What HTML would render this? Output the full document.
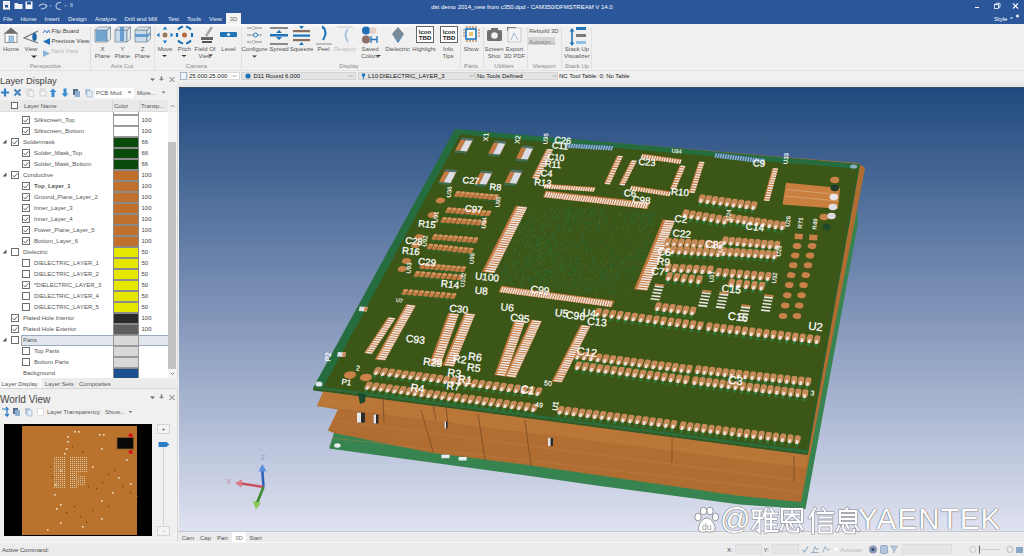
<!DOCTYPE html>
<html><head><meta charset="utf-8"><title>CAM350</title>
<style>
html,body{margin:0;padding:0}
body{width:1024px;height:556px;overflow:hidden;position:relative;background:#f0f0f0;font-family:"Liberation Sans",sans-serif}
.t{position:absolute;white-space:nowrap}
.b{position:absolute;box-sizing:border-box}
svg{position:absolute;overflow:visible}
</style></head><body>
<div class="b" style="left:0px;top:0px;width:1024px;height:24px;background:#2b579a;"></div>
<svg style="left:0;top:0" width="80" height="13">
<rect x="3.5" y="1.5" width="6" height="7.5" fill="#dfe6f2" stroke="#fff" stroke-width="1"/>
<rect x="5" y="5" width="3" height="2.5" fill="#2b579a"/>
<path d="M14.5 3 h3 l1 1 h4 v5 h-8z" fill="#eef2f8"/>
<rect x="25.5" y="1.5" width="7" height="7.5" fill="#f4f6fb"/>
<rect x="27" y="2" width="4" height="2.5" fill="#2b579a"/>
<path d="M39 6 q4 -4 8 0 q-2 3 -6 3" fill="none" stroke="#b9c8e4" stroke-width="1.1"/>
<path d="M49 5.5 l1.5 1 l1.5 -1" fill="#b9c8e4"/>
<path d="M61 2.5 q-5 0 -5 3.5 q0 3.5 5 3.5" fill="none" stroke="#b9c8e4" stroke-width="1.1"/>
<path d="M64 5.5 l1.5 1 l1.5 -1" fill="#b9c8e4"/>
<path d="M70 4 h3 M70 6 h3" stroke="#dfe6f2" stroke-width="0.8"/>
</svg>
<div class="t" style="left:322px;width:400px;text-align:center;top:3.6px;font-size:6px;line-height:7.8px;color:#ffffff;font-weight:normal;">dst demo 2014_new from c350.dpd - CAM350/DFMSTREAM V 14.0</div>
<svg style="left:970px;top:0" width="54" height="24">
<path d="M5 7.5 h4" stroke="#fff" stroke-width="1"/>
<rect x="24.5" y="4.5" width="4" height="4" fill="none" stroke="#fff" stroke-width="0.8"/>
<path d="M26 4.5 v-1.2 h4 v4 h-1.2" fill="none" stroke="#fff" stroke-width="0.8"/>
<path d="M43 3.5 l5 5 M48 3.5 l-5 5" stroke="#fff" stroke-width="1.1"/>
</svg>
<div class="t" style="left:3px;top:15.9px;font-size:6px;line-height:7.8px;color:#e9eef7;font-weight:normal;">File</div>
<div class="t" style="left:20.5px;top:15.9px;font-size:6px;line-height:7.8px;color:#e9eef7;font-weight:normal;">Home</div>
<div class="t" style="left:44.5px;top:15.9px;font-size:6px;line-height:7.8px;color:#e9eef7;font-weight:normal;">Insert</div>
<div class="t" style="left:68px;top:15.9px;font-size:6px;line-height:7.8px;color:#e9eef7;font-weight:normal;">Design</div>
<div class="t" style="left:95px;top:15.9px;font-size:6px;line-height:7.8px;color:#e9eef7;font-weight:normal;">Analyze</div>
<div class="t" style="left:124.5px;top:15.9px;font-size:6px;line-height:7.8px;color:#e9eef7;font-weight:normal;">Drill and Mill</div>
<div class="t" style="left:168px;top:15.9px;font-size:6px;line-height:7.8px;color:#e9eef7;font-weight:normal;">Test</div>
<div class="t" style="left:187px;top:15.9px;font-size:6px;line-height:7.8px;color:#e9eef7;font-weight:normal;">Tools</div>
<div class="t" style="left:209px;top:15.9px;font-size:6px;line-height:7.8px;color:#e9eef7;font-weight:normal;">View</div>
<div class="b" style="left:226px;top:13px;width:15px;height:11px;background:#f3f3f3;"></div>
<div class="t" style="left:33.5px;width:400px;text-align:center;top:15.9px;font-size:6px;line-height:7.8px;color:#6a6a6a;font-weight:normal;">3D</div>
<div class="t" style="left:994px;top:16.1px;font-size:6px;line-height:7.8px;color:#ffffff;font-weight:normal;">Style</div>
<svg style="left:1008px;top:13px" width="16" height="10">
<path d="M2 5 h3" stroke="#fff" stroke-width="0.9"/>
<circle cx="9.5" cy="3" r="1.6" fill="#dfe6f2"/>
</svg>
<div class="b" style="left:0px;top:24px;width:1024px;height:47px;background:#f0f0f0;"></div>
<div class="b" style="left:0px;top:24px;width:592px;height:3px;background:#f7f7f9;"></div>
<div class="b" style="left:0px;top:70px;width:1024px;height:1px;background:#e2e2e2;"></div>
<div class="b" style="left:90px;top:27px;width:1px;height:42px;background:#e0e0e0;"></div>
<div class="b" style="left:154px;top:27px;width:1px;height:42px;background:#e0e0e0;"></div>
<div class="b" style="left:241px;top:27px;width:1px;height:42px;background:#e0e0e0;"></div>
<div class="b" style="left:460px;top:27px;width:1px;height:42px;background:#e0e0e0;"></div>
<div class="b" style="left:483px;top:27px;width:1px;height:42px;background:#e0e0e0;"></div>
<div class="b" style="left:527px;top:27px;width:1px;height:42px;background:#e0e0e0;"></div>
<div class="b" style="left:561px;top:27px;width:1px;height:42px;background:#e0e0e0;"></div>
<div class="b" style="left:591px;top:27px;width:1px;height:42px;background:#e0e0e0;"></div>
<div class="t" style="left:-154.5px;width:400px;text-align:center;top:62.9px;font-size:6px;line-height:7.8px;color:#8a8a8a;font-weight:normal;">Perspective</div>
<div class="t" style="left:-78px;width:400px;text-align:center;top:62.9px;font-size:6px;line-height:7.8px;color:#8a8a8a;font-weight:normal;">Axis Cut</div>
<div class="t" style="left:-3.5px;width:400px;text-align:center;top:62.9px;font-size:6px;line-height:7.8px;color:#8a8a8a;font-weight:normal;">Camera</div>
<div class="t" style="left:149px;width:400px;text-align:center;top:62.9px;font-size:6px;line-height:7.8px;color:#8a8a8a;font-weight:normal;">Display</div>
<div class="t" style="left:271px;width:400px;text-align:center;top:62.9px;font-size:6px;line-height:7.8px;color:#8a8a8a;font-weight:normal;">Parts</div>
<div class="t" style="left:304px;width:400px;text-align:center;top:62.9px;font-size:6px;line-height:7.8px;color:#8a8a8a;font-weight:normal;">Utilities</div>
<div class="t" style="left:344px;width:400px;text-align:center;top:62.9px;font-size:6px;line-height:7.8px;color:#8a8a8a;font-weight:normal;">Viewport</div>
<div class="t" style="left:377px;width:400px;text-align:center;top:62.9px;font-size:6px;line-height:7.8px;color:#8a8a8a;font-weight:normal;">Stack Up</div>
<svg style="left:0;top:24px" width="90" height="40">
<path d="M3.5 10 L11 3.5 L18.5 10 z" fill="#6e6e6e"/>
<rect x="5" y="9.5" width="12" height="9" fill="#fafafa" stroke="#8a8a8a" stroke-width="0.9"/>
<rect x="9" y="12" width="4.5" height="6.5" fill="#9ec4e4" stroke="#6f8fb0" stroke-width="0.6"/>
<path d="M38 7 L24 14 L38 19" fill="none" stroke="#707070" stroke-width="1.1"/>
<ellipse cx="34.5" cy="13" rx="2.2" ry="4" fill="#1e64a8"/>
<path d="M43 9 l2 -3 l2 3 l1.5 -3 l1.5 3" fill="none" stroke="#2c70b8" stroke-width="0.9"/>
<path d="M43 17.5 l7 -3.5 v7 z" fill="#1f6fb8"/>
<path d="M43 26 l7 3.5 l-7 3.5 z" fill="#8ab6dc"/>
<path d="M31 31.5 l3 2.5 l3 -2.5z" fill="#333"/>
</svg>
<div class="t" style="left:-189px;width:400px;text-align:center;top:46.1px;font-size:6px;line-height:7.8px;color:#555;font-weight:normal;">Home</div>
<div class="t" style="left:-169px;width:400px;text-align:center;top:46.1px;font-size:6px;line-height:7.8px;color:#555;font-weight:normal;">View</div>
<div class="t" style="left:51.5px;top:28.1px;font-size:6px;line-height:7.8px;color:#444;font-weight:normal;">Flip Board</div>
<div class="t" style="left:51.5px;top:38.1px;font-size:6px;line-height:7.8px;color:#444;font-weight:normal;">Previous View</div>
<div class="t" style="left:51.5px;top:48.1px;font-size:6px;line-height:7.8px;color:#b4b4b4;font-weight:normal;">Next View</div>
<svg style="left:0;top:0" width="160" height="60"><g transform="translate(94,26)">
<path d="M1 4 h12 v12 h-12z" fill="#c9dcec" stroke="#7c8b98" stroke-width="0.8"/>
<path d="M1 4 l3.5 -3 h12 l-3.5 3z M13 4 l3.5 -3 v12 l-3.5 3z" fill="#dfe8f0" stroke="#7c8b98" stroke-width="0.8"/>
</g><path d="M96 30 h11 v11 h-11z" fill="#5b95c8" opacity="0.8"/><g transform="translate(114,26)">
<path d="M1 4 h12 v12 h-12z" fill="#c9dcec" stroke="#7c8b98" stroke-width="0.8"/>
<path d="M1 4 l3.5 -3 h12 l-3.5 3z M13 4 l3.5 -3 v12 l-3.5 3z" fill="#dfe8f0" stroke="#7c8b98" stroke-width="0.8"/>
</g><path d="M120 27 v14 h4 v-14z" fill="#4f8fc8" opacity="0.8"/><g transform="translate(134,26)">
<path d="M1 4 h12 v12 h-12z" fill="#c9dcec" stroke="#7c8b98" stroke-width="0.8"/>
<path d="M1 4 l3.5 -3 h12 l-3.5 3z M13 4 l3.5 -3 v12 l-3.5 3z" fill="#dfe8f0" stroke="#7c8b98" stroke-width="0.8"/>
</g><path d="M135 34 h13 l2 -2 v3 l-2 2 h-13z" fill="#4f8fc8" opacity="0.8"/></svg>
<div class="t" style="left:-97.5px;width:400px;text-align:center;top:46.1px;font-size:6px;line-height:7.8px;color:#555;font-weight:normal;">X</div>
<div class="t" style="left:-97.5px;width:400px;text-align:center;top:53.1px;font-size:6px;line-height:7.8px;color:#555;font-weight:normal;">Plane</div>
<div class="t" style="left:-77.5px;width:400px;text-align:center;top:46.1px;font-size:6px;line-height:7.8px;color:#555;font-weight:normal;">Y</div>
<div class="t" style="left:-77.5px;width:400px;text-align:center;top:53.1px;font-size:6px;line-height:7.8px;color:#555;font-weight:normal;">Plane</div>
<div class="t" style="left:-57.5px;width:400px;text-align:center;top:46.1px;font-size:6px;line-height:7.8px;color:#555;font-weight:normal;">Z</div>
<div class="t" style="left:-57.5px;width:400px;text-align:center;top:53.1px;font-size:6px;line-height:7.8px;color:#555;font-weight:normal;">Plane</div>
<svg style="left:150px;top:24px" width="100" height="40">
<circle cx="15" cy="11" r="2.5" fill="#9a7a58"/>
<path d="M15 2.5 l2.3 3 h-4.6z M15 19.5 l2.3 -3 h-4.6z M6.5 11 l3 -2.3 v4.6z M23.5 11 l-3 -2.3 v4.6z" fill="#1e7ac4"/>
<circle cx="34.5" cy="11" r="2.5" fill="#b8683e"/>
<path d="M28 5.5 a9 9 0 0 1 5 -3 M36 2.5 a9 9 0 0 1 5 3 M41 16.5 a9 9 0 0 1 -5 3 M33 19.5 a9 9 0 0 1 -5 -3" fill="none" stroke="#1a6fb5" stroke-width="2.2"/>
<path d="M27 9 v4 M42 9 v4" stroke="#1a6fb5" stroke-width="2.2"/>
<path d="M62 3 l-6 9" stroke="#a8a8a8" stroke-width="2.5"/>
<rect x="51" y="13" width="12" height="3" fill="#666"/>
<rect x="52" y="17" width="10" height="2" fill="#555"/>
<rect x="70" y="8" width="17" height="5" rx="1" fill="#1f74b9"/>
<circle cx="78.5" cy="10.5" r="1.6" fill="#e8f2fb"/>
<path d="M12 31 l2.5 2 l2.5 -2z M31.5 31 l2.5 2 l2.5 -2z M58 30.5 l2.5 2 l2.5 -2z" fill="#333"/>
</svg>
<div class="t" style="left:-35px;width:400px;text-align:center;top:46.1px;font-size:6px;line-height:7.8px;color:#555;font-weight:normal;">Move</div>
<div class="t" style="left:-15.5px;width:400px;text-align:center;top:46.1px;font-size:6px;line-height:7.8px;color:#555;font-weight:normal;">Pitch</div>
<div class="t" style="left:5px;width:400px;text-align:center;top:46.1px;font-size:6px;line-height:7.8px;color:#555;font-weight:normal;">Field Of</div>
<div class="t" style="left:5px;width:400px;text-align:center;top:53.1px;font-size:6px;line-height:7.8px;color:#555;font-weight:normal;">View</div>
<div class="t" style="left:28.5px;width:400px;text-align:center;top:46.1px;font-size:6px;line-height:7.8px;color:#555;font-weight:normal;">Level</div>
<svg style="left:240px;top:24px" width="240" height="40">
<path d="M7 4 h4 M15 4 h7 M7 11 h6 M18 11 h4 M7 18 h4 M15 18 h7" stroke="#888" stroke-width="1"/>
<circle cx="13.5" cy="4" r="1.6" fill="#fff" stroke="#888" stroke-width="0.6"/>
<circle cx="15.5" cy="11" r="2" fill="#fff" stroke="#1f74b9" stroke-width="1"/>
<circle cx="13.5" cy="18" r="1.6" fill="#fff" stroke="#888" stroke-width="0.6"/>
<rect x="30" y="3" width="18" height="2" fill="#8a8a8a"/>
<rect x="30" y="10" width="18" height="2.5" fill="#1f74b9"/>
<rect x="30" y="19" width="18" height="2" fill="#8a8a8a"/>
<path d="M39 6 l-3 3 h6z M39 16 l-3 -3 h6z" fill="#1f74b9"/>
<rect x="53" y="6" width="17" height="2.2" fill="#8a7060"/>
<rect x="53" y="10.5" width="17" height="2.2" fill="#1f74b9"/>
<rect x="53" y="15" width="17" height="2.2" fill="#8a7060"/>
<path d="M61.5 5 l-2.5 -3 h5z M61.5 18 l-2.5 3 h5z" fill="#1f74b9"/>
<path d="M83 3 q5 5 0 13" fill="none" stroke="#1f74b9" stroke-width="2"/>
<path d="M82 1.5 l3 2 l-3 1.5z" fill="#1f74b9"/>
<path d="M76 20 h16" stroke="#8a8a8a" stroke-width="1"/>
<path d="M108 5 q-5 5 0 13" fill="none" stroke="#a9c7e2" stroke-width="2"/>
<path d="M97 3 h16" stroke="#c6c6c6" stroke-width="1"/>
<circle cx="126" cy="6.5" r="4" fill="#1f6fb5"/>
<circle cx="133" cy="6.5" r="3.5" fill="#e6d0c8"/>
<circle cx="126" cy="15.5" r="4" fill="#8c6f69"/>
<path d="M131 12 v7 M137 12 v7 M131 15.5 h6" stroke="#1f74b9" stroke-width="1.3"/>
<path d="M158 3 l6 7 l-6 7 l-6 -7z" fill="#7a8a98"/>
<path d="M152 10 l6 7 l6 -7 l-6 9z" fill="#2f72b3"/>
<rect x="176.5" y="2.5" width="17" height="16" fill="#fff" stroke="#555" stroke-width="0.9"/>
<rect x="200.5" y="2.5" width="17" height="16" fill="#fff" stroke="#555" stroke-width="0.9"/>
<text x="185" y="9.6" font-size="6" font-weight="bold" text-anchor="middle" fill="#222" font-family="Liberation Sans">Icon</text>
<text x="185" y="16.4" font-size="6.2" font-weight="bold" text-anchor="middle" fill="#222" font-family="Liberation Sans">TBD</text>
<text x="209" y="9.6" font-size="6" font-weight="bold" text-anchor="middle" fill="#222" font-family="Liberation Sans">Icon</text>
<text x="209" y="16.4" font-size="6.2" font-weight="bold" text-anchor="middle" fill="#222" font-family="Liberation Sans">TBD</text>
<path d="M136 31 l2.5 2 l2.5 -2z" fill="#333"/>
</svg>
<div class="t" style="left:54.5px;width:400px;text-align:center;top:46.1px;font-size:6px;line-height:7.8px;color:#555;font-weight:normal;">Configure</div>
<div class="t" style="left:79px;width:400px;text-align:center;top:46.1px;font-size:6px;line-height:7.8px;color:#555;font-weight:normal;">Spread</div>
<div class="t" style="left:101.5px;width:400px;text-align:center;top:46.1px;font-size:6px;line-height:7.8px;color:#555;font-weight:normal;">Squeeze</div>
<div class="t" style="left:123.5px;width:400px;text-align:center;top:46.1px;font-size:6px;line-height:7.8px;color:#555;font-weight:normal;">Peel</div>
<div class="t" style="left:145px;width:400px;text-align:center;top:46.1px;font-size:6px;line-height:7.8px;color:#bdbdbd;font-weight:normal;">Reapply</div>
<div class="t" style="left:170px;width:400px;text-align:center;top:46.1px;font-size:6px;line-height:7.8px;color:#555;font-weight:normal;">Saved</div>
<div class="t" style="left:170px;width:400px;text-align:center;top:53.1px;font-size:6px;line-height:7.8px;color:#555;font-weight:normal;">Colors</div>
<div class="t" style="left:197.5px;width:400px;text-align:center;top:46.1px;font-size:6px;line-height:7.8px;color:#555;font-weight:normal;">Dielectric</div>
<div class="t" style="left:224px;width:400px;text-align:center;top:46.1px;font-size:6px;line-height:7.8px;color:#555;font-weight:normal;">Highlight</div>
<div class="t" style="left:248px;width:400px;text-align:center;top:46.1px;font-size:6px;line-height:7.8px;color:#555;font-weight:normal;">Info</div>
<div class="t" style="left:248px;width:400px;text-align:center;top:53.1px;font-size:6px;line-height:7.8px;color:#555;font-weight:normal;">Tips</div>
<div class="t" style="left:271px;width:400px;text-align:center;top:46.1px;font-size:6px;line-height:7.8px;color:#555;font-weight:normal;">Show</div>
<svg style="left:250px;top:55px" width="10" height="5"><path d="M2 0.5 l2.5 2 l2.5 -2z" fill="#333"/></svg>
<svg style="left:460px;top:24px" width="140" height="40">
<rect x="6" y="5" width="10" height="10" fill="#fff" stroke="#1f74b9" stroke-width="1.6"/>
<rect x="9" y="8" width="4" height="4" fill="#f0c070"/>
<path d="M7 2 v2 M10 2 v2 M13 2 v2 M16 2 v2 M7 16 v2 M10 16 v2 M13 16 v2 M16 16 v2 M3 6 h2 M3 9 h2 M3 12 h2 M18 6 h2 M18 9 h2 M18 12 h2" stroke="#b07a4a" stroke-width="1.2"/>
<rect x="27" y="6" width="15" height="11" rx="1.5" fill="#707070"/>
<rect x="31" y="4" width="7" height="3" fill="#707070"/>
<circle cx="34.5" cy="11.5" r="3.3" fill="#f2f2f2"/>
<rect x="47" y="3" width="9" height="4" fill="#666"/>
<rect x="48" y="4" width="13" height="14" fill="#f4f4f4" stroke="#b0b0b0" stroke-width="0.6"/>
<path d="M51 16 l3 -7 l4 7" fill="none" stroke="#9fbcd8" stroke-width="1"/>
<rect x="68" y="13" width="27" height="8" fill="#d4d4d4"/>
<path d="M112 7 v13" stroke="#1f74b9" stroke-width="1.6"/>
<path d="M112 4 l-2.5 3.5 h5z M112 22 l-2.5 -3.5 h5z" fill="#1f74b9"/>
<rect x="116" y="3" width="10" height="3" fill="#1f74b9"/>
<rect x="116" y="10" width="10" height="3" fill="#7a7a7a"/>
<rect x="116" y="17" width="10" height="3" fill="#8cc0e8"/>
</svg>
<div class="t" style="left:529px;top:28.1px;font-size:6px;line-height:7.8px;color:#555;font-weight:normal;">Rebuild 3D</div>
<div class="t" style="left:529px;top:38.6px;font-size:6px;line-height:7.8px;color:#777;font-weight:normal;">Autosyn...</div>
<div class="t" style="left:294px;width:400px;text-align:center;top:46.1px;font-size:6px;line-height:7.8px;color:#555;font-weight:normal;">Screen</div>
<div class="t" style="left:294px;width:400px;text-align:center;top:53.1px;font-size:6px;line-height:7.8px;color:#555;font-weight:normal;">Shot</div>
<div class="t" style="left:314.5px;width:400px;text-align:center;top:46.1px;font-size:6px;line-height:7.8px;color:#555;font-weight:normal;">Export</div>
<div class="t" style="left:314.5px;width:400px;text-align:center;top:53.1px;font-size:6px;line-height:7.8px;color:#555;font-weight:normal;">3D PDF</div>
<div class="t" style="left:377px;width:400px;text-align:center;top:46.1px;font-size:6px;line-height:7.8px;color:#555;font-weight:normal;">Stack Up</div>
<div class="t" style="left:377px;width:400px;text-align:center;top:53.1px;font-size:6px;line-height:7.8px;color:#555;font-weight:normal;">Visualizer</div>
<div class="b" style="left:0px;top:71px;width:1024px;height:10px;background:#eeeeee;"></div>
<div class="b" style="left:0px;top:80px;width:1024px;height:7px;background:#e6e6e6;background:linear-gradient(#e9e9e9,#dcdcdc)"></div>
<div class="b" style="left:178px;top:71px;width:846px;height:16px;background:transparent;background:linear-gradient(#f0f0f0 0,#f0f0f0 60%,#e2e2e2 100%)"></div>
<svg style="left:180px;top:72px" width="10" height="9"><rect x="0.5" y="0.5" width="6" height="7" fill="#eef3f8" stroke="#8aa0b8" stroke-width="0.7"/></svg>
<div class="b" style="left:187px;top:72px;width:53px;height:8px;background:#fff;border:1px solid #dadada"></div>
<div class="t" style="left:189px;top:73.1px;font-size:6px;line-height:7.8px;color:#111;font-weight:normal;">25.000:25.000</div>
<svg style="left:232px;top:74px" width="6" height="5"><path d="M0.5 1 l2 2 l2 -2" fill="none" stroke="#888" stroke-width="0.7"/></svg>
<div class="b" style="left:241px;top:72px;width:115px;height:8px;background:#e4e4e4;border:1px solid #d4d4d4"></div>
<svg style="left:244px;top:72px" width="10" height="9"><circle cx="4" cy="4" r="2.6" fill="#1f74b9"/></svg>
<div class="t" style="left:253.5px;top:73.1px;font-size:6px;line-height:7.8px;color:#111;font-weight:normal;">D11  Round 6.000</div>
<svg style="left:348px;top:74px" width="6" height="5"><path d="M0.5 1 l2 2 l2 -2" fill="none" stroke="#999" stroke-width="0.7"/></svg>
<div class="b" style="left:358px;top:72px;width:117px;height:8px;background:#e4e4e4;border:1px solid #d4d4d4"></div>
<svg style="left:360px;top:72px" width="10" height="9"><circle cx="3.5" cy="3" r="1.8" fill="#1f74b9"/><path d="M3.5 4 v3" stroke="#1f74b9"/></svg>
<div class="t" style="left:368px;top:73.1px;font-size:6px;line-height:7.8px;color:#111;font-weight:normal;">L10:DIELECTRIC_LAYER_3</div>
<svg style="left:469px;top:74px" width="6" height="5"><path d="M0.5 1 l2 2 l2 -2" fill="none" stroke="#999" stroke-width="0.7"/></svg>
<div class="b" style="left:475px;top:72px;width:83px;height:8px;background:#e4e4e4;border:1px solid #d4d4d4"></div>
<div class="t" style="left:477px;top:73.1px;font-size:6px;line-height:7.8px;color:#111;font-weight:normal;">No Tools Defined</div>
<svg style="left:552px;top:74px" width="6" height="5"><path d="M0.5 1 l2 2 l2 -2" fill="none" stroke="#999" stroke-width="0.7"/></svg>
<div class="t" style="left:559px;top:73.3px;font-size:6px;line-height:7.8px;color:#1a1a1a;font-weight:normal;">NC Tool Table: 0: No Table</div>
<div class="b" style="left:178px;top:531px;width:846px;height:12px;background:#ececec;"></div>
<div class="b" style="left:178px;top:531px;width:846px;height:1px;background:#c8c8d0;"></div>
<div class="t" style="left:-12px;width:400px;text-align:center;top:534.6px;font-size:6px;line-height:7.8px;color:#555;font-weight:normal;">Cam</div>
<div class="t" style="left:5.5px;width:400px;text-align:center;top:534.6px;font-size:6px;line-height:7.8px;color:#555;font-weight:normal;">Cap</div>
<div class="t" style="left:22.5px;width:400px;text-align:center;top:534.6px;font-size:6px;line-height:7.8px;color:#555;font-weight:normal;">Part</div>
<div class="t" style="left:55.5px;width:400px;text-align:center;top:534.6px;font-size:6px;line-height:7.8px;color:#555;font-weight:normal;">Start</div>
<div class="b" style="left:232px;top:532px;width:14px;height:10px;background:#ffffff;"></div>
<div class="t" style="left:39px;width:400px;text-align:center;top:534.6px;font-size:6px;line-height:7.8px;color:#777;font-weight:normal;">3D</div>
<div class="b" style="left:0px;top:542px;width:1024px;height:14px;background:#ececec;"></div>
<div class="b" style="left:0px;top:542px;width:1024px;height:1px;background:#f6f6f6;"></div>
<div class="t" style="left:2px;top:546.6px;font-size:6px;line-height:7.8px;color:#444;font-weight:normal;">Active Command:</div>
<div class="t" style="left:727px;top:546.6px;font-size:6px;line-height:7.8px;color:#444;font-weight:normal;">X:</div>
<div class="b" style="left:735px;top:544px;width:27px;height:10px;background:#e6e6e6;border:1px solid #dddddd"></div>
<div class="t" style="left:763.5px;top:546.6px;font-size:6px;line-height:7.8px;color:#444;font-weight:normal;">Y:</div>
<div class="b" style="left:772px;top:544px;width:27px;height:10px;background:#e6e6e6;border:1px solid #dddddd"></div>
<svg style="left:800px;top:543px" width="224" height="13">
<path d="M2.5 6.5 l2 2.5 l3.5 -5.5" fill="none" stroke="#8fb0d0" stroke-width="1.2"/>
<path d="M13 9.5 l2 -6 l1.5 3 l2.5 -1 M11 9.5 h8" fill="none" stroke="#8fa8c0" stroke-width="0.9"/>
<path d="M23 9.5 l2 -6 l3 4 l2 -2" fill="none" stroke="#8fa8c0" stroke-width="0.9"/>
<rect x="33.5" y="3.5" width="5" height="5" fill="#fafafa" stroke="#e0e0e0" stroke-width="0.6"/>
<circle cx="73" cy="6.5" r="4" fill="#8898b8"/>
<circle cx="73" cy="6.5" r="1.6" fill="#3a4a6a"/>
<rect x="80.5" y="2.5" width="7" height="8" rx="1.5" fill="#b0c4dc" stroke="#7890b0" stroke-width="0.6"/>
<path d="M90.5 3 h7 l-4 7 v-3z" fill="#b8c8dc" stroke="#8aa0b8" stroke-width="0.6"/>
<circle cx="173" cy="6.5" r="3" fill="none" stroke="#c0c0c0" stroke-width="0.8"/>
<path d="M179.5 2.5 v8" stroke="#707070" stroke-width="1.2"/>
<path d="M180 6.5 h20" stroke="#c8c8c8" stroke-width="0.8"/>
<circle cx="210" cy="6.5" r="3" fill="none" stroke="#b0b0b0" stroke-width="0.8"/>
<rect x="216" y="4" width="7" height="6" fill="#8aa6c8"/>
</svg>
<div class="t" style="left:840px;top:546.6px;font-size:6px;line-height:7.8px;color:#bbbbbb;font-weight:normal;">Autopan</div>
<div class="b" style="left:902px;top:544px;width:50px;height:10px;background:#e6e6e6;border:1px solid #dddddd"></div>
<div class="b" style="left:0px;top:71px;width:178px;height:471px;background:#f0f0f0;"></div>
<div class="b" style="left:177px;top:86px;width:1px;height:456px;background:#d8d8d8;"></div>
<div class="t" style="left:0px;top:74.9px;font-size:9.4px;line-height:12.2px;color:#444;font-weight:normal;">Layer Display</div>
<svg style="left:140px;top:74px" width="38" height="12">
<path d="M10 4.5 l2.5 2.5 l2.5 -2.5z" fill="#666"/>
<path d="M21.5 2 v5 M20 4 h3 M19.5 5.5 h4" stroke="#777" stroke-width="0.8"/>
<path d="M29.5 3 l5 5 M34.5 3 l-5 5" stroke="#666" stroke-width="0.9"/>
</svg>
<svg style="left:0;top:87px" width="178" height="12">
<path d="M5 1.5 v8 M1 5.5 h8" stroke="#2f7ec6" stroke-width="2.2"/>
<path d="M14.5 2.5 l6 6 M20.5 2.5 l-6 6" stroke="#4a86c0" stroke-width="2.2"/>
<rect x="27" y="2" width="4.5" height="6" fill="#f4f4f4" stroke="#bdbdbd" stroke-width="0.6"/>
<rect x="29" y="3.5" width="4.5" height="6" fill="#f4f4f4" stroke="#bdbdbd" stroke-width="0.6"/>
<rect x="40" y="4" width="6" height="5" fill="#f4f4f4" stroke="#bdbdbd" stroke-width="0.6"/>
<path d="M40 2 h5" stroke="#c0c0c0" stroke-width="0.8"/>
<path d="M53 1.5 l3.5 3.5 h-2 v5 h-3 v-5 h-2z" fill="#3a8ad0"/>
<path d="M65 10 l3.5 -3.5 h-2 v-5 h-3 v5 h-2z" fill="#3a8ad0"/>
<rect x="73" y="2" width="5" height="6" fill="#557090"/>
<rect x="75" y="4" width="5" height="6" fill="#90b0d0"/>
<rect x="85" y="2" width="5" height="6" fill="#b8c8d8"/>
<rect x="87" y="4" width="5" height="6" fill="#e0ecf6" stroke="#7fa0c0" stroke-width="0.5"/>
</svg>
<div class="b" style="left:95px;top:88px;width:39px;height:10px;background:#ffffff;"></div>
<div class="t" style="left:96px;top:90.1px;font-size:6px;line-height:7.8px;color:#555;font-weight:normal;width:26px;overflow:hidden">PCB Mode</div>
<svg style="left:127px;top:91px" width="6" height="4"><path d="M0.5 0.5 l2 2 l2 -2z" fill="#777"/></svg>
<div class="t" style="left:137px;top:90.1px;font-size:6px;line-height:7.8px;color:#555;font-weight:normal;">More...</div>
<svg style="left:161px;top:91px" width="6" height="4"><path d="M0.5 0.5 l2 2 l2 -2z" fill="#777"/></svg>
<div class="b" style="left:0px;top:100px;width:168px;height:12px;background:#e9e9e9;"></div>
<div class="b" style="left:0px;top:111px;width:168px;height:1px;background:#dcdcdc;"></div>
<div class="b" style="left:11px;top:102px;width:7px;height:7px;background:#fbfbfb;border:1px solid #6a6a6a"></div>
<div class="t" style="left:24px;top:102.6px;font-size:6px;line-height:7.8px;color:#555;font-weight:normal;">Layer Name</div>
<div class="t" style="left:114px;top:102.6px;font-size:6px;line-height:7.8px;color:#555;font-weight:normal;">Color</div>
<div class="t" style="left:141px;top:102.6px;font-size:6px;line-height:7.8px;color:#555;font-weight:normal;">Transp...</div>
<svg style="left:168px;top:100px" width="10" height="12"><path d="M2.5 7 l2 -2 l2 2" fill="none" stroke="#777" stroke-width="0.8"/></svg>
<div class="b" style="left:112px;top:100px;width:1px;height:12px;background:#d8d8d8;"></div>
<div class="b" style="left:139px;top:100px;width:1px;height:12px;background:#d8d8d8;"></div>
<div class="b" style="left:0px;top:112px;width:168px;height:266px;background:#ffffff;"></div>
<div class="b" style="left:113px;top:112px;width:26px;height:3px;background:#ffffff;border:1px solid #9a9a9a;border-top:none"></div>
<div class="b" style="left:22px;top:116px;width:8px;height:8px;background:#ffffff;border:1px solid #6e6e6e"></div>
<div class="t" style="left:34px;top:117.3px;font-size:6px;line-height:7.8px;color:#555;font-weight:normal;">Silkscreen_Top</div>
<div class="b" style="left:113px;top:115px;width:26px;height:11px;background:#ffffff;border:1px solid #9a9a9a"></div>
<div class="t" style="left:141.5px;top:117.3px;font-size:6px;line-height:7.8px;color:#444;font-weight:normal;">100</div>
<div class="b" style="left:22px;top:127px;width:8px;height:8px;background:#ffffff;border:1px solid #6e6e6e"></div>
<div class="t" style="left:34px;top:128.3px;font-size:6px;line-height:7.8px;color:#555;font-weight:normal;">Silkscreen_Bottom</div>
<div class="b" style="left:113px;top:126px;width:26px;height:11px;background:#ffffff;border:1px solid #9a9a9a"></div>
<div class="t" style="left:141.5px;top:128.3px;font-size:6px;line-height:7.8px;color:#444;font-weight:normal;">100</div>
<svg style="left:2px;top:139px" width="6" height="6"><path d="M4.5 0.5 v4 h-4z" fill="#555"/></svg>
<div class="b" style="left:11px;top:138px;width:8px;height:8px;background:#ffffff;border:1px solid #6e6e6e"></div>
<div class="t" style="left:23px;top:139.3px;font-size:6px;line-height:7.8px;color:#555;font-weight:normal;">Soldermask</div>
<div class="b" style="left:113px;top:137px;width:26px;height:11px;background:#0b4a0b;border:1px solid #8a8a8a"></div>
<div class="t" style="left:141.5px;top:139.3px;font-size:6px;line-height:7.8px;color:#444;font-weight:normal;">66</div>
<div class="b" style="left:22px;top:149px;width:8px;height:8px;background:#ffffff;border:1px solid #6e6e6e"></div>
<div class="t" style="left:34px;top:150.3px;font-size:6px;line-height:7.8px;color:#555;font-weight:normal;">Solder_Mask_Top</div>
<div class="b" style="left:113px;top:148px;width:26px;height:11px;background:#0b4a0b;border:1px solid #8a8a8a"></div>
<div class="t" style="left:141.5px;top:150.3px;font-size:6px;line-height:7.8px;color:#444;font-weight:normal;">66</div>
<div class="b" style="left:22px;top:160px;width:8px;height:8px;background:#ffffff;border:1px solid #6e6e6e"></div>
<div class="t" style="left:34px;top:161.3px;font-size:6px;line-height:7.8px;color:#555;font-weight:normal;">Solder_Mask_Bottom</div>
<div class="b" style="left:113px;top:159px;width:26px;height:11px;background:#0b4a0b;border:1px solid #8a8a8a"></div>
<div class="t" style="left:141.5px;top:161.3px;font-size:6px;line-height:7.8px;color:#444;font-weight:normal;">66</div>
<svg style="left:2px;top:172px" width="6" height="6"><path d="M4.5 0.5 v4 h-4z" fill="#555"/></svg>
<div class="b" style="left:11px;top:171px;width:8px;height:8px;background:#ffffff;border:1px solid #6e6e6e"></div>
<div class="t" style="left:23px;top:172.3px;font-size:6px;line-height:7.8px;color:#555;font-weight:normal;">Conductive</div>
<div class="b" style="left:113px;top:170px;width:26px;height:11px;background:#c0702c;border:1px solid #8a8a8a"></div>
<div class="t" style="left:141.5px;top:172.3px;font-size:6px;line-height:7.8px;color:#444;font-weight:normal;">100</div>
<div class="b" style="left:22px;top:182px;width:8px;height:8px;background:#ffffff;border:1px solid #6e6e6e"></div>
<div class="t" style="left:34px;top:183.3px;font-size:6px;line-height:7.8px;color:#555;font-weight:bold;">Top_Layer_1</div>
<div class="b" style="left:113px;top:181px;width:26px;height:11px;background:#c0702c;border:1px solid #8a8a8a"></div>
<div class="t" style="left:141.5px;top:183.3px;font-size:6px;line-height:7.8px;color:#444;font-weight:normal;">100</div>
<div class="b" style="left:22px;top:193px;width:8px;height:8px;background:#ffffff;border:1px solid #6e6e6e"></div>
<div class="t" style="left:34px;top:194.3px;font-size:6px;line-height:7.8px;color:#555;font-weight:normal;">Ground_Plane_Layer_2</div>
<div class="b" style="left:113px;top:192px;width:26px;height:11px;background:#c0702c;border:1px solid #8a8a8a"></div>
<div class="t" style="left:141.5px;top:194.3px;font-size:6px;line-height:7.8px;color:#444;font-weight:normal;">100</div>
<div class="b" style="left:22px;top:204px;width:8px;height:8px;background:#ffffff;border:1px solid #6e6e6e"></div>
<div class="t" style="left:34px;top:205.3px;font-size:6px;line-height:7.8px;color:#555;font-weight:normal;">Inner_Layer_3</div>
<div class="b" style="left:113px;top:203px;width:26px;height:11px;background:#c0702c;border:1px solid #8a8a8a"></div>
<div class="t" style="left:141.5px;top:205.3px;font-size:6px;line-height:7.8px;color:#444;font-weight:normal;">100</div>
<div class="b" style="left:22px;top:215px;width:8px;height:8px;background:#ffffff;border:1px solid #6e6e6e"></div>
<div class="t" style="left:34px;top:216.3px;font-size:6px;line-height:7.8px;color:#555;font-weight:normal;">Inner_Layer_4</div>
<div class="b" style="left:113px;top:214px;width:26px;height:11px;background:#c0702c;border:1px solid #8a8a8a"></div>
<div class="t" style="left:141.5px;top:216.3px;font-size:6px;line-height:7.8px;color:#444;font-weight:normal;">100</div>
<div class="b" style="left:22px;top:226px;width:8px;height:8px;background:#ffffff;border:1px solid #6e6e6e"></div>
<div class="t" style="left:34px;top:227.3px;font-size:6px;line-height:7.8px;color:#555;font-weight:normal;">Power_Plane_Layer_5</div>
<div class="b" style="left:113px;top:225px;width:26px;height:11px;background:#c0702c;border:1px solid #8a8a8a"></div>
<div class="t" style="left:141.5px;top:227.3px;font-size:6px;line-height:7.8px;color:#444;font-weight:normal;">100</div>
<div class="b" style="left:22px;top:237px;width:8px;height:8px;background:#ffffff;border:1px solid #6e6e6e"></div>
<div class="t" style="left:34px;top:238.3px;font-size:6px;line-height:7.8px;color:#555;font-weight:normal;">Bottom_Layer_6</div>
<div class="b" style="left:113px;top:236px;width:26px;height:11px;background:#c0702c;border:1px solid #8a8a8a"></div>
<div class="t" style="left:141.5px;top:238.3px;font-size:6px;line-height:7.8px;color:#444;font-weight:normal;">100</div>
<svg style="left:2px;top:249px" width="6" height="6"><path d="M4.5 0.5 v4 h-4z" fill="#555"/></svg>
<div class="b" style="left:11px;top:248px;width:8px;height:8px;background:#ffffff;border:1px solid #6e6e6e"></div>
<div class="t" style="left:23px;top:249.3px;font-size:6px;line-height:7.8px;color:#555;font-weight:normal;">Dielectric</div>
<div class="b" style="left:113px;top:247px;width:26px;height:11px;background:#e6e600;border:1px solid #8a8a8a"></div>
<div class="t" style="left:141.5px;top:249.3px;font-size:6px;line-height:7.8px;color:#444;font-weight:normal;">50</div>
<div class="b" style="left:22px;top:259px;width:8px;height:8px;background:#ffffff;border:1px solid #6e6e6e"></div>
<div class="t" style="left:34px;top:260.3px;font-size:6px;line-height:7.8px;color:#555;font-weight:normal;">DIELECTRIC_LAYER_1</div>
<div class="b" style="left:113px;top:258px;width:26px;height:11px;background:#e6e600;border:1px solid #8a8a8a"></div>
<div class="t" style="left:141.5px;top:260.3px;font-size:6px;line-height:7.8px;color:#444;font-weight:normal;">50</div>
<div class="b" style="left:22px;top:270px;width:8px;height:8px;background:#ffffff;border:1px solid #6e6e6e"></div>
<div class="t" style="left:34px;top:271.3px;font-size:6px;line-height:7.8px;color:#555;font-weight:normal;">DIELECTRIC_LAYER_2</div>
<div class="b" style="left:113px;top:269px;width:26px;height:11px;background:#e6e600;border:1px solid #8a8a8a"></div>
<div class="t" style="left:141.5px;top:271.3px;font-size:6px;line-height:7.8px;color:#444;font-weight:normal;">50</div>
<div class="b" style="left:22px;top:281px;width:8px;height:8px;background:#ffffff;border:1px solid #6e6e6e"></div>
<div class="t" style="left:34px;top:282.3px;font-size:6px;line-height:7.8px;color:#555;font-weight:normal;">*DIELECTRIC_LAYER_3</div>
<div class="b" style="left:113px;top:280px;width:26px;height:11px;background:#e6e600;border:1px solid #8a8a8a"></div>
<div class="t" style="left:141.5px;top:282.3px;font-size:6px;line-height:7.8px;color:#444;font-weight:normal;">50</div>
<div class="b" style="left:22px;top:292px;width:8px;height:8px;background:#ffffff;border:1px solid #6e6e6e"></div>
<div class="t" style="left:34px;top:293.3px;font-size:6px;line-height:7.8px;color:#555;font-weight:normal;">DIELECTRIC_LAYER_4</div>
<div class="b" style="left:113px;top:291px;width:26px;height:11px;background:#e6e600;border:1px solid #8a8a8a"></div>
<div class="t" style="left:141.5px;top:293.3px;font-size:6px;line-height:7.8px;color:#444;font-weight:normal;">50</div>
<div class="b" style="left:22px;top:303px;width:8px;height:8px;background:#ffffff;border:1px solid #6e6e6e"></div>
<div class="t" style="left:34px;top:304.3px;font-size:6px;line-height:7.8px;color:#555;font-weight:normal;">DIELECTRIC_LAYER_5</div>
<div class="b" style="left:113px;top:302px;width:26px;height:11px;background:#e6e600;border:1px solid #8a8a8a"></div>
<div class="t" style="left:141.5px;top:304.3px;font-size:6px;line-height:7.8px;color:#444;font-weight:normal;">50</div>
<div class="b" style="left:11px;top:314px;width:8px;height:8px;background:#ffffff;border:1px solid #6e6e6e"></div>
<div class="t" style="left:23px;top:315.3px;font-size:6px;line-height:7.8px;color:#555;font-weight:normal;">Plated Hole Interior</div>
<div class="b" style="left:113px;top:313px;width:26px;height:11px;background:#2a2a2a;border:1px solid #8a8a8a"></div>
<div class="t" style="left:141.5px;top:315.3px;font-size:6px;line-height:7.8px;color:#444;font-weight:normal;">100</div>
<div class="b" style="left:11px;top:325px;width:8px;height:8px;background:#ffffff;border:1px solid #6e6e6e"></div>
<div class="t" style="left:23px;top:326.3px;font-size:6px;line-height:7.8px;color:#555;font-weight:normal;">Plated Hole Exterior</div>
<div class="b" style="left:113px;top:324px;width:26px;height:11px;background:#5e5e5e;border:1px solid #8a8a8a"></div>
<div class="t" style="left:141.5px;top:326.3px;font-size:6px;line-height:7.8px;color:#444;font-weight:normal;">100</div>
<div class="b" style="left:21px;top:335px;width:148px;height:11px;background:#e1e6ed;border:1px solid #9aaabb"></div>
<svg style="left:2px;top:337px" width="6" height="6"><path d="M4.5 0.5 v4 h-4z" fill="#555"/></svg>
<div class="b" style="left:11px;top:336px;width:8px;height:8px;background:#ffffff;border:1px solid #6e6e6e"></div>
<div class="t" style="left:23px;top:337.3px;font-size:6px;line-height:7.8px;color:#555;font-weight:normal;">Parts</div>
<div class="b" style="left:113px;top:335px;width:26px;height:11px;background:#d8d8d8;border:1px solid #9a9a9a"></div>
<div class="b" style="left:22px;top:347px;width:8px;height:8px;background:#ffffff;border:1px solid #6e6e6e"></div>
<div class="t" style="left:34px;top:348.3px;font-size:6px;line-height:7.8px;color:#555;font-weight:normal;">Top Parts</div>
<div class="b" style="left:113px;top:346px;width:26px;height:11px;background:#d8d8d8;border:1px solid #9a9a9a"></div>
<div class="b" style="left:22px;top:358px;width:8px;height:8px;background:#ffffff;border:1px solid #6e6e6e"></div>
<div class="t" style="left:34px;top:359.3px;font-size:6px;line-height:7.8px;color:#555;font-weight:normal;">Bottom Parts</div>
<div class="b" style="left:113px;top:357px;width:26px;height:11px;background:#d8d8d8;border:1px solid #9a9a9a"></div>
<div class="t" style="left:23px;top:370.3px;font-size:6px;line-height:7.8px;color:#555;font-weight:normal;">Background</div>
<div class="b" style="left:113px;top:368px;width:26px;height:11px;background:#1d4f8e;border:1px solid #8a8a8a"></div>
<svg style="left:0;top:0" width="178" height="400"><path d="M23.7 120.2 l1.6 1.8 l3 -3.6 M23.7 131.2 l1.6 1.8 l3 -3.6 M12.7 142.2 l1.6 1.8 l3 -3.6 M23.7 153.2 l1.6 1.8 l3 -3.6 M23.7 164.2 l1.6 1.8 l3 -3.6 M12.7 175.2 l1.6 1.8 l3 -3.6 M23.7 186.2 l1.6 1.8 l3 -3.6 M23.7 197.2 l1.6 1.8 l3 -3.6 M23.7 208.2 l1.6 1.8 l3 -3.6 M23.7 219.2 l1.6 1.8 l3 -3.6 M23.7 230.2 l1.6 1.8 l3 -3.6 M23.7 241.2 l1.6 1.8 l3 -3.6 M23.7 285.2 l1.6 1.8 l3 -3.6 M12.7 318.2 l1.6 1.8 l3 -3.6 M12.7 329.2 l1.6 1.8 l3 -3.6 " fill="none" stroke="#555" stroke-width="0.9"/></svg>
<div class="b" style="left:168px;top:112px;width:9px;height:266px;background:#f4f4f4;"></div>
<div class="b" style="left:168px;top:142px;width:8px;height:227px;background:#c2c2c2;"></div>
<svg style="left:168px;top:370px" width="9" height="8"><path d="M2.5 2.5 l2 2 l2 -2" fill="none" stroke="#666" stroke-width="0.8"/></svg>
<div class="b" style="left:0px;top:378px;width:178px;height:11px;background:#ececec;"></div>
<div class="b" style="left:0px;top:378px;width:42px;height:10px;background:#fafafa;"></div>
<div class="t" style="left:1.5px;top:380.6px;font-size:6px;line-height:7.8px;color:#555;font-weight:normal;">Layer Display</div>
<div class="t" style="left:45px;top:380.6px;font-size:6px;line-height:7.8px;color:#555;font-weight:normal;">Layer Sets</div>
<div class="t" style="left:79px;top:380.6px;font-size:6px;line-height:7.8px;color:#555;font-weight:normal;">Composites</div>
<div class="b" style="left:0px;top:388px;width:178px;height:1px;background:#d6d6d6;"></div>
<div class="t" style="left:0px;top:392.5px;font-size:10px;line-height:13.0px;color:#444;font-weight:normal;">World View</div>
<svg style="left:140px;top:392px" width="38" height="12">
<path d="M10 4.5 l2.5 2.5 l2.5 -2.5z" fill="#666"/>
<path d="M21.5 2 v5 M20 4 h3 M19.5 5.5 h4" stroke="#777" stroke-width="0.8"/>
<path d="M29.5 3 l5 5 M34.5 3 l-5 5" stroke="#666" stroke-width="0.9"/>
</svg>
<svg style="left:0;top:406px" width="178" height="12">
<path d="M2 3 h6 l-2 -2 M8 3 l-2 2 M7 5 v5 l-2 -2 M7 10 l2 -2" fill="none" stroke="#2f7ec6" stroke-width="1.2"/>
<rect x="13" y="2" width="5" height="6" fill="#557090"/>
<rect x="15" y="4" width="5" height="6" fill="#90b0d0"/>
<rect x="25" y="2" width="5" height="6" fill="#b8c8d8"/>
<rect x="27" y="4" width="5" height="6" fill="#e0ecf6" stroke="#7fa0c0" stroke-width="0.5"/>
<path d="M128.5 5 l2 2 l2 -2z" fill="#777"/>
</svg>
<div class="b" style="left:37px;top:408px;width:7px;height:8px;background:#ffffff;border:1px solid #e0e0e0"></div>
<div class="t" style="left:47px;top:409.1px;font-size:6px;line-height:7.8px;color:#555;font-weight:normal;">Layer Transparency</div>
<div class="t" style="left:105px;top:409.1px;font-size:6px;line-height:7.8px;color:#555;font-weight:normal;">Show...</div>
<div class="b" style="left:4px;top:424px;width:148px;height:112px;background:#000000;"></div>
<div class="b" style="left:21.7px;top:426.2px;width:115px;height:108.5px;background:#b9732d;"></div>
<svg style="left:21.7px;top:426.2px" width="116" height="109"><rect x="95" y="11.5" width="16.7" height="11.5" fill="#0a0a0a" stroke="#8a5a2a" stroke-width="0.8"/><circle cx="108.6" cy="9.4" r="2.1" fill="#d41414"/><circle cx="108.6" cy="26" r="2.1" fill="#d41414"/><rect x="32" y="31" width="1.1" height="1.1" fill="#d8c09a"/><rect x="32" y="33" width="1.1" height="1.1" fill="#d8c09a"/><rect x="32" y="35" width="1.1" height="1.1" fill="#d8c09a"/><rect x="32" y="37" width="1.1" height="1.1" fill="#d8c09a"/><rect x="32" y="39" width="1.1" height="1.1" fill="#d8c09a"/><rect x="32" y="41" width="1.1" height="1.1" fill="#d8c09a"/><rect x="32" y="43" width="1.1" height="1.1" fill="#d8c09a"/><rect x="32" y="45" width="1.1" height="1.1" fill="#d8c09a"/><rect x="32" y="47" width="1.1" height="1.1" fill="#d8c09a"/><rect x="32" y="49" width="1.1" height="1.1" fill="#d8c09a"/><rect x="32" y="51" width="1.1" height="1.1" fill="#d8c09a"/><rect x="32" y="53" width="1.1" height="1.1" fill="#d8c09a"/><rect x="32" y="55" width="1.1" height="1.1" fill="#d8c09a"/><rect x="32" y="57" width="1.1" height="1.1" fill="#d8c09a"/><rect x="32" y="59" width="1.1" height="1.1" fill="#d8c09a"/><rect x="32" y="61" width="1.1" height="1.1" fill="#d8c09a"/><rect x="34" y="31" width="1.1" height="1.1" fill="#d8c09a"/><rect x="34" y="33" width="1.1" height="1.1" fill="#d8c09a"/><rect x="34" y="35" width="1.1" height="1.1" fill="#d8c09a"/><rect x="34" y="37" width="1.1" height="1.1" fill="#d8c09a"/><rect x="34" y="39" width="1.1" height="1.1" fill="#d8c09a"/><rect x="34" y="41" width="1.1" height="1.1" fill="#d8c09a"/><rect x="34" y="43" width="1.1" height="1.1" fill="#d8c09a"/><rect x="34" y="45" width="1.1" height="1.1" fill="#d8c09a"/><rect x="34" y="47" width="1.1" height="1.1" fill="#d8c09a"/><rect x="34" y="49" width="1.1" height="1.1" fill="#d8c09a"/><rect x="34" y="51" width="1.1" height="1.1" fill="#d8c09a"/><rect x="34" y="53" width="1.1" height="1.1" fill="#d8c09a"/><rect x="34" y="55" width="1.1" height="1.1" fill="#d8c09a"/><rect x="34" y="57" width="1.1" height="1.1" fill="#d8c09a"/><rect x="34" y="59" width="1.1" height="1.1" fill="#d8c09a"/><rect x="34" y="61" width="1.1" height="1.1" fill="#d8c09a"/><rect x="36" y="31" width="1.1" height="1.1" fill="#d8c09a"/><rect x="36" y="33" width="1.1" height="1.1" fill="#d8c09a"/><rect x="36" y="35" width="1.1" height="1.1" fill="#d8c09a"/><rect x="36" y="37" width="1.1" height="1.1" fill="#d8c09a"/><rect x="36" y="39" width="1.1" height="1.1" fill="#d8c09a"/><rect x="36" y="41" width="1.1" height="1.1" fill="#d8c09a"/><rect x="36" y="43" width="1.1" height="1.1" fill="#d8c09a"/><rect x="36" y="45" width="1.1" height="1.1" fill="#d8c09a"/><rect x="36" y="47" width="1.1" height="1.1" fill="#d8c09a"/><rect x="36" y="49" width="1.1" height="1.1" fill="#d8c09a"/><rect x="36" y="51" width="1.1" height="1.1" fill="#d8c09a"/><rect x="36" y="53" width="1.1" height="1.1" fill="#d8c09a"/><rect x="36" y="55" width="1.1" height="1.1" fill="#d8c09a"/><rect x="36" y="57" width="1.1" height="1.1" fill="#d8c09a"/><rect x="36" y="59" width="1.1" height="1.1" fill="#d8c09a"/><rect x="36" y="61" width="1.1" height="1.1" fill="#d8c09a"/><rect x="38" y="31" width="1.1" height="1.1" fill="#d8c09a"/><rect x="38" y="33" width="1.1" height="1.1" fill="#d8c09a"/><rect x="38" y="35" width="1.1" height="1.1" fill="#d8c09a"/><rect x="38" y="37" width="1.1" height="1.1" fill="#d8c09a"/><rect x="38" y="39" width="1.1" height="1.1" fill="#d8c09a"/><rect x="38" y="41" width="1.1" height="1.1" fill="#d8c09a"/><rect x="38" y="43" width="1.1" height="1.1" fill="#d8c09a"/><rect x="38" y="45" width="1.1" height="1.1" fill="#d8c09a"/><rect x="38" y="47" width="1.1" height="1.1" fill="#d8c09a"/><rect x="38" y="49" width="1.1" height="1.1" fill="#d8c09a"/><rect x="38" y="51" width="1.1" height="1.1" fill="#d8c09a"/><rect x="38" y="53" width="1.1" height="1.1" fill="#d8c09a"/><rect x="38" y="55" width="1.1" height="1.1" fill="#d8c09a"/><rect x="38" y="57" width="1.1" height="1.1" fill="#d8c09a"/><rect x="38" y="59" width="1.1" height="1.1" fill="#d8c09a"/><rect x="38" y="61" width="1.1" height="1.1" fill="#d8c09a"/><rect x="40" y="31" width="1.1" height="1.1" fill="#d8c09a"/><rect x="40" y="33" width="1.1" height="1.1" fill="#d8c09a"/><rect x="40" y="35" width="1.1" height="1.1" fill="#d8c09a"/><rect x="40" y="37" width="1.1" height="1.1" fill="#d8c09a"/><rect x="40" y="39" width="1.1" height="1.1" fill="#d8c09a"/><rect x="40" y="41" width="1.1" height="1.1" fill="#d8c09a"/><rect x="40" y="43" width="1.1" height="1.1" fill="#d8c09a"/><rect x="40" y="45" width="1.1" height="1.1" fill="#d8c09a"/><rect x="40" y="47" width="1.1" height="1.1" fill="#d8c09a"/><rect x="40" y="49" width="1.1" height="1.1" fill="#d8c09a"/><rect x="40" y="51" width="1.1" height="1.1" fill="#d8c09a"/><rect x="40" y="53" width="1.1" height="1.1" fill="#d8c09a"/><rect x="40" y="55" width="1.1" height="1.1" fill="#d8c09a"/><rect x="40" y="57" width="1.1" height="1.1" fill="#d8c09a"/><rect x="40" y="59" width="1.1" height="1.1" fill="#d8c09a"/><rect x="40" y="61" width="1.1" height="1.1" fill="#d8c09a"/><rect x="42" y="31" width="1.1" height="1.1" fill="#d8c09a"/><rect x="42" y="33" width="1.1" height="1.1" fill="#d8c09a"/><rect x="42" y="35" width="1.1" height="1.1" fill="#d8c09a"/><rect x="42" y="37" width="1.1" height="1.1" fill="#d8c09a"/><rect x="42" y="39" width="1.1" height="1.1" fill="#d8c09a"/><rect x="42" y="41" width="1.1" height="1.1" fill="#d8c09a"/><rect x="42" y="43" width="1.1" height="1.1" fill="#d8c09a"/><rect x="42" y="45" width="1.1" height="1.1" fill="#d8c09a"/><rect x="42" y="47" width="1.1" height="1.1" fill="#d8c09a"/><rect x="42" y="49" width="1.1" height="1.1" fill="#d8c09a"/><rect x="42" y="51" width="1.1" height="1.1" fill="#d8c09a"/><rect x="42" y="53" width="1.1" height="1.1" fill="#d8c09a"/><rect x="42" y="55" width="1.1" height="1.1" fill="#d8c09a"/><rect x="42" y="57" width="1.1" height="1.1" fill="#d8c09a"/><rect x="42" y="59" width="1.1" height="1.1" fill="#d8c09a"/><rect x="42" y="61" width="1.1" height="1.1" fill="#d8c09a"/><rect x="48" y="31" width="1.1" height="1.1" fill="#d8c09a"/><rect x="48" y="33" width="1.1" height="1.1" fill="#d8c09a"/><rect x="48" y="35" width="1.1" height="1.1" fill="#d8c09a"/><rect x="48" y="37" width="1.1" height="1.1" fill="#d8c09a"/><rect x="48" y="39" width="1.1" height="1.1" fill="#d8c09a"/><rect x="48" y="41" width="1.1" height="1.1" fill="#d8c09a"/><rect x="48" y="43" width="1.1" height="1.1" fill="#d8c09a"/><rect x="48" y="45" width="1.1" height="1.1" fill="#d8c09a"/><rect x="50" y="31" width="1.1" height="1.1" fill="#d8c09a"/><rect x="50" y="33" width="1.1" height="1.1" fill="#d8c09a"/><rect x="50" y="35" width="1.1" height="1.1" fill="#d8c09a"/><rect x="50" y="37" width="1.1" height="1.1" fill="#d8c09a"/><rect x="50" y="39" width="1.1" height="1.1" fill="#d8c09a"/><rect x="50" y="41" width="1.1" height="1.1" fill="#d8c09a"/><rect x="50" y="43" width="1.1" height="1.1" fill="#d8c09a"/><rect x="50" y="45" width="1.1" height="1.1" fill="#d8c09a"/><rect x="52" y="31" width="1.1" height="1.1" fill="#d8c09a"/><rect x="52" y="33" width="1.1" height="1.1" fill="#d8c09a"/><rect x="52" y="35" width="1.1" height="1.1" fill="#d8c09a"/><rect x="52" y="37" width="1.1" height="1.1" fill="#d8c09a"/><rect x="52" y="39" width="1.1" height="1.1" fill="#d8c09a"/><rect x="52" y="41" width="1.1" height="1.1" fill="#d8c09a"/><rect x="52" y="43" width="1.1" height="1.1" fill="#d8c09a"/><rect x="52" y="45" width="1.1" height="1.1" fill="#d8c09a"/><rect x="54" y="31" width="1.1" height="1.1" fill="#d8c09a"/><rect x="54" y="33" width="1.1" height="1.1" fill="#d8c09a"/><rect x="54" y="35" width="1.1" height="1.1" fill="#d8c09a"/><rect x="54" y="37" width="1.1" height="1.1" fill="#d8c09a"/><rect x="54" y="39" width="1.1" height="1.1" fill="#d8c09a"/><rect x="54" y="41" width="1.1" height="1.1" fill="#d8c09a"/><rect x="54" y="43" width="1.1" height="1.1" fill="#d8c09a"/><rect x="54" y="45" width="1.1" height="1.1" fill="#d8c09a"/><rect x="56" y="31" width="1.1" height="1.1" fill="#d8c09a"/><rect x="56" y="33" width="1.1" height="1.1" fill="#d8c09a"/><rect x="56" y="35" width="1.1" height="1.1" fill="#d8c09a"/><rect x="56" y="37" width="1.1" height="1.1" fill="#d8c09a"/><rect x="56" y="39" width="1.1" height="1.1" fill="#d8c09a"/><rect x="56" y="41" width="1.1" height="1.1" fill="#d8c09a"/><rect x="56" y="43" width="1.1" height="1.1" fill="#d8c09a"/><rect x="56" y="45" width="1.1" height="1.1" fill="#d8c09a"/><rect x="58" y="31" width="1.1" height="1.1" fill="#d8c09a"/><rect x="58" y="33" width="1.1" height="1.1" fill="#d8c09a"/><rect x="58" y="35" width="1.1" height="1.1" fill="#d8c09a"/><rect x="58" y="37" width="1.1" height="1.1" fill="#d8c09a"/><rect x="58" y="39" width="1.1" height="1.1" fill="#d8c09a"/><rect x="58" y="41" width="1.1" height="1.1" fill="#d8c09a"/><rect x="58" y="43" width="1.1" height="1.1" fill="#d8c09a"/><rect x="58" y="45" width="1.1" height="1.1" fill="#d8c09a"/><rect x="60" y="31" width="1.1" height="1.1" fill="#d8c09a"/><rect x="60" y="33" width="1.1" height="1.1" fill="#d8c09a"/><rect x="60" y="35" width="1.1" height="1.1" fill="#d8c09a"/><rect x="60" y="37" width="1.1" height="1.1" fill="#d8c09a"/><rect x="60" y="39" width="1.1" height="1.1" fill="#d8c09a"/><rect x="60" y="41" width="1.1" height="1.1" fill="#d8c09a"/><rect x="60" y="43" width="1.1" height="1.1" fill="#d8c09a"/><rect x="60" y="45" width="1.1" height="1.1" fill="#d8c09a"/><rect x="62" y="31" width="1.1" height="1.1" fill="#d8c09a"/><rect x="62" y="33" width="1.1" height="1.1" fill="#d8c09a"/><rect x="62" y="35" width="1.1" height="1.1" fill="#d8c09a"/><rect x="62" y="37" width="1.1" height="1.1" fill="#d8c09a"/><rect x="62" y="39" width="1.1" height="1.1" fill="#d8c09a"/><rect x="62" y="41" width="1.1" height="1.1" fill="#d8c09a"/><rect x="62" y="43" width="1.1" height="1.1" fill="#d8c09a"/><rect x="62" y="45" width="1.1" height="1.1" fill="#d8c09a"/><rect x="64" y="31" width="1.1" height="1.1" fill="#d8c09a"/><rect x="64" y="33" width="1.1" height="1.1" fill="#d8c09a"/><rect x="64" y="35" width="1.1" height="1.1" fill="#d8c09a"/><rect x="64" y="37" width="1.1" height="1.1" fill="#d8c09a"/><rect x="64" y="39" width="1.1" height="1.1" fill="#d8c09a"/><rect x="64" y="41" width="1.1" height="1.1" fill="#d8c09a"/><rect x="64" y="43" width="1.1" height="1.1" fill="#d8c09a"/><rect x="64" y="45" width="1.1" height="1.1" fill="#d8c09a"/><rect x="48" y="47" width="1.1" height="1.1" fill="#d8c09a"/><rect x="48" y="49" width="1.1" height="1.1" fill="#d8c09a"/><rect x="48" y="51" width="1.1" height="1.1" fill="#d8c09a"/><rect x="48" y="53" width="1.1" height="1.1" fill="#d8c09a"/><rect x="48" y="55" width="1.1" height="1.1" fill="#d8c09a"/><rect x="48" y="57" width="1.1" height="1.1" fill="#d8c09a"/><rect x="48" y="59" width="1.1" height="1.1" fill="#d8c09a"/><rect x="48" y="61" width="1.1" height="1.1" fill="#d8c09a"/><rect x="50" y="47" width="1.1" height="1.1" fill="#d8c09a"/><rect x="50" y="49" width="1.1" height="1.1" fill="#d8c09a"/><rect x="50" y="51" width="1.1" height="1.1" fill="#d8c09a"/><rect x="50" y="53" width="1.1" height="1.1" fill="#d8c09a"/><rect x="50" y="55" width="1.1" height="1.1" fill="#d8c09a"/><rect x="50" y="57" width="1.1" height="1.1" fill="#d8c09a"/><rect x="50" y="59" width="1.1" height="1.1" fill="#d8c09a"/><rect x="50" y="61" width="1.1" height="1.1" fill="#d8c09a"/><rect x="52" y="47" width="1.1" height="1.1" fill="#d8c09a"/><rect x="52" y="49" width="1.1" height="1.1" fill="#d8c09a"/><rect x="52" y="51" width="1.1" height="1.1" fill="#d8c09a"/><rect x="52" y="53" width="1.1" height="1.1" fill="#d8c09a"/><rect x="52" y="55" width="1.1" height="1.1" fill="#d8c09a"/><rect x="52" y="57" width="1.1" height="1.1" fill="#d8c09a"/><rect x="52" y="59" width="1.1" height="1.1" fill="#d8c09a"/><rect x="52" y="61" width="1.1" height="1.1" fill="#d8c09a"/><rect x="54" y="47" width="1.1" height="1.1" fill="#d8c09a"/><rect x="54" y="49" width="1.1" height="1.1" fill="#d8c09a"/><rect x="54" y="51" width="1.1" height="1.1" fill="#d8c09a"/><rect x="54" y="53" width="1.1" height="1.1" fill="#d8c09a"/><rect x="54" y="55" width="1.1" height="1.1" fill="#d8c09a"/><rect x="54" y="57" width="1.1" height="1.1" fill="#d8c09a"/><rect x="54" y="59" width="1.1" height="1.1" fill="#d8c09a"/><rect x="54" y="61" width="1.1" height="1.1" fill="#d8c09a"/><rect x="56" y="50" width="1.1" height="1.1" fill="#d8c09a"/><rect x="56" y="52" width="1.1" height="1.1" fill="#d8c09a"/><rect x="56" y="54" width="1.1" height="1.1" fill="#d8c09a"/><rect x="56" y="56" width="1.1" height="1.1" fill="#d8c09a"/><rect x="56" y="58" width="1.1" height="1.1" fill="#d8c09a"/><rect x="58" y="50" width="1.1" height="1.1" fill="#d8c09a"/><rect x="58" y="52" width="1.1" height="1.1" fill="#d8c09a"/><rect x="58" y="54" width="1.1" height="1.1" fill="#d8c09a"/><rect x="58" y="56" width="1.1" height="1.1" fill="#d8c09a"/><rect x="58" y="58" width="1.1" height="1.1" fill="#d8c09a"/><rect x="60" y="50" width="1.1" height="1.1" fill="#d8c09a"/><rect x="60" y="52" width="1.1" height="1.1" fill="#d8c09a"/><rect x="60" y="54" width="1.1" height="1.1" fill="#d8c09a"/><rect x="60" y="56" width="1.1" height="1.1" fill="#d8c09a"/><rect x="60" y="58" width="1.1" height="1.1" fill="#d8c09a"/><rect x="62" y="50" width="1.1" height="1.1" fill="#d8c09a"/><rect x="62" y="52" width="1.1" height="1.1" fill="#d8c09a"/><rect x="62" y="54" width="1.1" height="1.1" fill="#d8c09a"/><rect x="62" y="56" width="1.1" height="1.1" fill="#d8c09a"/><rect x="62" y="58" width="1.1" height="1.1" fill="#d8c09a"/><rect x="45" y="10" width="1.6" height="1.6" fill="#f0e4c8"/><rect x="45" y="15" width="1.6" height="1.6" fill="#f0e4c8"/><rect x="44" y="22" width="1.6" height="1.6" fill="#f0e4c8"/><rect x="42" y="27" width="1.6" height="1.6" fill="#f0e4c8"/><rect x="33" y="58" width="1.6" height="1.6" fill="#f0e4c8"/><rect x="32" y="68" width="1.6" height="1.6" fill="#f0e4c8"/><rect x="38" y="78" width="1.6" height="1.6" fill="#f0e4c8"/><rect x="38" y="96" width="1.6" height="1.6" fill="#f0e4c8"/><rect x="77" y="8" width="1.6" height="1.6" fill="#f0e4c8"/><rect x="81" y="8" width="1.6" height="1.6" fill="#f0e4c8"/><rect x="79" y="22" width="1.6" height="1.6" fill="#f0e4c8"/><rect x="104" y="33" width="1.6" height="1.6" fill="#f0e4c8"/><rect x="108" y="57" width="1.6" height="1.6" fill="#f0e4c8"/><rect x="96" y="51" width="1.6" height="1.6" fill="#f0e4c8"/><rect x="79" y="74" width="1.6" height="1.6" fill="#f0e4c8"/><rect x="79" y="92" width="1.6" height="1.6" fill="#f0e4c8"/><rect x="38" y="44" width="1.6" height="1.6" fill="#f0e4c8"/><rect x="34" y="82" width="1.6" height="1.6" fill="#f0e4c8"/><rect x="60" y="100" width="1.6" height="1.6" fill="#f0e4c8"/><rect x="90" y="66" width="1.6" height="1.6" fill="#f0e4c8"/><rect x="70" y="40" width="1.6" height="1.6" fill="#f0e4c8"/><rect x="25" y="103" width="1.6" height="1.6" fill="#f0e4c8"/><rect x="52" y="5" width="1.6" height="1.6" fill="#f0e4c8"/><rect x="56" y="5" width="1.6" height="1.6" fill="#f0e4c8"/><rect x="50" y="20" width="1.2" height="1.2" fill="#6a4018"/><rect x="60" y="25" width="1.2" height="1.2" fill="#6a4018"/><rect x="66" y="60" width="1.2" height="1.2" fill="#6a4018"/><rect x="74" y="62" width="1.2" height="1.2" fill="#6a4018"/><rect x="80" y="56" width="1.2" height="1.2" fill="#6a4018"/><rect x="86" y="48" width="1.2" height="1.2" fill="#6a4018"/><rect x="92" y="44" width="1.2" height="1.2" fill="#6a4018"/><rect x="100" y="60" width="1.2" height="1.2" fill="#6a4018"/><rect x="108" y="66" width="1.2" height="1.2" fill="#6a4018"/><rect x="115" y="70" width="1.2" height="1.2" fill="#6a4018"/><rect x="52" y="80" width="1.2" height="1.2" fill="#6a4018"/><rect x="58" y="90" width="1.2" height="1.2" fill="#6a4018"/><rect x="64" y="96" width="1.2" height="1.2" fill="#6a4018"/><rect x="44" y="86" width="1.2" height="1.2" fill="#6a4018"/><rect x="70" y="84" width="1.2" height="1.2" fill="#6a4018"/><rect x="86" y="80" width="1.2" height="1.2" fill="#6a4018"/><rect x="30" y="50" width="1.2" height="1.2" fill="#6a4018"/><rect x="28" y="40" width="1.2" height="1.2" fill="#6a4018"/></svg>
<div class="b" style="left:157px;top:424px;width:13px;height:10px;background:#f4f4f4;border:1px solid #d4d4d4"></div>
<div class="t" style="left:-36.5px;width:400px;text-align:center;top:426.1px;font-size:6px;line-height:7.8px;color:#444;font-weight:normal;">+</div>
<div class="b" style="left:163px;top:447px;width:1px;height:78px;background:#d0d0d0;"></div>
<svg style="left:158px;top:441px" width="14" height="8"><path d="M0.5 1 h8 l3 2.5 l-3 2.5 h-8z" fill="#2f7ec6"/></svg>
<div class="b" style="left:157px;top:526px;width:13px;height:10px;background:#f4f4f4;border:1px solid #d4d4d4"></div>
<div class="t" style="left:-36.5px;width:400px;text-align:center;top:527.6px;font-size:6px;line-height:7.8px;color:#444;font-weight:normal;">-</div>
<svg style="left:179px;top:87px" width="845" height="444" viewBox="0 0 845 444">
<defs><linearGradient id="bg" x1="0" y1="0" x2="0" y2="1">
<stop offset="0" stop-color="#1f497d"/><stop offset="0.5" stop-color="#7f93b8"/><stop offset="1" stop-color="#dfe2f0"/>
</linearGradient>
<g id="pd"><rect x="-0.45" y="0.75" width="0.9" height="0.75" fill="#2f7a3a"/><rect x="-1" y="-1" width="2" height="1.8" rx="0.7" ry="0.5" fill="#c88a58"/><rect x="-0.42" y="0.05" width="0.84" height="0.8" fill="#eee6e0"/></g>
<pattern id="bga" x="0" y="0" width="3" height="4" patternUnits="userSpaceOnUse">
<rect width="3" height="4" fill="#3c5618"/><rect x="0.6" y="0" width="0.7" height="2.8" fill="#34652c" opacity="0.8"/><rect x="2.1" y="1.5" width="0.5" height="2" fill="#4a6a26" opacity="0.6"/></pattern>
<g id="rp"><rect x="-1" y="-1" width="2" height="2" rx="0.5" fill="#c07a42"/><rect x="-0.8" y="-0.9" width="1.6" height="0.6" fill="#d49a68"/><rect x="-0.6" y="1" width="1.2" height="0.5" fill="#2f6a34"/></g>
<g id="ov"><ellipse cx="0" cy="0" rx="1" ry="1" fill="#c9814a"/></g>
</defs>
<rect x="0" y="0" width="845" height="444" fill="url(#bg)"/>
<rect x="0" y="0" width="845" height="1" fill="#3a4a60"/>
<polygon points="155.0,346.0 291.0,83.0 678.0,118.0 679.0,136.0 626.5,422.0 561.0,417.5 421.0,399.0 351.0,389.0 150.0,361.5" fill="#378450"/>
<ellipse cx="158.39999999999998" cy="358.5" rx="3.2" ry="2.2" fill="#e8eef4"/>
<polygon points="134.0,302.0 144.5,304.0 138.0,319.0 159.0,322.5 149.0,343.5 155.0,346.0 251.0,365.4 351.0,378.3 561.0,409.0 622.0,415.0 686.0,81.0 679.0,76.0 276.0,43.0" fill="#b06d32"/>
<polygon points="276.0,42.0 681.0,77.0 629.0,366.0 134.0,301.0" fill="#256c3e"/>
<ellipse cx="140" cy="297" rx="3.5" ry="2.6" fill="#dfe6ee"/>
<polygon points="281.1,47.3 678.8,82.0 627.9,363.3 144.4,300.0" fill="#3c5618"/>
<path d="M423.9 158.7v2.6M369.8 154.2v2.6M378.9 192.7v2.6M404.6 153.3v2.6M460.6 178.7v2.6M453.4 133.7v2.6M433.7 160.8v2.6M379.7 142.6v2.6M386.8 181.9v2.6M418.5 186.1v2.6M437.4 180.2v2.6M440.1 184.0v2.6M403.4 124.9v2.6M438.0 199.4v2.6M428.5 132.3v2.6M424.0 190.2v2.6M441.9 166.5v2.6M362.5 183.2v2.6M389.7 124.7v2.6M399.2 176.1v2.6M337.4 190.5v2.6M344.0 145.2v2.6M402.0 162.9v2.6M452.0 131.7v2.6M408.1 181.3v2.6M460.5 172.1v2.6M464.6 157.7v2.6M395.6 155.1v2.6M343.0 183.7v2.6M337.3 160.8v2.6M367.1 190.5v2.6M412.7 124.5v2.6M431.6 163.8v2.6M359.1 130.4v2.6M468.6 131.5v2.6M448.1 180.9v2.6M358.3 155.5v2.6M412.0 124.1v2.6M453.3 124.3v2.6M367.9 196.0v2.6M463.0 136.2v2.6M356.4 182.9v2.6M371.9 137.0v2.6M379.3 119.5v2.6M383.7 194.9v2.6M357.5 156.3v2.6M471.0 128.4v2.6M451.1 190.0v2.6M422.2 152.1v2.6M350.3 187.1v2.6M433.7 189.3v2.6M389.9 126.6v2.6M434.8 128.6v2.6M366.4 164.7v2.6M473.5 136.3v2.6M366.9 197.0v2.6M463.5 125.4v2.6M383.2 157.9v2.6M452.6 153.0v2.6M464.8 166.9v2.6M459.9 160.9v2.6M363.6 159.5v2.6M463.2 130.2v2.6M375.3 192.9v2.6M378.9 119.6v2.6M406.3 140.2v2.6M423.8 152.6v2.6M358.8 195.7v2.6M341.9 180.4v2.6M420.9 191.0v2.6M469.2 136.3v2.6M384.6 183.3v2.6M395.0 187.8v2.6M434.5 177.2v2.6M358.2 185.0v2.6M395.0 131.1v2.6M333.2 173.0v2.6M455.3 188.8v2.6M443.2 172.4v2.6M355.9 189.4v2.6M350.8 143.4v2.6M376.2 145.8v2.6M417.3 122.2v2.6M419.8 195.8v2.6M329.8 186.2v2.6M394.6 185.7v2.6M392.8 123.7v2.6M364.6 185.6v2.6M363.5 143.8v2.6M368.8 181.7v2.6M426.8 134.2v2.6M439.1 187.0v2.6M380.5 136.2v2.6M349.7 157.4v2.6M353.8 167.2v2.6M402.1 192.0v2.6M398.9 138.5v2.6M433.3 177.7v2.6M430.2 173.4v2.6M376.4 139.2v2.6M372.4 122.7v2.6M356.4 182.7v2.6M411.0 199.3v2.6M368.8 156.4v2.6M465.1 167.4v2.6M410.5 190.4v2.6M373.8 130.1v2.6M345.8 152.6v2.6M412.3 135.6v2.6M362.4 149.3v2.6M351.5 193.6v2.6M405.2 144.2v2.6M442.5 155.1v2.6M438.1 141.2v2.6M379.6 171.5v2.6M398.2 173.0v2.6M446.3 181.2v2.6M393.2 181.2v2.6M416.9 121.8v2.6M368.6 197.5v2.6M410.7 171.3v2.6M372.1 150.1v2.6M344.1 188.8v2.6M432.3 194.4v2.6M385.2 122.4v2.6M352.9 152.3v2.6M372.4 158.2v2.6M379.9 163.8v2.6M420.6 150.7v2.6M421.9 182.8v2.6M364.8 190.6v2.6M367.9 197.8v2.6M396.1 166.8v2.6M348.6 136.7v2.6M412.2 143.6v2.6M440.5 139.6v2.6M372.7 174.5v2.6M461.0 192.4v2.6M361.8 191.5v2.6M399.9 122.2v2.6M339.7 182.5v2.6M447.0 141.7v2.6M436.6 194.1v2.6M425.5 142.6v2.6M324.2 180.1v2.6M373.1 196.8v2.6M421.8 186.1v2.6M400.1 189.8v2.6M435.7 185.0v2.6M455.9 186.2v2.6M436.9 192.3v2.6M371.5 120.6v2.6M422.4 127.2v2.6M413.0 162.8v2.6M365.0 135.8v2.6M396.3 189.8v2.6M419.7 137.7v2.6M322.2 193.4v2.6M399.1 125.6v2.6M344.5 185.5v2.6M343.7 126.6v2.6M459.3 124.5v2.6M387.3 142.9v2.6M342.2 194.2v2.6M339.2 173.3v2.6M406.2 151.6v2.6M391.7 146.1v2.6M414.5 168.7v2.6M430.4 197.7v2.6M339.7 166.2v2.6M459.4 190.6v2.6M332.1 193.2v2.6M395.4 160.6v2.6M367.0 167.4v2.6M408.1 153.2v2.6M436.6 186.0v2.6M357.2 163.0v2.6M471.6 152.5v2.6M428.0 158.4v2.6M425.7 133.5v2.6M329.1 183.6v2.6M408.3 128.9v2.6M428.8 162.4v2.6M413.5 176.1v2.6M472.3 131.6v2.6M328.5 171.6v2.6M378.5 129.0v2.6M402.2 197.5v2.6M406.2 189.2v2.6M373.2 197.7v2.6M359.2 151.4v2.6M341.2 197.3v2.6M403.1 196.5v2.6M366.6 189.7v2.6M417.0 146.4v2.6M381.5 162.3v2.6M340.7 167.9v2.6M381.7 181.8v2.6M422.6 171.3v2.6M432.3 146.0v2.6M415.2 122.2v2.6M367.3 137.7v2.6M373.6 174.7v2.6M453.4 169.7v2.6M352.9 134.2v2.6M399.3 133.2v2.6M410.7 133.9v2.6M335.9 182.7v2.6M421.8 195.0v2.6M399.0 167.5v2.6M351.8 155.4v2.6M394.3 183.7v2.6M449.2 152.4v2.6M459.5 127.3v2.6M412.4 170.5v2.6M360.4 193.4v2.6M471.2 132.4v2.6M454.8 181.3v2.6M390.8 138.5v2.6M393.9 173.3v2.6M407.4 137.4v2.6M366.7 124.5v2.6M349.7 158.8v2.6M441.9 161.3v2.6M463.3 128.1v2.6M384.3 168.9v2.6M323.1 185.8v2.6M387.0 133.9v2.6M412.0 200.6v2.6M342.7 142.3v2.6M343.7 152.8v2.6M417.3 202.4v2.6M467.1 154.8v2.6M427.6 181.8v2.6M384.2 184.1v2.6M399.6 161.1v2.6M361.4 193.0v2.6M426.0 192.4v2.6M394.8 125.3v2.6M363.5 160.3v2.6M349.2 150.6v2.6M375.6 166.0v2.6M342.0 135.2v2.6M396.5 182.4v2.6M351.5 175.5v2.6M415.4 169.8v2.6M390.1 177.2v2.6M475.7 126.1v2.6M432.0 194.6v2.6M372.5 183.4v2.6M379.4 176.7v2.6M416.0 177.7v2.6M342.4 125.8v2.6M347.2 151.1v2.6M362.7 189.6v2.6M415.1 130.0v2.6M460.9 130.1v2.6M390.2 168.5v2.6M347.6 134.1v2.6M466.2 140.9v2.6M331.9 188.1v2.6M334.8 195.3v2.6M351.1 129.6v2.6M343.7 153.8v2.6M441.1 171.8v2.6M357.1 197.1v2.6M361.7 163.6v2.6M464.4 185.9v2.6M355.7 183.2v2.6M370.8 147.8v2.6M411.3 161.0v2.6M345.6 191.9v2.6M447.9 172.8v2.6M447.8 182.6v2.6M400.1 173.2v2.6M432.4 167.1v2.6M397.5 120.4v2.6M459.3 190.8v2.6M453.4 190.4v2.6M351.9 176.1v2.6M439.1 133.6v2.6M407.8 166.8v2.6M376.0 129.6v2.6M416.1 134.6v2.6M376.9 151.1v2.6M368.9 152.9v2.6M406.0 193.7v2.6M375.4 179.9v2.6M344.8 147.0v2.6M353.8 154.9v2.6M425.6 188.3v2.6M461.7 132.2v2.6M414.3 128.0v2.6M379.9 187.3v2.6M430.7 179.4v2.6M339.9 136.5v2.6M359.5 151.0v2.6M417.2 194.4v2.6M381.5 169.3v2.6M394.0 132.4v2.6M350.6 158.5v2.6M374.6 164.0v2.6M368.3 132.7v2.6M369.5 168.0v2.6M362.0 169.8v2.6M410.6 202.1v2.6M395.1 158.8v2.6M353.0 159.6v2.6M348.9 123.6v2.6M386.9 152.8v2.6M398.8 170.2v2.6M438.5 128.1v2.6M410.7 183.7v2.6M467.0 163.5v2.6M382.5 155.3v2.6M397.5 198.4v2.6M342.9 183.4v2.6M366.7 163.7v2.6M423.9 189.1v2.6M407.8 159.9v2.6M452.5 146.1v2.6M401.4 193.9v2.6M430.3 202.1v2.6M468.3 169.2v2.6M362.2 189.0v2.6M385.0 145.7v2.6M353.9 159.8v2.6M446.1 159.1v2.6M406.0 134.1v2.6M422.2 173.8v2.6M418.6 177.9v2.6M376.7 157.1v2.6M395.6 180.4v2.6M416.6 169.3v2.6M441.7 181.4v2.6M423.9 190.5v2.6M388.0 135.0v2.6M363.8 163.1v2.6M442.5 176.5v2.6M396.4 173.2v2.6M371.2 186.5v2.6M395.4 131.6v2.6M408.9 141.1v2.6M456.3 156.8v2.6M376.7 155.3v2.6M416.5 156.0v2.6M363.1 190.6v2.6M466.8 163.7v2.6M358.7 156.1v2.6M399.9 181.3v2.6M459.8 166.6v2.6M401.1 175.9v2.6M361.3 168.5v2.6M348.0 153.7v2.6M421.2 187.6v2.6M348.3 166.8v2.6M375.4 188.3v2.6M465.9 172.4v2.6M432.2 177.3v2.6M334.5 184.5v2.6M357.8 195.4v2.6M465.5 166.7v2.6M389.6 135.5v2.6M424.2 183.8v2.6M357.2 187.3v2.6M355.8 163.2v2.6M355.1 166.1v2.6M387.5 138.6v2.6M463.2 129.1v2.6M391.8 178.7v2.6M344.8 143.2v2.6M451.7 187.1v2.6M404.2 178.5v2.6M375.9 165.0v2.6M467.9 158.8v2.6M391.0 141.3v2.6M390.2 200.0v2.6M404.6 121.8v2.6M420.4 199.1v2.6M432.5 163.1v2.6M351.7 135.1v2.6M353.3 169.2v2.6M450.1 181.2v2.6M411.4 121.3v2.6M433.4 123.8v2.6M434.1 184.5v2.6M474.3 125.6v2.6M378.9 129.6v2.6M365.9 157.6v2.6M351.8 167.1v2.6M391.1 154.8v2.6M328.5 163.8v2.6M367.3 192.4v2.6M389.0 134.3v2.6M401.0 156.0v2.6M464.6 130.3v2.6M379.8 130.4v2.6M379.1 135.9v2.6M361.9 150.0v2.6M396.7 189.2v2.6M417.3 174.2v2.6M386.9 126.0v2.6M435.0 174.5v2.6M346.8 169.7v2.6M349.4 190.9v2.6M370.6 134.8v2.6M337.8 167.4v2.6M452.6 168.4v2.6M470.5 126.0v2.6M396.0 194.8v2.6M467.5 158.5v2.6M375.1 181.4v2.6M341.5 196.5v2.6M419.3 141.8v2.6M363.5 165.2v2.6M457.1 162.0v2.6M409.9 143.1v2.6M335.4 160.5v2.6M345.6 158.8v2.6M389.1 171.5v2.6M358.5 138.9v2.6M366.7 143.9v2.6M436.6 135.0v2.6M319.4 196.0v2.6M445.5 134.9v2.6M339.2 181.8v2.6M431.1 169.0v2.6M379.7 157.6v2.6M365.6 147.2v2.6M429.9 188.6v2.6M374.7 131.3v2.6M326.8 183.5v2.6M374.5 164.6v2.6M460.4 199.2v2.6M393.6 178.7v2.6M384.1 177.0v2.6M382.5 135.5v2.6M400.0 141.4v2.6M373.4 128.3v2.6M339.9 141.1v2.6M387.4 198.7v2.6M359.3 178.1v2.6M455.6 129.1v2.6M469.7 126.2v2.6M474.0 129.5v2.6M464.3 170.2v2.6M475.0 126.6v2.6M429.7 135.8v2.6M383.6 172.5v2.6M404.0 150.4v2.6M412.5 181.9v2.6M345.4 168.4v2.6M365.5 183.9v2.6M357.4 152.5v2.6M415.8 127.1v2.6M446.1 168.3v2.6M384.0 143.9v2.6M412.9 185.3v2.6M424.8 187.0v2.6M424.4 165.8v2.6M361.9 135.0v2.6M367.3 196.6v2.6M339.6 160.6v2.6M332.5 191.2v2.6M373.6 146.7v2.6M423.8 133.3v2.6M342.3 157.4v2.6M396.2 134.1v2.6M404.7 181.4v2.6M397.0 155.9v2.6M463.6 194.9v2.6M378.6 157.7v2.6M352.0 195.4v2.6M382.7 187.6v2.6M360.7 193.5v2.6M384.6 181.4v2.6M375.2 152.0v2.6M386.5 182.4v2.6M424.9 202.0v2.6M387.8 164.1v2.6M444.7 162.3v2.6M444.7 204.3v2.6M376.3 159.5v2.6M351.5 164.0v2.6M327.9 179.5v2.6M334.5 153.4v2.6M394.2 184.6v2.6M409.9 126.0v2.6M456.1 179.7v2.6M434.1 179.7v2.6M407.7 199.4v2.6M454.9 123.8v2.6M430.7 141.9v2.6M429.9 203.2v2.6M423.4 185.1v2.6M358.2 148.9v2.6M468.3 144.0v2.6M382.2 136.2v2.6M398.7 122.0v2.6M455.8 160.2v2.6M450.6 181.9v2.6M353.9 137.0v2.6M419.1 138.5v2.6M449.6 164.3v2.6M399.5 134.0v2.6M423.9 187.6v2.6M350.8 129.8v2.6M457.2 136.9v2.6M423.4 123.7v2.6M416.5 193.6v2.6M392.6 197.8v2.6M349.0 180.8v2.6M366.6 186.2v2.6M452.4 190.8v2.6M386.8 165.6v2.6M388.7 130.2v2.6M434.4 174.6v2.6M389.5 129.4v2.6M445.7 130.2v2.6M473.3 133.0v2.6M397.2 170.6v2.6M350.7 191.6v2.6M389.0 123.3v2.6M469.8 133.9v2.6M452.5 127.4v2.6M358.9 184.1v2.6M357.6 155.5v2.6M464.6 152.7v2.6M374.3 197.1v2.6M447.6 123.4v2.6M343.0 141.7v2.6M411.8 182.4v2.6M429.1 192.9v2.6M342.8 180.6v2.6M359.0 150.4v2.6M386.9 195.1v2.6M355.4 159.8v2.6M364.3 177.2v2.6M402.1 185.1v2.6M457.4 163.7v2.6M391.3 132.7v2.6M418.5 156.2v2.6M424.1 197.4v2.6M431.9 168.7v2.6M353.9 125.2v2.6M414.3 171.7v2.6M361.9 136.9v2.6M446.1 188.1v2.6M376.4 143.3v2.6M441.4 172.7v2.6M414.1 189.8v2.6M337.8 152.0v2.6M386.6 159.8v2.6M357.5 183.5v2.6M413.7 135.0v2.6M411.9 133.2v2.6M360.2 187.4v2.6M387.4 197.1v2.6M384.0 140.4v2.6M468.9 136.7v2.6M398.7 122.7v2.6M413.6 122.1v2.6M348.9 169.6v2.6M347.5 176.9v2.6M382.2 128.1v2.6M353.1 141.8v2.6M464.6 139.4v2.6M400.3 198.4v2.6M391.0 175.9v2.6M395.7 178.8v2.6M353.2 181.9v2.6M431.2 167.6v2.6M470.6 127.4v2.6M447.6 169.8v2.6M438.1 185.2v2.6M447.1 192.5v2.6M367.5 154.9v2.6M436.7 157.1v2.6M432.3 203.4v2.6M365.0 151.0v2.6M402.6 124.1v2.6M329.2 164.6v2.6M402.6 133.0v2.6M469.1 131.4v2.6M395.4 176.1v2.6M401.6 160.4v2.6M439.1 133.9v2.6M444.3 175.4v2.6M342.2 158.2v2.6M334.3 174.2v2.6M405.1 195.7v2.6M355.6 190.4v2.6M352.3 175.7v2.6M349.2 191.6v2.6M415.4 159.5v2.6M458.1 161.3v2.6M444.2 199.2v2.6M397.5 136.5v2.6M438.4 189.6v2.6M465.9 140.4v2.6M369.3 129.9v2.6M464.8 131.5v2.6M383.7 182.5v2.6M402.9 151.7v2.6M470.6 131.3v2.6M371.5 162.8v2.6M322.9 185.8v2.6M447.7 140.5v2.6M455.5 172.4v2.6M377.1 158.4v2.6M354.0 174.4v2.6M361.3 160.7v2.6M320.2 196.5v2.6M473.7 138.0v2.6M391.9 119.9v2.6M390.6 164.4v2.6M390.1 124.1v2.6M378.5 179.6v2.6M408.5 135.1v2.6M416.2 196.4v2.6M446.1 125.6v2.6M394.1 137.0v2.6M463.1 165.2v2.6M348.3 175.0v2.6M354.7 149.2v2.6M329.6 190.8v2.6M360.1 154.7v2.6M370.0 150.7v2.6M402.9 144.3v2.6M372.4 185.9v2.6M383.3 130.5v2.6M428.2 136.8v2.6M404.2 120.8v2.6M421.7 182.2v2.6M460.6 178.2v2.6M374.2 145.2v2.6M466.4 127.2v2.6M375.3 183.5v2.6M375.5 125.5v2.6M371.0 124.6v2.6M410.8 194.7v2.6M328.9 186.5v2.6M401.8 146.1v2.6M461.7 165.2v2.6M351.1 128.1v2.6M405.4 129.4v2.6M356.6 128.1v2.6M365.4 197.7v2.6M412.9 193.2v2.6M454.3 138.2v2.6M463.3 124.4v2.6M470.1 132.3v2.6M424.8 126.3v2.6M401.5 177.8v2.6M411.4 124.4v2.6M369.4 160.8v2.6M398.5 158.9v2.6M392.2 153.2v2.6M362.1 141.3v2.6M421.0 180.7v2.6M358.5 165.6v2.6M398.6 126.7v2.6M415.9 180.1v2.6M435.6 171.7v2.6M352.1 189.9v2.6M383.9 123.9v2.6M375.0 170.2v2.6M356.3 186.8v2.6M421.1 142.7v2.6M399.1 157.0v2.6M455.1 177.7v2.6M435.1 191.7v2.6M370.8 155.5v2.6M369.5 167.5v2.6M390.5 128.2v2.6M367.9 167.5v2.6M428.2 193.2v2.6M363.3 171.8v2.6M456.4 169.3v2.6M354.6 188.7v2.6M407.6 201.8v2.6M347.4 132.6v2.6M361.4 138.0v2.6M461.4 161.6v2.6M362.3 154.5v2.6M348.4 141.8v2.6M396.8 127.8v2.6M429.0 159.5v2.6M368.8 162.6v2.6M429.3 189.4v2.6M340.1 130.8v2.6M346.5 117.4v2.6M388.1 159.5v2.6M361.1 198.1v2.6M407.4 134.5v2.6M393.4 156.6v2.6M353.1 196.0v2.6M385.0 132.5v2.6M370.4 159.0v2.6M352.0 168.0v2.6M345.2 178.5v2.6M376.4 193.7v2.6M406.1 155.6v2.6M445.8 161.8v2.6M378.2 123.9v2.6M426.2 124.8v2.6M364.2 137.3v2.6M380.4 123.6v2.6M371.2 175.7v2.6M359.8 151.6v2.6M382.6 154.9v2.6M393.7 195.2v2.6M445.5 129.6v2.6M361.9 186.9v2.6M395.5 128.5v2.6M445.5 204.7v2.6M379.6 170.2v2.6M449.4 166.6v2.6M348.5 190.6v2.6M443.6 176.1v2.6M406.5 159.8v2.6M384.8 141.7v2.6M350.1 169.0v2.6M336.0 181.4v2.6M420.6 122.2v2.6M390.4 122.1v2.6M449.9 170.9v2.6M427.9 198.5v2.6M368.0 195.0v2.6M392.7 176.9v2.6M464.0 125.5v2.6M468.7 127.7v2.6M394.7 130.4v2.6M470.7 148.8v2.6M390.8 120.7v2.6M362.4 177.6v2.6M408.5 193.5v2.6M420.7 194.0v2.6M453.5 130.7v2.6M374.5 187.8v2.6M459.3 169.0v2.6M370.2 183.8v2.6M360.5 185.1v2.6M378.6 140.0v2.6M369.1 185.5v2.6M383.5 196.3v2.6M434.7 140.3v2.6M457.7 160.1v2.6M432.0 203.7v2.6M465.8 141.0v2.6M355.3 191.6v2.6M361.2 155.8v2.6M422.7 123.2v2.6M381.9 178.8v2.6M384.0 157.6v2.6M346.0 171.9v2.6M470.1 137.0v2.6M381.9 177.8v2.6M381.4 177.2v2.6M365.0 149.6v2.6M454.8 175.2v2.6M351.1 172.3v2.6M391.7 183.3v2.6M411.2 126.1v2.6M366.3 182.7v2.6M454.1 134.1v2.6M414.8 201.1v2.6M385.7 130.6v2.6M435.6 203.9v2.6M378.3 166.6v2.6M420.1 134.6v2.6M396.2 197.7v2.6M467.8 168.4v2.6M326.2 192.9v2.6M434.5 153.5v2.6M377.3 127.3v2.6M352.6 194.1v2.6M395.9 182.5v2.6M456.2 168.6v2.6M418.8 140.1v2.6M345.6 183.8v2.6M370.4 183.6v2.6M361.1 155.2v2.6M405.1 122.9v2.6M416.9 164.9v2.6M436.3 136.6v2.6M366.3 199.3v2.6M386.4 193.7v2.6M395.0 160.7v2.6M442.2 194.6v2.6M467.0 158.1v2.6M378.6 152.5v2.6M454.9 180.6v2.6M347.9 146.0v2.6M408.2 194.3v2.6M373.6 172.6v2.6M360.7 162.8v2.6M450.6 184.0v2.6M341.3 129.4v2.6M436.0 133.5v2.6M400.2 197.9v2.6M359.6 143.9v2.6M464.9 162.0v2.6M370.7 188.1v2.6M447.1 134.6v2.6M434.6 128.7v2.6M355.3 173.5v2.6M423.9 183.1v2.6M388.5 122.0v2.6M473.0 127.5v2.6M470.1 125.1v2.6M351.1 147.4v2.6M428.9 187.1v2.6M400.6 127.5v2.6M325.6 184.0v2.6M410.2 144.5v2.6M462.3 134.5v2.6M387.5 170.9v2.6M463.7 170.7v2.6M361.3 177.6v2.6M407.1 164.8v2.6M468.7 164.6v2.6M416.7 152.2v2.6M397.3 188.9v2.6M412.8 192.9v2.6M350.3 146.5v2.6M343.7 189.2v2.6M352.8 188.8v2.6M372.7 182.7v2.6M426.4 181.5v2.6M415.6 173.8v2.6M372.6 129.0v2.6M355.5 147.5v2.6M334.4 176.0v2.6M426.5 164.1v2.6M406.9 195.6v2.6M408.0 201.2v2.6M360.1 121.3v2.6M360.8 175.5v2.6M371.5 161.1v2.6M403.5 130.6v2.6M469.6 125.4v2.6M389.5 185.6v2.6M412.4 161.1v2.6M438.3 170.6v2.6M398.5 172.4v2.6M369.7 182.3v2.6M375.4 195.5v2.6M419.7 132.4v2.6M428.4 186.5v2.6M369.8 182.9v2.6M382.0 176.7v2.6M466.6 147.7v2.6M376.7 166.2v2.6M371.0 145.2v2.6M345.4 172.8v2.6M420.1 134.1v2.6M441.3 125.9v2.6M397.0 122.7v2.6M376.3 147.5v2.6M433.2 126.1v2.6M452.2 158.0v2.6M335.8 178.1v2.6M335.8 189.7v2.6M338.4 174.5v2.6M344.6 139.4v2.6M364.2 198.3v2.6M402.3 169.9v2.6M378.6 196.3v2.6M467.4 124.6v2.6M433.4 156.1v2.6M387.9 135.1v2.6M380.4 138.7v2.6M333.7 171.6v2.6M327.0 177.3v2.6M402.4 179.8v2.6M449.8 144.1v2.6M457.5 129.6v2.6M386.5 132.2v2.6M380.1 188.7v2.6M417.0 134.3v2.6M409.3 200.7v2.6M343.1 195.3v2.6M376.4 175.3v2.6M386.8 124.5v2.6M368.2 162.3v2.6M371.7 161.9v2.6M327.5 193.0v2.6M353.0 171.0v2.6M464.7 140.1v2.6M418.3 198.3v2.6M411.1 176.3v2.6M326.8 185.4v2.6M373.1 138.1v2.6M339.0 153.7v2.6M412.3 157.8v2.6M370.3 161.5v2.6M398.9 194.0v2.6M366.4 194.2v2.6M364.9 169.5v2.6M394.6 126.8v2.6M391.4 126.7v2.6M364.2 191.3v2.6M474.8 133.7v2.6M387.1 175.8v2.6M379.4 158.7v2.6M352.0 142.1v2.6M466.1 146.4v2.6M417.8 196.5v2.6M415.5 178.3v2.6M428.4 177.8v2.6M382.7 153.3v2.6M406.9 162.9v2.6M458.9 169.9v2.6M343.6 188.9v2.6M333.6 195.1v2.6M394.4 185.3v2.6M453.6 179.7v2.6M421.7 188.9v2.6M432.9 144.8v2.6M327.6 167.6v2.6M411.2 135.9v2.6M342.3 136.3v2.6M341.5 134.8v2.6M445.1 133.5v2.6M354.8 191.6v2.6M458.1 166.9v2.6M367.2 186.2v2.6M461.4 173.8v2.6M414.3 192.0v2.6M425.7 187.0v2.6M343.4 154.1v2.6M375.3 146.7v2.6M436.3 125.9v2.6M451.8 201.2v2.6M380.4 138.5v2.6M460.4 159.8v2.6M367.0 149.1v2.6M390.6 185.9v2.6M423.3 174.7v2.6M359.9 148.3v2.6M362.9 193.6v2.6M345.2 135.5v2.6M442.6 145.2v2.6M337.5 185.5v2.6M407.0 158.4v2.6M413.0 202.0v2.6M427.6 145.2v2.6M455.2 186.1v2.6M420.1 127.4v2.6M360.9 158.0v2.6M351.4 192.6v2.6M350.4 149.7v2.6M372.8 160.7v2.6M396.9 182.0v2.6M361.3 167.2v2.6M372.6 161.8v2.6M399.5 188.2v2.6M414.4 125.3v2.6M331.2 172.9v2.6M458.1 140.5v2.6M446.2 178.5v2.6M344.7 152.8v2.6M360.2 126.6v2.6M339.3 135.5v2.6M378.6 168.6v2.6M359.3 158.9v2.6M336.6 178.7v2.6M463.8 147.6v2.6M377.3 198.7v2.6M371.6 170.3v2.6M397.6 158.5v2.6M456.8 178.6v2.6M456.5 126.2v2.6M346.0 148.1v2.6M397.5 177.7v2.6M393.3 182.1v2.6M354.3 139.2v2.6M449.2 128.7v2.6M424.6 188.1v2.6M387.8 177.5v2.6M344.7 178.1v2.6M363.4 170.9v2.6M327.4 190.0v2.6M426.1 131.5v2.6M362.2 127.6v2.6M397.3 158.8v2.6M417.1 172.9v2.6M432.2 179.4v2.6M354.9 168.3v2.6M424.6 184.8v2.6M422.1 193.1v2.6M368.0 150.9v2.6M432.1 170.1v2.6M431.5 199.5v2.6M332.7 172.7v2.6M334.8 163.4v2.6M427.7 130.2v2.6M397.2 195.4v2.6M324.7 184.6v2.6M360.3 168.8v2.6M326.2 180.5v2.6M405.4 122.7v2.6M398.0 181.0v2.6M365.2 159.9v2.6M441.2 152.5v2.6M452.1 127.0v2.6M454.0 144.2v2.6M451.0 129.3v2.6M367.9 153.3v2.6M403.5 148.5v2.6M445.0 158.1v2.6M349.7 192.1v2.6M459.9 127.4v2.6M397.0 143.0v2.6M376.7 122.6v2.6M375.2 174.3v2.6M420.2 158.8v2.6M398.4 200.2v2.6M383.0 154.6v2.6M362.8 136.8v2.6M435.2 145.1v2.6M384.2 148.5v2.6M402.0 185.0v2.6M365.2 181.6v2.6M372.0 165.7v2.6M400.0 133.9v2.6M441.3 180.2v2.6M386.9 130.5v2.6M344.3 139.7v2.6M421.6 141.9v2.6M347.7 157.7v2.6M369.8 153.0v2.6M446.4 127.9v2.6M390.0 200.2v2.6M406.8 127.3v2.6M349.1 171.6v2.6M423.7 132.6v2.6M411.6 137.3v2.6M384.5 143.2v2.6M344.5 166.5v2.6M414.4 125.9v2.6M445.0 200.6v2.6M431.2 178.0v2.6M406.5 160.8v2.6M415.4 129.0v2.6M409.6 146.8v2.6M423.1 168.3v2.6M373.9 170.6v2.6M389.7 142.3v2.6M394.1 196.6v2.6M385.3 196.8v2.6M341.7 181.9v2.6M414.9 181.8v2.6M371.8 138.9v2.6M374.1 168.7v2.6M439.7 185.8v2.6" stroke="#2c6632" stroke-width="1" opacity="0.7"/>
<path d="M462.6 134.4v1.6M382.5 157.0v1.6M469.6 146.0v1.6M472.5 143.5v1.6M426.5 174.4v1.6M362.5 165.5v1.6M441.8 173.1v1.6M399.0 170.4v1.6M340.9 168.3v1.6M393.6 132.4v1.6M346.9 179.7v1.6M359.7 171.0v1.6M436.5 181.6v1.6M426.8 187.2v1.6M384.7 176.5v1.6M365.1 145.6v1.6M359.8 163.6v1.6M459.5 139.8v1.6M376.1 179.2v1.6M364.2 141.0v1.6M391.0 169.2v1.6M434.1 196.4v1.6M332.3 170.8v1.6M355.6 160.7v1.6M449.1 141.2v1.6M407.2 141.0v1.6M423.4 192.6v1.6M391.3 123.4v1.6M410.2 195.0v1.6M416.1 132.3v1.6M438.6 186.6v1.6M387.4 153.9v1.6M382.4 184.0v1.6M446.6 204.8v1.6M365.0 159.0v1.6M361.2 128.0v1.6M432.4 183.2v1.6M412.6 190.5v1.6M351.6 146.6v1.6M394.1 129.0v1.6M390.6 120.3v1.6M383.5 138.3v1.6M397.2 125.7v1.6M423.9 178.0v1.6M349.7 123.0v1.6M405.0 176.1v1.6M351.2 167.5v1.6M353.4 196.8v1.6M453.8 141.3v1.6M411.0 127.2v1.6M390.8 162.5v1.6M331.3 170.2v1.6M417.2 187.0v1.6M352.4 142.3v1.6M359.7 151.8v1.6M414.7 198.2v1.6M365.6 186.9v1.6M401.2 189.4v1.6M371.3 166.6v1.6M420.2 199.1v1.6M365.7 128.7v1.6M440.3 166.8v1.6M344.2 191.3v1.6M368.1 159.1v1.6M425.8 130.2v1.6M365.4 145.1v1.6M454.5 126.6v1.6M420.7 134.8v1.6M459.1 155.9v1.6M423.1 174.0v1.6M340.7 174.2v1.6M393.8 162.9v1.6M365.8 127.1v1.6M391.3 142.8v1.6M389.1 143.3v1.6M362.2 149.3v1.6M348.3 169.0v1.6M356.2 142.5v1.6M444.6 139.4v1.6M363.8 156.2v1.6M358.6 176.4v1.6M347.4 189.7v1.6M343.9 170.9v1.6M398.1 201.3v1.6M370.3 199.1v1.6M334.7 178.9v1.6M412.4 165.6v1.6M407.1 176.8v1.6M394.0 191.7v1.6M376.9 160.2v1.6M451.4 167.4v1.6M459.7 147.2v1.6M346.5 124.6v1.6M331.3 190.1v1.6M340.7 126.6v1.6M420.5 132.5v1.6M473.1 145.5v1.6M339.8 184.5v1.6M366.6 187.6v1.6M400.1 139.4v1.6M382.0 174.4v1.6M359.1 157.5v1.6M377.7 160.6v1.6M381.1 124.2v1.6M385.7 137.9v1.6M364.9 128.4v1.6M402.9 185.2v1.6M453.0 171.2v1.6M436.6 183.6v1.6M432.0 175.9v1.6M347.1 159.5v1.6M343.5 191.2v1.6M458.5 163.2v1.6M405.5 124.9v1.6M372.1 165.4v1.6M362.6 168.4v1.6M392.9 192.5v1.6M352.5 159.3v1.6M426.2 133.5v1.6M440.7 126.3v1.6M384.5 185.8v1.6M383.4 176.7v1.6M388.0 159.6v1.6M462.6 143.1v1.6M403.6 171.0v1.6M350.8 159.6v1.6M430.9 184.3v1.6M431.7 183.1v1.6M375.6 150.0v1.6M360.6 193.5v1.6M410.9 136.8v1.6M373.2 177.1v1.6M422.3 122.2v1.6M369.4 188.9v1.6M363.1 181.8v1.6M449.6 170.6v1.6M401.4 124.7v1.6M428.0 181.6v1.6M450.8 150.0v1.6M432.6 147.8v1.6M461.0 160.1v1.6M389.9 133.8v1.6M437.4 141.0v1.6M459.5 137.5v1.6M348.6 154.0v1.6M434.6 182.7v1.6M355.4 185.1v1.6M362.2 183.5v1.6M424.8 171.5v1.6M355.6 179.6v1.6M407.9 192.5v1.6M404.5 138.6v1.6M376.3 174.0v1.6M372.4 190.4v1.6M414.9 168.2v1.6M391.4 174.5v1.6M402.6 144.6v1.6M415.3 137.9v1.6M352.2 181.7v1.6M350.9 170.9v1.6M420.4 192.2v1.6M402.7 122.1v1.6M469.1 165.2v1.6M424.9 178.3v1.6M453.3 134.5v1.6M376.3 125.0v1.6M352.8 127.6v1.6M373.1 120.1v1.6M423.9 163.8v1.6M349.9 157.2v1.6M460.6 142.7v1.6M460.9 158.8v1.6M418.1 183.7v1.6M354.3 154.3v1.6M365.6 148.1v1.6M390.7 131.5v1.6M359.9 194.6v1.6M453.6 164.0v1.6M371.2 183.6v1.6M364.4 136.4v1.6M335.5 161.3v1.6M430.3 150.4v1.6M383.2 180.8v1.6M397.5 132.5v1.6M372.2 168.0v1.6M427.3 197.3v1.6M381.2 161.4v1.6M398.2 161.3v1.6M390.4 126.9v1.6M393.7 142.5v1.6M370.8 172.2v1.6M327.8 179.6v1.6M357.5 172.6v1.6M417.2 203.2v1.6M359.4 172.0v1.6M455.8 196.1v1.6M446.2 148.0v1.6M445.2 132.1v1.6M421.7 133.7v1.6M369.1 149.7v1.6M389.7 126.2v1.6M398.5 123.6v1.6M363.5 155.6v1.6M386.0 180.6v1.6M395.9 170.6v1.6M466.9 169.5v1.6M367.4 181.0v1.6M428.7 173.2v1.6M344.5 141.2v1.6M381.6 177.7v1.6M350.7 152.9v1.6M363.3 160.4v1.6M398.8 187.2v1.6M390.7 186.1v1.6M351.1 188.2v1.6M362.8 174.0v1.6M356.7 147.9v1.6M451.3 174.9v1.6M437.9 148.5v1.6M329.8 184.4v1.6M472.8 137.7v1.6M365.8 157.7v1.6M421.6 174.7v1.6M425.8 141.8v1.6M371.7 170.1v1.6M462.9 175.3v1.6M421.9 183.9v1.6M341.0 194.9v1.6M337.8 153.0v1.6M429.6 159.6v1.6M407.4 191.1v1.6M352.6 158.7v1.6M391.0 167.6v1.6M336.3 175.3v1.6M399.0 184.5v1.6M351.4 174.2v1.6M331.7 196.0v1.6M471.5 144.3v1.6M428.5 174.2v1.6M452.1 165.6v1.6M451.1 142.3v1.6M334.8 177.3v1.6M458.9 128.9v1.6M417.1 188.2v1.6M402.1 197.0v1.6M421.7 126.4v1.6M408.6 164.7v1.6M411.6 164.6v1.6M350.7 179.7v1.6M386.5 149.7v1.6M436.4 201.3v1.6M358.3 163.3v1.6M443.1 125.4v1.6M449.8 137.5v1.6M399.0 171.8v1.6M396.4 193.9v1.6M385.3 127.3v1.6M336.4 163.9v1.6M451.5 166.3v1.6M344.1 195.7v1.6M336.8 182.0v1.6M378.9 191.0v1.6M384.9 161.4v1.6M460.0 180.9v1.6M390.3 142.2v1.6M466.6 133.2v1.6M420.5 138.3v1.6M346.4 181.2v1.6M341.3 131.5v1.6M419.9 134.2v1.6M341.5 143.9v1.6M391.4 179.2v1.6M361.7 154.5v1.6M366.2 127.5v1.6M464.7 132.5v1.6M467.5 162.4v1.6M373.0 197.7v1.6M408.9 190.2v1.6M378.2 121.2v1.6M362.6 190.3v1.6M386.9 190.1v1.6M400.9 152.4v1.6M342.6 151.2v1.6M337.7 188.3v1.6M466.0 162.4v1.6M365.6 176.2v1.6M359.3 168.4v1.6M365.8 181.8v1.6M383.7 187.8v1.6M376.2 186.6v1.6M462.4 167.8v1.6M432.3 151.0v1.6M409.4 132.7v1.6M441.3 127.8v1.6M455.9 135.2v1.6M412.0 185.0v1.6M399.9 178.3v1.6M406.6 122.3v1.6M387.9 124.9v1.6M345.7 164.9v1.6M385.9 141.5v1.6M401.0 128.2v1.6M357.5 187.2v1.6M356.7 187.1v1.6M375.7 183.6v1.6M452.9 128.3v1.6M365.3 193.5v1.6M412.1 125.4v1.6M443.4 175.2v1.6M352.8 150.8v1.6M416.7 202.7v1.6M466.1 170.2v1.6M377.8 128.6v1.6M348.8 147.9v1.6M472.3 134.5v1.6M349.5 177.5v1.6M340.1 137.9v1.6M364.7 195.7v1.6M393.4 158.4v1.6M340.4 166.5v1.6M390.1 159.4v1.6M375.2 151.1v1.6M345.4 176.2v1.6M361.3 165.8v1.6M344.9 189.5v1.6M391.2 170.6v1.6M372.9 193.6v1.6M466.7 145.6v1.6M405.6 200.2v1.6M368.4 194.2v1.6M466.0 124.7v1.6M371.7 137.2v1.6M381.0 173.1v1.6M353.5 130.5v1.6M372.5 148.8v1.6M466.2 139.4v1.6M424.1 125.4v1.6M447.6 139.1v1.6M469.0 167.5v1.6M365.8 170.3v1.6M327.1 173.4v1.6M346.1 157.7v1.6M382.8 198.3v1.6M454.9 187.5v1.6M354.1 176.7v1.6M358.9 133.4v1.6M342.7 124.6v1.6M386.9 131.2v1.6M414.8 124.2v1.6M432.7 159.0v1.6M356.7 199.2v1.6M379.3 120.0v1.6M394.9 128.0v1.6M360.6 175.3v1.6M430.5 186.9v1.6M323.0 197.1v1.6M421.9 145.9v1.6M432.0 195.8v1.6M368.9 167.2v1.6M384.5 188.9v1.6M371.6 163.5v1.6M439.5 184.2v1.6M354.8 149.4v1.6M396.2 186.4v1.6M461.2 143.0v1.6" stroke="#5a8a3e" stroke-width="0.8" opacity="0.45"/>
<polygon points="134.0,301.0 629.0,366.0 628.5,368.5 134.5,303.5" fill="#2e5a26"/>
<polygon points="678.8,82.0 681.0,77.0 629.0,366.0 627.9,363.3" fill="#2e5a26"/>
<polygon points="336.8,118.7 348.4,119.9 315.1,186.2 302.9,184.8" fill="#c47a40"/>
<path d="M338.6 120.2L347.9 121.1M337.5 122.3L346.9 123.2M336.5 124.4L345.8 125.3M335.4 126.5L344.8 127.4M334.3 128.6L343.7 129.5M333.2 130.7L342.6 131.7M332.1 132.8L341.6 133.8M331.1 135.0L340.5 135.9M330.0 137.1L339.4 138.0M328.9 139.2L338.3 140.2M327.8 141.4L337.3 142.3M326.7 143.5L336.2 144.5M325.6 145.7L335.1 146.7M324.5 147.9L334.0 148.9M323.4 150.1L332.9 151.0M322.2 152.2L331.8 153.2M321.1 154.4L330.7 155.4M320.0 156.6L329.6 157.6M318.9 158.9L328.5 159.9M317.7 161.1L327.3 162.1M316.6 163.3L326.2 164.3M315.4 165.5L325.1 166.6M314.3 167.8L324.0 168.8M313.2 170.0L322.8 171.1M312.0 172.3L321.7 173.3M310.8 174.6L320.6 175.6M309.7 176.8L319.4 177.9M308.5 179.1L318.3 180.2M307.3 181.4L317.1 182.5M306.2 183.7L315.9 184.8" stroke="#f0e8e4" stroke-width="1.4"/>
<polygon points="483.9,132.4 496.1,133.6 467.9,203.7 455.1,202.3" fill="#c47a40"/>
<path d="M485.9 134.0L495.6 134.9M485.1 136.1L494.8 137.1M484.2 138.2L493.9 139.2M483.3 140.4L493.1 141.3M482.4 142.5L492.2 143.5M481.6 144.7L491.3 145.7M480.7 146.8L490.5 147.8M479.8 149.0L489.6 150.0M478.9 151.2L488.7 152.2M478.0 153.4L487.8 154.4M477.1 155.6L487.0 156.6M476.2 157.8L486.1 158.8M475.3 160.0L485.2 161.0M474.4 162.2L484.3 163.2M473.5 164.4L483.4 165.4M472.5 166.6L482.5 167.7M471.6 168.9L481.6 169.9M470.7 171.1L480.7 172.2M469.8 173.4L479.8 174.4M468.9 175.7L478.9 176.7M467.9 177.9L477.9 179.0M467.0 180.2L477.0 181.3M466.0 182.5L476.1 183.6M465.1 184.8L475.2 185.9M464.2 187.1L474.3 188.2M463.2 189.4L473.3 190.5M462.3 191.7L472.4 192.8M461.3 194.1L471.4 195.2M460.3 196.4L470.5 197.5M459.4 198.8L469.6 199.9M458.4 201.1L468.6 202.2" stroke="#f0e8e4" stroke-width="1.4"/>
<polygon points="367.3,62.0 374.1,62.6 359.7,91.7 352.7,91.1" fill="#c47a40"/>
<path d="M368.1 62.7L373.7 63.2M367.0 64.9L372.5 65.4M365.9 67.2L371.4 67.7M364.7 69.5L370.3 70.0M363.6 71.8L369.1 72.3M362.4 74.1L368.0 74.6M361.2 76.5L366.8 77.0M360.1 78.8L365.7 79.3M358.9 81.1L364.5 81.6M357.7 83.5L363.3 84.0M356.5 85.8L362.2 86.4M355.4 88.2L361.0 88.7M354.2 90.6L359.8 91.1" stroke="#f0e8e4" stroke-width="1.4"/>
<polygon points="322.4,198.8 435.2,213.7 432.8,220.3 319.6,205.2" fill="#c47a40"/>
<path d="M324.2 200.1L321.9 205.2M326.5 200.4L324.3 205.5M328.8 200.7L326.6 205.8M331.1 201.0L328.9 206.1M333.5 201.3L331.2 206.4M335.8 201.6L333.6 206.7M338.1 201.9L335.9 207.0M340.4 202.2L338.2 207.4M342.7 202.5L340.5 207.7M345.1 202.8L342.9 208.0M347.4 203.1L345.2 208.3M349.7 203.4L347.6 208.6M352.1 203.7L349.9 208.9M354.4 204.1L352.2 209.2M356.7 204.4L354.6 209.5M359.1 204.7L356.9 209.8M361.4 205.0L359.3 210.2M363.8 205.3L361.6 210.5M366.1 205.6L364.0 210.8M368.4 205.9L366.3 211.1M370.8 206.2L368.7 211.4M373.1 206.5L371.0 211.7M375.5 206.8L373.4 212.0M377.8 207.2L375.8 212.4M380.2 207.5L378.1 212.7M382.6 207.8L380.5 213.0M384.9 208.1L382.9 213.3M387.3 208.4L385.2 213.6M389.6 208.7L387.6 213.9M392.0 209.0L390.0 214.3M394.4 209.3L392.4 214.6M396.7 209.7L394.7 214.9M399.1 210.0L397.1 215.2M401.5 210.3L399.5 215.5M403.9 210.6L401.9 215.8M406.2 210.9L404.3 216.2M408.6 211.2L406.7 216.5M411.0 211.5L409.0 216.8M413.4 211.9L411.4 217.1M415.8 212.2L413.8 217.4M418.1 212.5L416.2 217.8M420.5 212.8L418.6 218.1M422.9 213.1L421.0 218.4M425.3 213.4L423.4 218.7M427.7 213.8L425.8 219.0M430.1 214.1L428.2 219.4M432.5 214.4L430.6 219.7" stroke="#f0e8e4" stroke-width="1.4"/>
<polygon points="366.8,103.8 470.9,115.3 468.5,121.9 364.0,110.2" fill="#c47a40"/>
<path d="M368.4 105.1L366.1 110.3M370.7 105.4L368.5 110.5M373.1 105.6L370.8 110.8M375.4 105.9L373.2 111.0M377.8 106.2L375.5 111.3M380.1 106.4L377.9 111.6M382.5 106.7L380.2 111.8M384.8 106.9L382.6 112.1M387.2 107.2L385.0 112.4M389.5 107.5L387.3 112.6M391.9 107.7L389.7 112.9M394.2 108.0L392.1 113.2M396.6 108.2L394.4 113.4M399.0 108.5L396.8 113.7M401.3 108.8L399.2 113.9M403.7 109.0L401.6 114.2M406.1 109.3L403.9 114.5M408.4 109.6L406.3 114.7M410.8 109.8L408.7 115.0M413.2 110.1L411.1 115.3M415.6 110.3L413.5 115.5M417.9 110.6L415.9 115.8M420.3 110.9L418.3 116.1M422.7 111.1L420.6 116.3M425.1 111.4L423.0 116.6M427.5 111.7L425.4 116.9M429.9 111.9L427.8 117.2M432.2 112.2L430.2 117.4M434.6 112.5L432.6 117.7M437.0 112.7L435.0 118.0M439.4 113.0L437.5 118.2M441.8 113.3L439.9 118.5M444.2 113.5L442.3 118.8M446.6 113.8L444.7 119.0M449.0 114.1L447.1 119.3M451.4 114.3L449.5 119.6M453.9 114.6L451.9 119.8M456.3 114.9L454.4 120.1M458.7 115.1L456.8 120.4M461.1 115.4L459.2 120.7M463.5 115.7L461.6 120.9M465.9 115.9L464.1 121.2M468.3 116.2L466.5 121.5" stroke="#f0e8e4" stroke-width="1.4"/>
<polygon points="366.4,96.7 416.6,100.2 414.8,104.8 364.4,101.3" fill="#c47a40"/>
<path d="M367.1 97.6L365.4 101.2M369.5 97.7L367.8 101.4M371.9 97.9L370.2 101.6M374.3 98.1L372.7 101.7M376.7 98.2L375.1 101.9M379.1 98.4L377.5 102.1M381.5 98.6L379.9 102.2M383.9 98.7L382.3 102.4M386.3 98.9L384.7 102.6M388.7 99.1L387.1 102.7M391.1 99.2L389.5 102.9M393.5 99.4L392.0 103.1M395.9 99.6L394.4 103.2M398.3 99.7L396.8 103.4M400.8 99.9L399.2 103.6M403.2 100.1L401.7 103.8M405.6 100.2L404.1 103.9M408.0 100.4L406.5 104.1M410.4 100.6L408.9 104.3M412.9 100.7L411.4 104.4M415.3 100.9L413.8 104.6" stroke="#f0e8e4" stroke-width="1.4"/>
<polygon points="208.9,230.3 216.7,231.3 193.0,266.9 185.0,265.9" fill="#c47a40"/>
<path d="M209.7 231.2L216.0 231.9M208.3 233.3L214.6 234.0M206.9 235.4L213.2 236.1M205.5 237.5L211.8 238.2M204.1 239.6L210.4 240.3M202.7 241.7L209.0 242.4M201.3 243.8L207.6 244.6M199.9 245.9L206.2 246.7M198.4 248.0L204.8 248.8M197.0 250.2L203.4 251.0M195.6 252.3L201.9 253.1M194.1 254.5L200.5 255.3M192.7 256.6L199.1 257.4M191.2 258.8L197.6 259.6M189.8 261.0L196.2 261.8M188.3 263.2L194.7 263.9M186.8 265.3L193.3 266.1" stroke="#f0e8e4" stroke-width="1.4"/>
<polygon points="227.1,217.2 236.9,218.4 206.1,273.6 195.9,272.4" fill="#c47a40"/>
<path d="M228.2 218.5L236.0 219.4M227.0 220.5L234.9 221.4M225.9 222.6L233.7 223.5M224.7 224.6L232.6 225.5M223.6 226.7L231.4 227.6M222.4 228.7L230.3 229.7M221.2 230.8L229.1 231.7M220.1 232.9L227.9 233.8M218.9 235.0L226.8 235.9M217.7 237.1L225.6 238.0M216.5 239.2L224.4 240.1M215.3 241.3L223.3 242.2M214.1 243.4L222.1 244.3M213.0 245.5L220.9 246.4M211.8 247.6L219.7 248.6M210.6 249.7L218.5 250.7M209.3 251.9L217.3 252.9M208.1 254.0L216.1 255.0M206.9 256.2L214.9 257.2M205.7 258.3L213.7 259.3M204.5 260.5L212.5 261.5M203.3 262.7L211.3 263.7M202.0 264.9L210.1 265.9M200.8 267.0L208.9 268.0M199.6 269.2L207.6 270.2M198.3 271.4L206.4 272.4" stroke="#f0e8e4" stroke-width="1.4"/>
<polygon points="269.3,225.9 280.1,227.1 261.4,278.5 250.2,277.1" fill="#c47a40"/>
<path d="M270.8 227.1L279.4 228.1M270.0 229.3L278.6 230.3M269.1 231.6L277.7 232.6M268.3 233.9L276.9 234.9M267.4 236.2L276.1 237.2M266.6 238.5L275.2 239.5M265.7 240.8L274.4 241.8M264.9 243.1L273.5 244.1M264.0 245.4L272.7 246.4M263.1 247.7L271.8 248.8M262.3 250.0L271.0 251.1M261.4 252.4L270.1 253.4M260.5 254.7L269.3 255.8M259.7 257.1L268.4 258.2M258.8 259.5L267.6 260.5M257.9 261.8L266.7 262.9M257.0 264.2L265.8 265.3M256.1 266.6L264.9 267.7M255.2 269.0L264.1 270.1M254.3 271.4L263.2 272.5M253.4 273.8L262.3 275.0M252.5 276.3L261.4 277.4" stroke="#f0e8e4" stroke-width="1.4"/>
<polygon points="285.6,225.9 296.4,227.1 274.9,279.7 263.7,278.3" fill="#c47a40"/>
<path d="M287.0 227.1L295.6 228.1M286.1 229.3L294.7 230.3M285.2 231.5L293.8 232.5M284.3 233.7L292.9 234.8M283.4 236.0L292.0 237.0M282.4 238.2L291.1 239.2M281.5 240.5L290.2 241.5M280.5 242.7L289.2 243.7M279.6 245.0L288.3 246.0M278.7 247.2L287.4 248.3M277.7 249.5L286.4 250.6M276.8 251.8L285.5 252.8M275.8 254.1L284.6 255.1M274.9 256.4L283.6 257.4M273.9 258.7L282.7 259.8M272.9 261.0L281.7 262.1M272.0 263.3L280.8 264.4M271.0 265.7L279.8 266.7M270.0 268.0L278.9 269.1M269.0 270.4L277.9 271.4M268.1 272.7L276.9 273.8M267.1 275.1L276.0 276.2M266.1 277.5L275.0 278.6" stroke="#f0e8e4" stroke-width="1.4"/>
<polygon points="335.6,232.7 346.4,233.9 326.6,289.4 315.4,288.0" fill="#c47a40"/>
<path d="M337.1 234.0L345.7 234.9M336.3 236.2L344.9 237.2M335.5 238.4L344.1 239.4M334.6 240.6L343.3 241.7M333.8 242.9L342.5 243.9M333.0 245.1L341.7 246.2M332.2 247.4L340.8 248.4M331.4 249.7L340.0 250.7M330.5 252.0L339.2 253.0M329.7 254.2L338.4 255.3M328.9 256.5L337.6 257.6M328.0 258.8L336.8 259.9M327.2 261.1L335.9 262.2M326.3 263.5L335.1 264.5M325.5 265.8L334.3 266.9M324.6 268.1L333.4 269.2M323.8 270.5L332.6 271.5M322.9 272.8L331.8 273.9M322.1 275.2L330.9 276.3M321.2 277.5L330.1 278.6M320.4 279.9L329.2 281.0M319.5 282.3L328.4 283.4M318.6 284.7L327.5 285.8M317.7 287.1L326.6 288.2" stroke="#f0e8e4" stroke-width="1.4"/>
<polygon points="352.1,232.7 362.9,233.9 336.6,290.7 325.4,289.3" fill="#c47a40"/>
<path d="M353.5 234.0L362.0 235.0M352.5 236.1L361.1 237.1M351.5 238.2L360.1 239.2M350.5 240.3L359.1 241.3M349.5 242.4L358.1 243.4M348.5 244.5L357.1 245.5M347.5 246.6L356.2 247.7M346.5 248.8L355.2 249.8M345.5 250.9L354.2 251.9M344.5 253.1L353.2 254.1M343.5 255.2L352.2 256.2M342.5 257.4L351.2 258.4M341.4 259.5L350.2 260.6M340.4 261.7L349.2 262.8M339.4 263.9L348.1 264.9M338.4 266.1L347.1 267.1M337.3 268.3L346.1 269.3M336.3 270.5L345.1 271.5M335.3 272.7L344.1 273.8M334.2 274.9L343.0 276.0M333.2 277.1L342.0 278.2M332.1 279.4L341.0 280.5M331.1 281.6L339.9 282.7M330.0 283.8L338.9 284.9M328.9 286.1L337.8 287.2M327.9 288.4L336.8 289.5" stroke="#f0e8e4" stroke-width="1.4"/>
<polygon points="401.7,237.7 411.5,238.9 382.8,295.6 372.6,294.4" fill="#c47a40"/>
<path d="M402.8 239.0L410.6 239.9M401.8 241.1L409.6 242.0M400.7 243.2L408.5 244.1M399.6 245.3L407.4 246.2M398.5 247.4L406.4 248.3M397.4 249.5L405.3 250.5M396.3 251.7L404.2 252.6M395.3 253.8L403.1 254.7M394.2 255.9L402.0 256.9M393.1 258.1L401.0 259.0M392.0 260.2L399.9 261.2M390.8 262.4L398.8 263.4M389.7 264.6L397.7 265.5M388.6 266.8L396.6 267.7M387.5 268.9L395.5 269.9M386.4 271.1L394.4 272.1M385.3 273.3L393.2 274.3M384.1 275.5L392.1 276.5M383.0 277.7L391.0 278.7M381.9 279.9L389.9 280.9M380.7 282.2L388.7 283.2M379.6 284.4L387.6 285.4M378.4 286.6L386.5 287.6M377.3 288.9L385.3 289.9M376.1 291.1L384.2 292.1M375.0 293.4L383.1 294.4" stroke="#f0e8e4" stroke-width="1.4"/>
<polygon points="438.0,68.7 444.0,69.3 431.0,97.3 425.0,96.7" fill="#c47a40"/>
<path d="M438.8 69.4L443.5 69.8M437.7 71.8L442.4 72.2M436.6 74.2L441.3 74.6M435.4 76.6L440.2 77.0M434.3 79.0L439.1 79.4M433.2 81.4L438.0 81.9M432.0 83.9L436.8 84.3M430.9 86.3L435.7 86.8M429.7 88.8L434.5 89.2M428.6 91.3L433.4 91.7M427.4 93.7L432.3 94.2M426.3 96.2L431.1 96.7" stroke="#f0e8e4" stroke-width="1.4"/>
<polygon points="452.0,73.4 458.0,74.0 445.7,98.3 439.7,97.7" fill="#c47a40"/>
<path d="M452.8 74.0L457.5 74.4M451.6 76.3L456.4 76.7M450.5 78.6L455.2 79.0M449.3 80.9L454.1 81.3M448.1 83.2L452.9 83.7M446.9 85.5L451.7 86.0M445.8 87.9L450.5 88.3M444.6 90.2L449.4 90.7M443.4 92.6L448.2 93.0M442.2 94.9L447.0 95.4M441.0 97.3L445.8 97.8" stroke="#f0e8e4" stroke-width="1.4"/>
<polygon points="463.4,66.7 502.8,72.2 501.2,77.0 461.6,71.3" fill="#c47a40"/>
<path d="M463.9 67.6L462.5 71.3M466.4 67.9L465.0 71.7M468.9 68.3L467.5 72.0M471.4 68.6L470.0 72.4M473.9 69.0L472.5 72.7M476.4 69.3L475.1 73.1M478.9 69.7L477.6 73.5M481.5 70.1L480.1 73.8M484.0 70.4L482.7 74.2M486.5 70.8L485.2 74.5M489.0 71.1L487.7 74.9M491.6 71.5L490.3 75.3M494.1 71.8L492.8 75.6M496.6 72.2L495.4 76.0M499.2 72.6L497.9 76.4M501.7 72.9L500.5 76.7" stroke="#f0e8e4" stroke-width="1.4"/>
<polygon points="452.6,98.4 492.1,104.6 490.5,109.4 450.8,103.0" fill="#c47a40"/>
<path d="M453.1 99.3L451.7 103.0M455.6 99.7L454.2 103.4M458.1 100.1L456.7 103.8M460.6 100.5L459.2 104.2M463.1 100.9L461.8 104.6M465.6 101.3L464.3 105.0M468.2 101.7L466.8 105.4M470.7 102.1L469.4 105.9M473.2 102.5L471.9 106.3M475.8 102.9L474.4 106.7M478.3 103.3L477.0 107.1M480.8 103.7L479.5 107.5M483.4 104.1L482.1 107.9M485.9 104.5L484.6 108.3M488.5 104.9L487.2 108.7M491.0 105.3L489.7 109.1" stroke="#f0e8e4" stroke-width="1.4"/>
<polygon points="500.6,78.7 506.6,79.3 496.9,102.3 490.9,101.7" fill="#c47a40"/>
<path d="M501.5 79.3L506.2 79.7M500.4 81.7L505.2 82.1M499.4 84.1L504.2 84.5M498.4 86.5L503.1 87.0M497.3 89.0L502.1 89.4M496.3 91.4L501.1 91.9M495.3 93.9L500.1 94.3M494.2 96.4L499.0 96.8M493.2 98.9L498.0 99.3M492.1 101.3L496.9 101.8" stroke="#f0e8e4" stroke-width="1.4"/>
<polygon points="519.7,74.7 525.6,75.3 515.7,106.0 509.7,105.4" fill="#c47a40"/>
<path d="M520.5 75.4L525.2 75.8M519.7 77.8L524.4 78.2M518.9 80.2L523.6 80.7M518.1 82.7L522.9 83.1M517.3 85.1L522.1 85.5M516.5 87.5L521.3 88.0M515.7 90.0L520.5 90.4M514.9 92.4L519.7 92.9M514.1 94.9L518.9 95.3M513.3 97.4L518.2 97.8M512.5 99.9L517.4 100.3M511.7 102.4L516.6 102.8M510.9 104.9L515.7 105.3" stroke="#f0e8e4" stroke-width="1.4"/>
<polygon points="593.4,81.1 599.2,81.7 590.3,114.1 584.3,113.5" fill="#c47a40"/>
<path d="M594.2 81.9L598.9 82.3M593.5 84.2L598.3 84.6M592.9 86.5L597.6 87.0M592.2 88.9L597.0 89.3M591.6 91.3L596.3 91.7M590.9 93.6L595.7 94.1M590.2 96.0L595.0 96.4M589.6 98.4L594.3 98.8M588.9 100.8L593.7 101.2M588.2 103.2L593.0 103.6M587.5 105.6L592.3 106.1M586.9 108.1L591.7 108.5M586.2 110.5L591.0 110.9M585.5 112.9L590.3 113.4" stroke="#f0e8e4" stroke-width="1.4"/>
<polygon points="388.0,56.1 434.6,58.7 432.8,63.3 386.0,60.7" fill="#3d6a7a"/>
<path d="M388.7 56.7L386.9 60.8M391.2 56.8L389.4 61.0M393.6 57.0L391.8 61.1M396.1 57.1L394.3 61.3M398.6 57.3L396.8 61.4M401.1 57.4L399.3 61.5M403.6 57.5L401.8 61.7M406.0 57.7L404.3 61.8M408.5 57.8L406.8 62.0M411.0 57.9L409.3 62.1M413.5 58.1L411.8 62.2M416.0 58.2L414.3 62.4M418.5 58.4L416.8 62.5M421.0 58.5L419.3 62.7M423.5 58.6L421.8 62.8M426.0 58.8L424.3 62.9M428.5 58.9L426.8 63.1M431.0 59.1L429.3 63.2M433.5 59.2L431.8 63.4" stroke="#8fb4d8" stroke-width="1.4"/>
<polygon points="536.7,65.6 586.1,71.6 584.9,76.4 535.3,70.4" fill="#3d6a7a"/>
<path d="M537.5 66.3L536.2 70.6M540.0 66.6L538.7 70.9M542.5 66.9L541.2 71.2M545.0 67.2L543.7 71.5M547.5 67.5L546.2 71.8M549.9 67.8L548.7 72.1M552.4 68.1L551.2 72.4M554.9 68.4L553.7 72.7M557.4 68.7L556.2 73.0M559.9 69.0L558.7 73.3M562.4 69.3L561.2 73.6M564.9 69.6L563.7 73.9M567.4 69.9L566.2 74.3M569.9 70.2L568.7 74.6M572.4 70.5L571.2 74.9M574.9 70.8L573.7 75.2M577.4 71.1L576.3 75.5M580.0 71.4L578.8 75.8M582.5 71.7L581.3 76.1M585.0 72.0L583.8 76.4" stroke="#8fb4d8" stroke-width="1.4"/>
<use href="#pd" transform="matrix(2.976 0.379 -2.151 4.235 198.0 284.3)"/><use href="#pd" transform="matrix(2.976 0.379 -2.133 4.244 204.8 285.2)"/><use href="#pd" transform="matrix(2.976 0.379 -2.115 4.253 211.7 286.0)"/><use href="#pd" transform="matrix(2.976 0.379 -2.096 4.262 218.6 286.9)"/><use href="#pd" transform="matrix(2.976 0.379 -2.078 4.271 225.5 287.8)"/><use href="#pd" transform="matrix(2.976 0.379 -2.059 4.280 232.4 288.7)"/><use href="#pd" transform="matrix(2.976 0.379 -2.040 4.289 239.3 289.5)"/><use href="#pd" transform="matrix(2.976 0.379 -2.022 4.298 246.2 290.4)"/><use href="#pd" transform="matrix(2.976 0.379 -2.003 4.307 253.2 291.3)"/><use href="#pd" transform="matrix(2.976 0.379 -1.983 4.316 260.1 292.2)"/><use href="#pd" transform="matrix(2.976 0.379 -1.964 4.325 267.1 293.1)"/><use href="#pd" transform="matrix(2.976 0.379 -1.945 4.334 274.1 294.0)"/><use href="#pd" transform="matrix(2.976 0.379 -1.925 4.342 281.1 294.9)"/><use href="#pd" transform="matrix(2.976 0.379 -1.905 4.351 288.1 295.8)"/><use href="#pd" transform="matrix(2.976 0.379 -1.885 4.360 295.2 296.7)"/><use href="#pd" transform="matrix(2.976 0.379 -1.865 4.368 302.2 297.5)"/><use href="#pd" transform="matrix(2.976 0.379 -1.845 4.377 309.3 298.4)"/><use href="#pd" transform="matrix(2.976 0.379 -1.825 4.385 316.4 299.3)"/><use href="#pd" transform="matrix(2.976 0.379 -1.805 4.394 323.5 300.3)"/><use href="#pd" transform="matrix(2.976 0.379 -1.784 4.402 330.6 301.2)"/><use href="#pd" transform="matrix(2.976 0.379 -1.763 4.411 337.8 302.1)"/><use href="#pd" transform="matrix(2.976 0.379 -1.743 4.419 344.9 303.0)"/><use href="#pd" transform="matrix(2.976 0.379 -1.722 4.427 352.1 303.9)"/><use href="#pd" transform="matrix(2.976 0.379 -1.701 4.435 359.3 304.8)"/>
<use href="#pd" transform="matrix(2.975 0.386 -2.154 4.234 189.3 299.0)"/><use href="#pd" transform="matrix(2.975 0.386 -2.136 4.242 196.0 299.9)"/><use href="#pd" transform="matrix(2.975 0.386 -2.119 4.251 202.8 300.8)"/><use href="#pd" transform="matrix(2.975 0.386 -2.101 4.260 209.5 301.7)"/><use href="#pd" transform="matrix(2.975 0.386 -2.083 4.269 216.3 302.6)"/><use href="#pd" transform="matrix(2.975 0.386 -2.065 4.278 223.1 303.5)"/><use href="#pd" transform="matrix(2.975 0.386 -2.046 4.287 229.9 304.4)"/><use href="#pd" transform="matrix(2.975 0.386 -2.028 4.295 236.7 305.3)"/><use href="#pd" transform="matrix(2.975 0.386 -2.009 4.304 243.5 306.2)"/><use href="#pd" transform="matrix(2.975 0.386 -1.991 4.313 250.4 307.1)"/><use href="#pd" transform="matrix(2.975 0.386 -1.972 4.321 257.2 308.0)"/><use href="#pd" transform="matrix(2.975 0.386 -1.953 4.330 264.1 308.9)"/><use href="#pd" transform="matrix(2.975 0.386 -1.934 4.338 271.0 309.9)"/><use href="#pd" transform="matrix(2.975 0.386 -1.915 4.347 277.9 310.8)"/><use href="#pd" transform="matrix(2.975 0.386 -1.896 4.355 284.9 311.7)"/><use href="#pd" transform="matrix(2.975 0.386 -1.876 4.364 291.8 312.6)"/><use href="#pd" transform="matrix(2.975 0.386 -1.857 4.372 298.8 313.5)"/><use href="#pd" transform="matrix(2.975 0.386 -1.837 4.380 305.7 314.5)"/><use href="#pd" transform="matrix(2.975 0.386 -1.817 4.389 312.7 315.4)"/><use href="#pd" transform="matrix(2.975 0.386 -1.797 4.397 319.7 316.3)"/><use href="#pd" transform="matrix(2.975 0.386 -1.777 4.405 326.8 317.2)"/><use href="#pd" transform="matrix(2.975 0.386 -1.757 4.413 333.8 318.2)"/><use href="#pd" transform="matrix(2.975 0.386 -1.736 4.421 340.8 319.1)"/><use href="#pd" transform="matrix(2.975 0.386 -1.716 4.429 347.9 320.1)"/><use href="#pd" transform="matrix(2.975 0.386 -1.695 4.437 355.0 321.0)"/>
<use href="#pd" transform="matrix(2.981 0.338 -1.612 4.468 419.0 225.7)"/><use href="#pd" transform="matrix(2.981 0.338 -1.589 4.476 426.2 226.6)"/><use href="#pd" transform="matrix(2.981 0.338 -1.566 4.484 433.4 227.6)"/><use href="#pd" transform="matrix(2.981 0.338 -1.543 4.492 440.6 228.5)"/><use href="#pd" transform="matrix(2.981 0.339 -1.520 4.500 447.8 229.5)"/><use href="#pd" transform="matrix(2.981 0.339 -1.496 4.508 455.0 230.4)"/><use href="#pd" transform="matrix(2.981 0.339 -1.473 4.516 462.3 231.3)"/><use href="#pd" transform="matrix(2.981 0.339 -1.449 4.524 469.6 232.3)"/><use href="#pd" transform="matrix(2.981 0.339 -1.425 4.531 476.9 233.2)"/><use href="#pd" transform="matrix(2.981 0.339 -1.401 4.539 484.2 234.2)"/><use href="#pd" transform="matrix(2.981 0.339 -1.377 4.546 491.5 235.2)"/><use href="#pd" transform="matrix(2.981 0.339 -1.353 4.553 498.8 236.1)"/><use href="#pd" transform="matrix(2.981 0.339 -1.328 4.561 506.2 237.1)"/><use href="#pd" transform="matrix(2.981 0.339 -1.304 4.568 513.6 238.0)"/><use href="#pd" transform="matrix(2.981 0.339 -1.279 4.575 521.0 239.0)"/>
<use href="#pd" transform="matrix(2.981 0.339 -1.249 4.583 530.0 240.0)"/><use href="#pd" transform="matrix(2.981 0.339 -1.225 4.589 537.1 240.9)"/><use href="#pd" transform="matrix(2.981 0.339 -1.201 4.596 544.2 241.7)"/><use href="#pd" transform="matrix(2.981 0.339 -1.177 4.602 551.3 242.6)"/><use href="#pd" transform="matrix(2.981 0.339 -1.153 4.608 558.4 243.4)"/><use href="#pd" transform="matrix(2.981 0.339 -1.129 4.614 565.6 244.3)"/><use href="#pd" transform="matrix(2.981 0.339 -1.104 4.620 572.8 245.1)"/><use href="#pd" transform="matrix(2.981 0.339 -1.080 4.626 579.9 246.0)"/><use href="#pd" transform="matrix(2.981 0.339 -1.055 4.631 587.1 246.9)"/><use href="#pd" transform="matrix(2.981 0.339 -1.030 4.637 594.4 247.7)"/><use href="#pd" transform="matrix(2.981 0.339 -1.006 4.642 601.6 248.6)"/><use href="#pd" transform="matrix(2.981 0.339 -0.981 4.648 608.8 249.5)"/><use href="#pd" transform="matrix(2.981 0.339 -0.956 4.653 616.1 250.4)"/><use href="#pd" transform="matrix(2.981 0.339 -0.930 4.658 623.4 251.2)"/><use href="#pd" transform="matrix(2.981 0.339 -0.905 4.663 630.7 252.1)"/><use href="#pd" transform="matrix(2.981 0.339 -0.880 4.668 638.0 253.0)"/>
<use href="#pd" transform="matrix(2.978 0.359 -1.626 4.463 399.0 268.5)"/><use href="#pd" transform="matrix(2.978 0.359 -1.605 4.471 405.8 269.4)"/><use href="#pd" transform="matrix(2.978 0.359 -1.584 4.478 412.7 270.2)"/><use href="#pd" transform="matrix(2.978 0.359 -1.562 4.486 419.5 271.1)"/><use href="#pd" transform="matrix(2.978 0.359 -1.541 4.493 426.4 272.0)"/><use href="#pd" transform="matrix(2.978 0.359 -1.519 4.500 433.3 272.8)"/><use href="#pd" transform="matrix(2.978 0.359 -1.498 4.508 440.2 273.7)"/><use href="#pd" transform="matrix(2.978 0.359 -1.476 4.515 447.1 274.6)"/><use href="#pd" transform="matrix(2.978 0.359 -1.454 4.522 454.0 275.4)"/><use href="#pd" transform="matrix(2.978 0.359 -1.432 4.529 460.9 276.3)"/><use href="#pd" transform="matrix(2.978 0.359 -1.410 4.536 467.9 277.2)"/><use href="#pd" transform="matrix(2.978 0.360 -1.388 4.543 474.9 278.1)"/><use href="#pd" transform="matrix(2.978 0.360 -1.366 4.549 481.9 279.0)"/><use href="#pd" transform="matrix(2.978 0.360 -1.343 4.556 488.9 279.8)"/><use href="#pd" transform="matrix(2.978 0.360 -1.321 4.563 495.9 280.7)"/><use href="#pd" transform="matrix(2.978 0.360 -1.298 4.569 502.9 281.6)"/><use href="#pd" transform="matrix(2.978 0.360 -1.275 4.576 510.0 282.5)"/>
<use href="#pd" transform="matrix(2.978 0.359 -1.247 4.584 519.0 283.0)"/><use href="#pd" transform="matrix(2.978 0.359 -1.225 4.589 525.8 283.7)"/><use href="#pd" transform="matrix(2.978 0.359 -1.202 4.595 532.6 284.5)"/><use href="#pd" transform="matrix(2.978 0.359 -1.180 4.601 539.4 285.2)"/><use href="#pd" transform="matrix(2.978 0.359 -1.158 4.607 546.2 286.0)"/><use href="#pd" transform="matrix(2.978 0.359 -1.136 4.612 553.0 286.7)"/><use href="#pd" transform="matrix(2.978 0.359 -1.113 4.618 559.8 287.5)"/><use href="#pd" transform="matrix(2.978 0.359 -1.091 4.623 566.7 288.2)"/><use href="#pd" transform="matrix(2.978 0.359 -1.068 4.628 573.6 289.0)"/><use href="#pd" transform="matrix(2.978 0.359 -1.045 4.634 580.4 289.7)"/><use href="#pd" transform="matrix(2.978 0.359 -1.022 4.639 587.3 290.5)"/><use href="#pd" transform="matrix(2.978 0.359 -0.999 4.644 594.2 291.2)"/><use href="#pd" transform="matrix(2.978 0.359 -0.976 4.649 601.2 292.0)"/><use href="#pd" transform="matrix(2.978 0.359 -0.953 4.653 608.1 292.7)"/><use href="#pd" transform="matrix(2.978 0.359 -0.930 4.658 615.1 293.5)"/><use href="#pd" transform="matrix(2.978 0.359 -0.907 4.663 622.0 294.2)"/><use href="#pd" transform="matrix(2.978 0.359 -0.883 4.667 629.0 295.0)"/>
<use href="#pd" transform="matrix(2.978 0.364 -1.614 4.467 399.0 279.0)"/><use href="#pd" transform="matrix(2.978 0.364 -1.593 4.475 406.1 279.9)"/><use href="#pd" transform="matrix(2.978 0.364 -1.571 4.483 413.2 280.8)"/><use href="#pd" transform="matrix(2.978 0.364 -1.549 4.490 420.3 281.8)"/><use href="#pd" transform="matrix(2.978 0.364 -1.527 4.498 427.4 282.7)"/><use href="#pd" transform="matrix(2.978 0.364 -1.505 4.505 434.6 283.6)"/><use href="#pd" transform="matrix(2.978 0.364 -1.482 4.513 441.7 284.5)"/><use href="#pd" transform="matrix(2.978 0.364 -1.460 4.520 448.9 285.5)"/><use href="#pd" transform="matrix(2.978 0.364 -1.437 4.527 456.1 286.4)"/><use href="#pd" transform="matrix(2.978 0.364 -1.415 4.534 463.3 287.3)"/><use href="#pd" transform="matrix(2.978 0.364 -1.392 4.542 470.6 288.3)"/><use href="#pd" transform="matrix(2.978 0.364 -1.369 4.549 477.8 289.2)"/><use href="#pd" transform="matrix(2.978 0.365 -1.346 4.555 485.1 290.2)"/><use href="#pd" transform="matrix(2.978 0.365 -1.322 4.562 492.4 291.1)"/><use href="#pd" transform="matrix(2.978 0.365 -1.299 4.569 499.7 292.1)"/><use href="#pd" transform="matrix(2.978 0.365 -1.275 4.576 507.0 293.0)"/>
<use href="#pd" transform="matrix(2.978 0.365 -1.247 4.584 516.0 294.0)"/><use href="#pd" transform="matrix(2.978 0.365 -1.225 4.589 522.8 294.8)"/><use href="#pd" transform="matrix(2.978 0.365 -1.203 4.595 529.6 295.6)"/><use href="#pd" transform="matrix(2.978 0.364 -1.181 4.601 536.3 296.4)"/><use href="#pd" transform="matrix(2.978 0.364 -1.159 4.607 543.2 297.2)"/><use href="#pd" transform="matrix(2.978 0.364 -1.136 4.612 550.0 298.0)"/><use href="#pd" transform="matrix(2.978 0.364 -1.114 4.617 556.8 298.8)"/><use href="#pd" transform="matrix(2.978 0.364 -1.092 4.623 563.7 299.6)"/><use href="#pd" transform="matrix(2.978 0.364 -1.069 4.628 570.5 300.4)"/><use href="#pd" transform="matrix(2.978 0.364 -1.047 4.633 577.4 301.3)"/><use href="#pd" transform="matrix(2.978 0.364 -1.024 4.638 584.3 302.1)"/><use href="#pd" transform="matrix(2.978 0.364 -1.001 4.643 591.2 302.9)"/><use href="#pd" transform="matrix(2.978 0.364 -0.978 4.648 598.2 303.7)"/><use href="#pd" transform="matrix(2.978 0.364 -0.955 4.653 605.1 304.5)"/><use href="#pd" transform="matrix(2.978 0.364 -0.932 4.658 612.0 305.4)"/><use href="#pd" transform="matrix(2.978 0.364 -0.909 4.662 619.0 306.2)"/><use href="#pd" transform="matrix(2.978 0.364 -0.886 4.667 626.0 307.0)"/>
<use href="#pd" transform="matrix(2.975 0.386 -1.618 4.466 381.5 323.5)"/><use href="#pd" transform="matrix(2.975 0.386 -1.598 4.473 388.4 324.4)"/><use href="#pd" transform="matrix(2.975 0.386 -1.577 4.480 395.4 325.2)"/><use href="#pd" transform="matrix(2.975 0.386 -1.556 4.488 402.4 326.1)"/><use href="#pd" transform="matrix(2.975 0.386 -1.536 4.495 409.4 327.0)"/><use href="#pd" transform="matrix(2.975 0.386 -1.515 4.502 416.4 327.9)"/><use href="#pd" transform="matrix(2.975 0.386 -1.493 4.509 423.4 328.7)"/><use href="#pd" transform="matrix(2.975 0.386 -1.472 4.516 430.5 329.6)"/><use href="#pd" transform="matrix(2.975 0.386 -1.451 4.523 437.5 330.5)"/><use href="#pd" transform="matrix(2.975 0.386 -1.429 4.530 444.6 331.4)"/><use href="#pd" transform="matrix(2.975 0.386 -1.408 4.537 451.7 332.3)"/><use href="#pd" transform="matrix(2.975 0.386 -1.386 4.543 458.8 333.1)"/><use href="#pd" transform="matrix(2.975 0.386 -1.364 4.550 465.9 334.0)"/><use href="#pd" transform="matrix(2.975 0.386 -1.342 4.556 473.0 334.9)"/><use href="#pd" transform="matrix(2.975 0.386 -1.320 4.563 480.2 335.8)"/><use href="#pd" transform="matrix(2.975 0.386 -1.298 4.569 487.3 336.7)"/><use href="#pd" transform="matrix(2.975 0.386 -1.276 4.576 494.5 337.6)"/>
<use href="#pd" transform="matrix(2.975 0.386 -1.247 4.583 503.7 339.0)"/><use href="#pd" transform="matrix(2.975 0.386 -1.225 4.589 510.8 339.9)"/><use href="#pd" transform="matrix(2.975 0.386 -1.203 4.595 517.8 340.7)"/><use href="#pd" transform="matrix(2.975 0.386 -1.180 4.601 524.9 341.6)"/><use href="#pd" transform="matrix(2.975 0.386 -1.158 4.607 532.0 342.5)"/><use href="#pd" transform="matrix(2.975 0.386 -1.136 4.612 539.1 343.3)"/><use href="#pd" transform="matrix(2.975 0.386 -1.113 4.618 546.3 344.2)"/><use href="#pd" transform="matrix(2.975 0.386 -1.090 4.623 553.4 345.1)"/><use href="#pd" transform="matrix(2.975 0.386 -1.068 4.628 560.6 345.9)"/><use href="#pd" transform="matrix(2.975 0.386 -1.045 4.634 567.7 346.8)"/><use href="#pd" transform="matrix(2.975 0.386 -1.022 4.639 574.9 347.7)"/><use href="#pd" transform="matrix(2.975 0.386 -0.999 4.644 582.1 348.6)"/><use href="#pd" transform="matrix(2.975 0.385 -0.976 4.649 589.4 349.5)"/><use href="#pd" transform="matrix(2.975 0.385 -0.952 4.654 596.6 350.3)"/><use href="#pd" transform="matrix(2.975 0.385 -0.929 4.658 603.8 351.2)"/><use href="#pd" transform="matrix(2.975 0.385 -0.906 4.663 611.1 352.1)"/><use href="#pd" transform="matrix(2.975 0.385 -0.882 4.667 618.4 353.0)"/>
<use href="#pd" transform="matrix(2.985 0.302 -1.467 4.518 488.8 155.3)"/><use href="#pd" transform="matrix(2.985 0.302 -1.445 4.525 495.4 155.7)"/><use href="#pd" transform="matrix(2.985 0.302 -1.422 4.532 501.9 156.1)"/><use href="#pd" transform="matrix(2.985 0.302 -1.400 4.539 508.5 156.5)"/><use href="#pd" transform="matrix(2.985 0.302 -1.377 4.546 515.1 156.9)"/><use href="#pd" transform="matrix(2.985 0.302 -1.354 4.553 521.7 157.3)"/><use href="#pd" transform="matrix(2.985 0.301 -1.332 4.560 528.3 157.7)"/><use href="#pd" transform="matrix(2.985 0.301 -1.308 4.566 535.0 158.1)"/><use href="#pd" transform="matrix(2.985 0.301 -1.285 4.573 541.6 158.5)"/>
<use href="#pd" transform="matrix(2.984 0.306 -1.463 4.519 487.7 162.8)"/><use href="#pd" transform="matrix(2.984 0.306 -1.441 4.526 494.1 163.2)"/><use href="#pd" transform="matrix(2.984 0.305 -1.419 4.533 500.6 163.6)"/><use href="#pd" transform="matrix(2.984 0.305 -1.397 4.540 507.0 164.0)"/><use href="#pd" transform="matrix(2.984 0.305 -1.375 4.547 513.5 164.4)"/><use href="#pd" transform="matrix(2.984 0.305 -1.353 4.553 520.0 164.8)"/><use href="#pd" transform="matrix(2.984 0.305 -1.330 4.560 526.5 165.2)"/><use href="#pd" transform="matrix(2.984 0.305 -1.308 4.566 533.0 165.6)"/><use href="#pd" transform="matrix(2.984 0.305 -1.285 4.573 539.5 166.0)"/>
<use href="#pd" transform="matrix(2.985 0.299 -1.275 4.576 546.0 154.0)"/><use href="#pd" transform="matrix(2.985 0.299 -1.252 4.582 552.4 154.6)"/><use href="#pd" transform="matrix(2.985 0.299 -1.229 4.588 558.9 155.1)"/><use href="#pd" transform="matrix(2.985 0.299 -1.206 4.594 565.3 155.7)"/><use href="#pd" transform="matrix(2.985 0.299 -1.183 4.600 571.8 156.2)"/><use href="#pd" transform="matrix(2.985 0.299 -1.159 4.606 578.3 156.8)"/><use href="#pd" transform="matrix(2.985 0.299 -1.136 4.612 584.8 157.4)"/><use href="#pd" transform="matrix(2.985 0.299 -1.112 4.618 591.3 157.9)"/><use href="#pd" transform="matrix(2.985 0.299 -1.089 4.624 597.8 158.5)"/>
<use href="#pd" transform="matrix(2.985 0.304 -1.267 4.578 545.0 165.0)"/><use href="#pd" transform="matrix(2.985 0.304 -1.245 4.584 551.3 165.4)"/><use href="#pd" transform="matrix(2.985 0.304 -1.223 4.590 557.6 165.8)"/><use href="#pd" transform="matrix(2.985 0.304 -1.201 4.596 563.9 166.2)"/><use href="#pd" transform="matrix(2.985 0.304 -1.179 4.601 570.2 166.6)"/><use href="#pd" transform="matrix(2.985 0.304 -1.156 4.607 576.6 167.0)"/><use href="#pd" transform="matrix(2.985 0.303 -1.134 4.613 582.9 167.4)"/><use href="#pd" transform="matrix(2.985 0.303 -1.111 4.618 589.2 167.8)"/><use href="#pd" transform="matrix(2.985 0.303 -1.089 4.624 595.6 168.2)"/>
<use href="#pd" transform="matrix(2.984 0.314 -1.440 4.527 488.8 181.0)"/><use href="#pd" transform="matrix(2.984 0.314 -1.417 4.534 495.8 181.4)"/><use href="#pd" transform="matrix(2.984 0.314 -1.393 4.541 502.8 181.8)"/><use href="#pd" transform="matrix(2.984 0.314 -1.369 4.548 509.8 182.1)"/><use href="#pd" transform="matrix(2.984 0.313 -1.346 4.555 516.8 182.5)"/><use href="#pd" transform="matrix(2.984 0.313 -1.322 4.562 523.9 182.9)"/><use href="#pd" transform="matrix(2.984 0.313 -1.298 4.569 530.9 183.3)"/>
<use href="#pd" transform="matrix(2.983 0.318 -1.427 4.531 489.9 189.8)"/><use href="#pd" transform="matrix(2.983 0.318 -1.402 4.538 497.4 190.6)"/><use href="#pd" transform="matrix(2.983 0.318 -1.376 4.546 504.9 191.4)"/><use href="#pd" transform="matrix(2.983 0.318 -1.351 4.554 512.4 192.2)"/><use href="#pd" transform="matrix(2.983 0.318 -1.325 4.561 520.0 193.0)"/>
<use href="#pd" transform="matrix(2.984 0.314 -1.267 4.578 539.5 185.5)"/><use href="#pd" transform="matrix(2.984 0.314 -1.243 4.585 546.5 186.1)"/><use href="#pd" transform="matrix(2.984 0.314 -1.218 4.591 553.6 186.7)"/><use href="#pd" transform="matrix(2.984 0.314 -1.193 4.598 560.6 187.3)"/><use href="#pd" transform="matrix(2.984 0.313 -1.169 4.604 567.7 187.9)"/><use href="#pd" transform="matrix(2.984 0.313 -1.144 4.610 574.8 188.6)"/><use href="#pd" transform="matrix(2.984 0.313 -1.119 4.616 581.9 189.2)"/><use href="#pd" transform="matrix(2.984 0.313 -1.094 4.622 589.0 189.8)"/>
<use href="#pd" transform="matrix(2.983 0.318 -1.213 4.592 552.4 196.3)"/><use href="#pd" transform="matrix(2.983 0.318 -1.187 4.599 559.9 197.1)"/><use href="#pd" transform="matrix(2.983 0.318 -1.161 4.606 567.5 197.9)"/><use href="#pd" transform="matrix(2.983 0.318 -1.134 4.613 575.1 198.7)"/><use href="#pd" transform="matrix(2.983 0.318 -1.108 4.619 582.7 199.5)"/>
<use href="#pd" transform="matrix(2.982 0.333 -1.432 4.529 479.0 220.0)"/><use href="#pd" transform="matrix(2.982 0.333 -1.409 4.536 485.9 220.9)"/><use href="#pd" transform="matrix(2.982 0.333 -1.386 4.543 492.8 221.7)"/><use href="#pd" transform="matrix(2.981 0.333 -1.363 4.550 499.7 222.6)"/><use href="#pd" transform="matrix(2.981 0.333 -1.340 4.557 506.6 223.4)"/><use href="#pd" transform="matrix(2.981 0.333 -1.316 4.564 513.6 224.3)"/>
<use href="#pd" transform="matrix(2.987 0.281 -1.399 4.539 522.6 112.0)"/><use href="#pd" transform="matrix(2.987 0.281 -1.375 4.547 529.1 112.9)"/><use href="#pd" transform="matrix(2.987 0.281 -1.351 4.554 535.5 113.7)"/><use href="#pd" transform="matrix(2.987 0.281 -1.328 4.561 542.0 114.6)"/><use href="#pd" transform="matrix(2.987 0.281 -1.304 4.568 548.5 115.5)"/><use href="#pd" transform="matrix(2.987 0.281 -1.280 4.574 555.0 116.4)"/><use href="#pd" transform="matrix(2.987 0.281 -1.255 4.581 561.6 117.2)"/><use href="#pd" transform="matrix(2.987 0.282 -1.231 4.588 568.1 118.1)"/><use href="#pd" transform="matrix(2.987 0.282 -1.207 4.594 574.7 119.0)"/>
<use href="#pd" transform="matrix(2.986 0.288 -1.438 4.527 506.4 127.0)"/><use href="#pd" transform="matrix(2.986 0.289 -1.415 4.534 513.0 128.1)"/><use href="#pd" transform="matrix(2.986 0.289 -1.391 4.542 519.5 129.2)"/><use href="#pd" transform="matrix(2.986 0.289 -1.367 4.549 526.1 130.2)"/><use href="#pd" transform="matrix(2.986 0.289 -1.343 4.556 532.7 131.3)"/><use href="#pd" transform="matrix(2.986 0.289 -1.319 4.563 539.4 132.4)"/><use href="#pd" transform="matrix(2.986 0.290 -1.295 4.570 546.0 133.5)"/>
<use href="#pd" transform="matrix(2.986 0.288 -1.272 4.577 553.0 131.7)"/><use href="#pd" transform="matrix(2.986 0.289 -1.249 4.583 559.3 132.6)"/><use href="#pd" transform="matrix(2.986 0.289 -1.226 4.589 565.5 133.5)"/><use href="#pd" transform="matrix(2.986 0.289 -1.203 4.595 571.8 134.4)"/><use href="#pd" transform="matrix(2.986 0.289 -1.179 4.601 578.1 135.3)"/><use href="#pd" transform="matrix(2.986 0.289 -1.156 4.607 584.4 136.2)"/><use href="#pd" transform="matrix(2.986 0.289 -1.132 4.613 590.8 137.2)"/><use href="#pd" transform="matrix(2.986 0.289 -1.109 4.619 597.1 138.1)"/><use href="#pd" transform="matrix(2.986 0.290 -1.085 4.624 603.5 139.0)"/>
<use href="#rp" transform="matrix(2.289 0.222 -1.490 2.888 278.4 107.0)"/><use href="#rp" transform="matrix(2.289 0.222 -1.481 2.893 283.1 107.4)"/><use href="#rp" transform="matrix(2.289 0.222 -1.471 2.898 287.9 107.8)"/><use href="#rp" transform="matrix(2.289 0.222 -1.462 2.903 292.6 108.2)"/><use href="#rp" transform="matrix(2.289 0.222 -1.452 2.908 297.4 108.6)"/><use href="#rp" transform="matrix(2.289 0.222 -1.442 2.913 302.2 109.1)"/><use href="#rp" transform="matrix(2.289 0.222 -1.432 2.917 306.9 109.5)"/><use href="#rp" transform="matrix(2.289 0.222 -1.422 2.922 311.7 109.9)"/><use href="#rp" transform="matrix(2.289 0.222 -1.412 2.927 316.5 110.3)"/>
<use href="#rp" transform="matrix(2.289 0.228 -1.491 2.888 269.5 123.2)"/><use href="#rp" transform="matrix(2.289 0.228 -1.482 2.893 274.4 123.6)"/><use href="#rp" transform="matrix(2.289 0.228 -1.472 2.898 279.4 124.0)"/><use href="#rp" transform="matrix(2.289 0.228 -1.462 2.903 284.3 124.4)"/><use href="#rp" transform="matrix(2.289 0.228 -1.452 2.908 289.3 124.8)"/><use href="#rp" transform="matrix(2.289 0.228 -1.442 2.913 294.3 125.3)"/><use href="#rp" transform="matrix(2.289 0.228 -1.432 2.918 299.2 125.7)"/><use href="#rp" transform="matrix(2.289 0.228 -1.421 2.923 304.2 126.1)"/><use href="#rp" transform="matrix(2.289 0.228 -1.411 2.928 309.2 126.5)"/>
<use href="#rp" transform="matrix(2.288 0.232 -1.491 2.888 264.7 133.0)"/><use href="#rp" transform="matrix(2.288 0.232 -1.481 2.893 269.7 133.4)"/><use href="#rp" transform="matrix(2.288 0.232 -1.471 2.898 274.7 133.7)"/><use href="#rp" transform="matrix(2.288 0.232 -1.461 2.903 279.8 134.1)"/><use href="#rp" transform="matrix(2.288 0.232 -1.451 2.908 284.8 134.5)"/><use href="#rp" transform="matrix(2.288 0.232 -1.441 2.913 289.8 134.9)"/><use href="#rp" transform="matrix(2.288 0.232 -1.431 2.918 294.9 135.2)"/><use href="#rp" transform="matrix(2.288 0.232 -1.421 2.923 299.9 135.6)"/><use href="#rp" transform="matrix(2.288 0.231 -1.411 2.928 305.0 136.0)"/>
<use href="#rp" transform="matrix(2.288 0.238 -1.491 2.888 255.8 150.0)"/><use href="#rp" transform="matrix(2.288 0.238 -1.481 2.893 260.8 150.4)"/><use href="#rp" transform="matrix(2.288 0.238 -1.472 2.898 265.9 150.8)"/><use href="#rp" transform="matrix(2.288 0.238 -1.462 2.903 270.9 151.2)"/><use href="#rp" transform="matrix(2.288 0.238 -1.452 2.908 275.9 151.6)"/><use href="#rp" transform="matrix(2.288 0.238 -1.442 2.913 281.0 152.0)"/><use href="#rp" transform="matrix(2.288 0.238 -1.432 2.918 286.1 152.4)"/><use href="#rp" transform="matrix(2.288 0.238 -1.422 2.923 291.1 152.8)"/><use href="#rp" transform="matrix(2.288 0.238 -1.412 2.927 296.2 153.2)"/>
<use href="#rp" transform="matrix(2.287 0.242 -1.491 2.888 251.0 159.6)"/><use href="#rp" transform="matrix(2.287 0.242 -1.481 2.893 256.0 160.1)"/><use href="#rp" transform="matrix(2.287 0.242 -1.471 2.898 261.1 160.6)"/><use href="#rp" transform="matrix(2.287 0.242 -1.461 2.903 266.1 161.1)"/><use href="#rp" transform="matrix(2.287 0.242 -1.451 2.908 271.1 161.6)"/><use href="#rp" transform="matrix(2.287 0.242 -1.441 2.913 276.2 162.2)"/><use href="#rp" transform="matrix(2.287 0.242 -1.431 2.918 281.3 162.7)"/><use href="#rp" transform="matrix(2.287 0.242 -1.421 2.923 286.3 163.2)"/><use href="#rp" transform="matrix(2.287 0.242 -1.411 2.928 291.4 163.7)"/>
<use href="#rp" transform="matrix(2.286 0.250 -1.486 2.890 243.7 179.0)"/><use href="#rp" transform="matrix(2.286 0.249 -1.476 2.895 248.7 179.4)"/><use href="#rp" transform="matrix(2.286 0.249 -1.467 2.900 253.7 179.8)"/><use href="#rp" transform="matrix(2.286 0.249 -1.457 2.905 258.8 180.2)"/><use href="#rp" transform="matrix(2.286 0.249 -1.447 2.910 263.8 180.6)"/><use href="#rp" transform="matrix(2.286 0.249 -1.438 2.915 268.8 181.1)"/><use href="#rp" transform="matrix(2.286 0.249 -1.428 2.920 273.9 181.5)"/><use href="#rp" transform="matrix(2.286 0.249 -1.418 2.924 278.9 181.9)"/><use href="#rp" transform="matrix(2.286 0.249 -1.408 2.929 284.0 182.3)"/>
<use href="#rp" transform="matrix(2.286 0.253 -1.489 2.889 238.0 187.0)"/><use href="#rp" transform="matrix(2.286 0.253 -1.479 2.894 243.3 187.4)"/><use href="#rp" transform="matrix(2.286 0.253 -1.469 2.899 248.7 187.8)"/><use href="#rp" transform="matrix(2.286 0.253 -1.458 2.904 254.1 188.3)"/><use href="#rp" transform="matrix(2.286 0.252 -1.448 2.910 259.4 188.7)"/><use href="#rp" transform="matrix(2.286 0.252 -1.438 2.915 264.8 189.1)"/><use href="#rp" transform="matrix(2.286 0.252 -1.427 2.920 270.2 189.5)"/><use href="#rp" transform="matrix(2.286 0.252 -1.417 2.925 275.6 190.0)"/><use href="#rp" transform="matrix(2.286 0.252 -1.406 2.930 281.0 190.4)"/>
<use href="#rp" transform="matrix(2.285 0.260 -1.494 2.886 225.8 205.0)"/><use href="#rp" transform="matrix(2.285 0.260 -1.484 2.891 231.2 205.4)"/><use href="#rp" transform="matrix(2.285 0.260 -1.474 2.896 236.5 205.9)"/><use href="#rp" transform="matrix(2.285 0.260 -1.464 2.902 241.9 206.3)"/><use href="#rp" transform="matrix(2.285 0.260 -1.454 2.907 247.3 206.8)"/><use href="#rp" transform="matrix(2.285 0.260 -1.444 2.912 252.7 207.2)"/><use href="#rp" transform="matrix(2.285 0.259 -1.433 2.917 258.1 207.7)"/><use href="#rp" transform="matrix(2.285 0.259 -1.423 2.922 263.5 208.1)"/><use href="#rp" transform="matrix(2.285 0.259 -1.413 2.927 268.9 208.6)"/><use href="#rp" transform="matrix(2.285 0.259 -1.402 2.932 274.3 209.0)"/>
<use href="#ov" transform="matrix(4.229 0.422 -0.642 2.931 618.0 159.0)"/><use href="#ov" transform="matrix(4.228 0.428 -0.641 2.931 616.1 168.5)"/><use href="#ov" transform="matrix(4.228 0.435 -0.641 2.931 614.2 178.2)"/><use href="#ov" transform="matrix(4.227 0.441 -0.641 2.931 612.2 188.1)"/><use href="#ov" transform="matrix(4.226 0.448 -0.640 2.931 610.2 198.0)"/><use href="#ov" transform="matrix(4.226 0.454 -0.640 2.931 608.2 208.2)"/><use href="#ov" transform="matrix(4.225 0.461 -0.639 2.931 606.1 218.5)"/><use href="#ov" transform="matrix(4.224 0.468 -0.639 2.931 604.0 229.0)"/>
<use href="#ov" transform="matrix(4.229 0.421 -0.608 2.938 633.0 159.0)"/><use href="#ov" transform="matrix(4.228 0.427 -0.608 2.938 631.0 168.5)"/><use href="#ov" transform="matrix(4.228 0.434 -0.608 2.938 628.9 178.2)"/><use href="#ov" transform="matrix(4.227 0.440 -0.608 2.938 626.8 188.1)"/><use href="#ov" transform="matrix(4.226 0.447 -0.608 2.938 624.6 198.1)"/><use href="#ov" transform="matrix(4.226 0.453 -0.609 2.938 622.5 208.2)"/><use href="#ov" transform="matrix(4.225 0.460 -0.609 2.938 620.2 218.5)"/><use href="#ov" transform="matrix(4.224 0.467 -0.609 2.938 618.0 229.0)"/>
<polygon points="616.0,146.5 624.0,147.0 623.5,152.5 615.5,152.0" fill="#c9814a"/>
<polygon points="630.5,147.5 638.5,148.0 638.0,153.5 630.0,153.0" fill="#c9814a"/>
<use href="#ov" transform="matrix(4.478 0.440 -1.493 2.830 261.5 113.5)"/>
<use href="#ov" transform="matrix(4.477 0.451 -1.494 2.830 253.4 128.0)"/>
<use href="#ov" transform="matrix(4.476 0.468 -1.496 2.829 240.4 150.0)"/>
<use href="#ov" transform="matrix(4.475 0.474 -1.495 2.829 237.0 158.0)"/>
<use href="#ov" transform="matrix(4.474 0.486 -1.497 2.828 227.5 174.0)"/>
<use href="#ov" transform="matrix(4.473 0.492 -1.496 2.829 223.4 182.0)"/>
<use href="#ov" transform="matrix(4.482 0.400 -0.625 3.138 655.7 93.0)"/>
<use href="#ov" transform="matrix(4.480 0.426 -0.633 3.137 645.0 130.0)"/>
<use href="#ov" transform="matrix(5.753 0.739 -1.956 3.717 171.0 288.0)"/>
<use href="#ov" transform="matrix(5.753 0.739 -1.919 3.736 187.0 290.5)"/>
<polygon points="283.0,50.5 294.9,51.6 293.7,53.8 281.8,52.7" fill="#4f7068"/>
<polygon points="276.1,63.4 288.1,64.5 287.0,66.6 275.0,65.5" fill="#3f6e52"/>
<polygon points="281.8,52.7 286.6,53.2 280.9,63.8 276.1,63.4" fill="#c47a42"/>
<polygon points="286.6,53.2 293.4,53.8 287.8,64.4 280.9,63.8" fill="#dddde6"/>
<polygon points="293.4,53.8 293.7,53.8 288.1,64.5 287.8,64.4" fill="#c47a42"/>
<polygon points="315.9,53.4 327.7,54.5 326.6,56.7 314.7,55.7" fill="#4f7068"/>
<polygon points="309.2,66.5 321.3,67.5 320.2,69.7 308.2,68.6" fill="#3f6e52"/>
<polygon points="314.7,55.7 319.5,56.1 314.0,66.9 309.2,66.5" fill="#c47a42"/>
<polygon points="319.5,56.1 326.3,56.7 320.9,67.5 314.0,66.9" fill="#dddde6"/>
<polygon points="326.3,56.7 326.6,56.7 321.3,67.5 320.9,67.5" fill="#c47a42"/>
<polygon points="343.4,58.4 355.3,59.4 354.2,61.7 342.3,60.6" fill="#4f7068"/>
<polygon points="337.1,71.5 349.1,72.6 348.0,74.8 336.0,73.7" fill="#3f6e52"/>
<polygon points="342.3,60.6 347.1,61.0 341.9,71.9 337.1,71.5" fill="#c47a42"/>
<polygon points="347.1,61.0 353.9,61.7 348.8,72.6 341.9,71.9" fill="#dddde6"/>
<polygon points="353.9,61.7 354.2,61.7 349.1,72.6 348.8,72.6" fill="#c47a42"/>
<polygon points="266.8,82.0 278.7,83.1 277.5,85.3 265.6,84.2" fill="#4f7068"/>
<polygon points="259.9,94.9 271.9,96.0 270.8,98.1 258.8,97.0" fill="#3f6e52"/>
<polygon points="265.6,84.2 270.4,84.7 264.7,95.3 259.9,94.9" fill="#c47a42"/>
<polygon points="270.4,84.7 277.2,85.3 271.6,96.0 264.7,95.3" fill="#dddde6"/>
<polygon points="277.2,85.3 277.5,85.3 271.9,96.0 271.6,96.0" fill="#c47a42"/>
<polygon points="302.2,83.4 314.1,84.5 313.0,86.8 301.1,85.7" fill="#4f7068"/>
<polygon points="295.7,96.4 307.7,97.6 306.6,99.7 294.6,98.6" fill="#3f6e52"/>
<polygon points="301.1,85.7 305.9,86.1 300.4,96.9 295.7,96.4" fill="#c47a42"/>
<polygon points="305.9,86.1 312.7,86.7 307.4,97.5 300.4,96.9" fill="#dddde6"/>
<polygon points="312.7,86.7 313.0,86.8 307.7,97.6 307.4,97.5" fill="#c47a42"/>
<polygon points="332.0,82.5 343.9,83.6 342.8,85.9 330.9,84.8" fill="#4f7068"/>
<polygon points="325.7,95.7 337.7,96.8 336.6,99.0 324.6,97.9" fill="#3f6e52"/>
<polygon points="330.9,84.8 335.7,85.2 330.5,96.1 325.7,95.7" fill="#c47a42"/>
<polygon points="335.7,85.2 342.5,85.9 337.4,96.8 330.5,96.1" fill="#dddde6"/>
<polygon points="342.5,85.9 342.8,85.9 337.7,96.8 337.4,96.8" fill="#c47a42"/>
<polygon points="607.0,95.8 661.0,101.0 659.0,121.8 603.5,117.4" fill="#c9803f"/>
<path d="M607 102.5 L660 107.5 M606 109 L659.5 114" stroke="#d8a878" stroke-width="0.8"/>
<ellipse cx="655.7" cy="101" rx="4.2" ry="3.2" fill="#1f3a2a"/>
<ellipse cx="654.8" cy="110" rx="4.2" ry="3.2" fill="#e8e8ea"/>
<ellipse cx="653.9" cy="120" rx="4.2" ry="3.2" fill="#e0e0e4"/>
<ellipse cx="652.5" cy="129" rx="4.2" ry="3.2" fill="#dcdce0"/>
<ellipse cx="647.6" cy="140" rx="4.2" ry="3.2" fill="#1f4a2a"/>
<ellipse cx="674.6" cy="79.6" rx="3.5" ry="2" fill="#8fb0c8"/>
<text transform="translate(383.7 53.4) rotate(5.0)" font-size="9.1" text-anchor="middle" dominant-baseline="central" fill="#ffffff" stroke="#ffffff" stroke-width="0.25" font-family="Liberation Sans">C26</text>
<text transform="translate(381.0 59.0) rotate(5.0)" font-size="9.1" text-anchor="middle" dominant-baseline="central" fill="#ffffff" stroke="#ffffff" stroke-width="0.25" font-family="Liberation Sans">C11</text>
<text transform="translate(377.0 70.4) rotate(5.1)" font-size="9.2" text-anchor="middle" dominant-baseline="central" fill="#ffffff" stroke="#ffffff" stroke-width="0.25" font-family="Liberation Sans">C10</text>
<text transform="translate(374.0 77.6) rotate(5.2)" font-size="9.3" text-anchor="middle" dominant-baseline="central" fill="#ffffff" stroke="#ffffff" stroke-width="0.25" font-family="Liberation Sans">R11</text>
<text transform="translate(367.5 86.5) rotate(5.3)" font-size="9.3" text-anchor="middle" dominant-baseline="central" fill="#ffffff" stroke="#ffffff" stroke-width="0.25" font-family="Liberation Sans">C4</text>
<text transform="translate(364.0 95.4) rotate(5.4)" font-size="9.4" text-anchor="middle" dominant-baseline="central" fill="#ffffff" stroke="#ffffff" stroke-width="0.25" font-family="Liberation Sans">R13</text>
<text transform="translate(292.0 93.8) rotate(5.4)" font-size="9.2" text-anchor="middle" dominant-baseline="central" fill="#ffffff" stroke="#ffffff" stroke-width="0.25" font-family="Liberation Sans">C27</text>
<text transform="translate(316.5 100.3) rotate(5.4)" font-size="9.3" text-anchor="middle" dominant-baseline="central" fill="#ffffff" stroke="#ffffff" stroke-width="0.25" font-family="Liberation Sans">R8</text>
<text transform="translate(294.7 122.0) rotate(5.7)" font-size="9.5" text-anchor="middle" dominant-baseline="central" fill="#ffffff" stroke="#ffffff" stroke-width="0.25" font-family="Liberation Sans">C97</text>
<text transform="translate(248.0 137.0) rotate(5.8)" font-size="9.5" text-anchor="middle" dominant-baseline="central" fill="#ffffff" stroke="#ffffff" stroke-width="0.25" font-family="Liberation Sans">R15</text>
<text transform="translate(235.0 154.0) rotate(6.0)" font-size="9.6" text-anchor="middle" dominant-baseline="central" fill="#ffffff" stroke="#ffffff" stroke-width="0.25" font-family="Liberation Sans">C28</text>
<text transform="translate(232.0 164.0) rotate(6.1)" font-size="9.7" text-anchor="middle" dominant-baseline="central" fill="#ffffff" stroke="#ffffff" stroke-width="0.25" font-family="Liberation Sans">R16</text>
<text transform="translate(248.0 175.0) rotate(6.2)" font-size="9.8" text-anchor="middle" dominant-baseline="central" fill="#ffffff" stroke="#ffffff" stroke-width="0.25" font-family="Liberation Sans">C29</text>
<text transform="translate(308.0 190.0) rotate(6.3)" font-size="10.1" text-anchor="middle" dominant-baseline="central" fill="#ffffff" stroke="#ffffff" stroke-width="0.25" font-family="Liberation Sans">U100</text>
<text transform="translate(302.4 203.8) rotate(6.4)" font-size="10.2" text-anchor="middle" dominant-baseline="central" fill="#ffffff" stroke="#ffffff" stroke-width="0.25" font-family="Liberation Sans">U8</text>
<text transform="translate(361.0 203.0) rotate(6.3)" font-size="10.3" text-anchor="middle" dominant-baseline="central" fill="#ffffff" stroke="#ffffff" stroke-width="0.25" font-family="Liberation Sans">C99</text>
<text transform="translate(328.3 220.5) rotate(6.5)" font-size="10.4" text-anchor="middle" dominant-baseline="central" fill="#ffffff" stroke="#ffffff" stroke-width="0.25" font-family="Liberation Sans">U6</text>
<text transform="translate(279.7 222.0) rotate(6.6)" font-size="10.3" text-anchor="middle" dominant-baseline="central" fill="#ffffff" stroke="#ffffff" stroke-width="0.25" font-family="Liberation Sans">C30</text>
<text transform="translate(341.0 230.8) rotate(6.6)" font-size="10.5" text-anchor="middle" dominant-baseline="central" fill="#ffffff" stroke="#ffffff" stroke-width="0.25" font-family="Liberation Sans">C95</text>
<text transform="translate(382.7 225.7) rotate(6.5)" font-size="10.5" text-anchor="middle" dominant-baseline="central" fill="#ffffff" stroke="#ffffff" stroke-width="0.25" font-family="Liberation Sans">U5</text>
<text transform="translate(396.6 228.3) rotate(6.5)" font-size="10.6" text-anchor="middle" dominant-baseline="central" fill="#ffffff" stroke="#ffffff" stroke-width="0.25" font-family="Liberation Sans">C96</text>
<text transform="translate(410.4 225.7) rotate(6.5)" font-size="10.6" text-anchor="middle" dominant-baseline="central" fill="#ffffff" stroke="#ffffff" stroke-width="0.25" font-family="Liberation Sans">U4</text>
<text transform="translate(418.0 234.6) rotate(6.6)" font-size="10.7" text-anchor="middle" dominant-baseline="central" fill="#ffffff" stroke="#ffffff" stroke-width="0.25" font-family="Liberation Sans">C13</text>
<text transform="translate(236.5 252.4) rotate(6.9)" font-size="10.4" text-anchor="middle" dominant-baseline="central" fill="#ffffff" stroke="#ffffff" stroke-width="0.25" font-family="Liberation Sans">C93</text>
<text transform="translate(253.8 275.0) rotate(7.1)" font-size="10.6" text-anchor="middle" dominant-baseline="central" fill="#ffffff" stroke="#ffffff" stroke-width="0.25" font-family="Liberation Sans">R29</text>
<text transform="translate(280.8 271.8) rotate(7.0)" font-size="10.7" text-anchor="middle" dominant-baseline="central" fill="#ffffff" stroke="#ffffff" stroke-width="0.25" font-family="Liberation Sans">R2</text>
<text transform="translate(296.0 269.6) rotate(7.0)" font-size="10.7" text-anchor="middle" dominant-baseline="central" fill="#ffffff" stroke="#ffffff" stroke-width="0.25" font-family="Liberation Sans">R6</text>
<text transform="translate(294.8 280.4) rotate(7.1)" font-size="10.8" text-anchor="middle" dominant-baseline="central" fill="#ffffff" stroke="#ffffff" stroke-width="0.25" font-family="Liberation Sans">R5</text>
<text transform="translate(275.4 285.8) rotate(7.2)" font-size="10.8" text-anchor="middle" dominant-baseline="central" fill="#ffffff" stroke="#ffffff" stroke-width="0.25" font-family="Liberation Sans">R3</text>
<text transform="translate(286.0 292.3) rotate(7.2)" font-size="10.9" text-anchor="middle" dominant-baseline="central" fill="#ffffff" stroke="#ffffff" stroke-width="0.25" font-family="Liberation Sans">R1</text>
<text transform="translate(274.3 298.8) rotate(7.3)" font-size="10.9" text-anchor="middle" dominant-baseline="central" fill="#ffffff" stroke="#ffffff" stroke-width="0.25" font-family="Liberation Sans">R7</text>
<text transform="translate(238.7 301.0) rotate(7.4)" font-size="10.8" text-anchor="middle" dominant-baseline="central" fill="#ffffff" stroke="#ffffff" stroke-width="0.25" font-family="Liberation Sans">R4</text>
<text transform="translate(348.7 302.6) rotate(7.2)" font-size="11.1" text-anchor="middle" dominant-baseline="central" fill="#ffffff" stroke="#ffffff" stroke-width="0.25" font-family="Liberation Sans">C1</text>
<text transform="translate(408.0 264.8) rotate(6.8)" font-size="10.9" text-anchor="middle" dominant-baseline="central" fill="#ffffff" stroke="#ffffff" stroke-width="0.25" font-family="Liberation Sans">C12</text>
<text transform="translate(556.6 293.5) rotate(6.9)" font-size="11.5" text-anchor="middle" dominant-baseline="central" fill="#ffffff" stroke="#ffffff" stroke-width="0.25" font-family="Liberation Sans">C3</text>
<text transform="translate(636.6 239.4) rotate(6.4)" font-size="11.3" text-anchor="middle" dominant-baseline="central" fill="#ffffff" stroke="#ffffff" stroke-width="0.25" font-family="Liberation Sans">U2</text>
<text transform="translate(559.0 229.7) rotate(6.4)" font-size="11.0" text-anchor="middle" dominant-baseline="central" fill="#ffffff" stroke="#ffffff" stroke-width="0.25" font-family="Liberation Sans">C16</text>
<text transform="translate(552.4 201.7) rotate(6.1)" font-size="10.7" text-anchor="middle" dominant-baseline="central" fill="#ffffff" stroke="#ffffff" stroke-width="0.25" font-family="Liberation Sans">C15</text>
<text transform="translate(479.0 184.4) rotate(6.0)" font-size="10.4" text-anchor="middle" dominant-baseline="central" fill="#ffffff" stroke="#ffffff" stroke-width="0.25" font-family="Liberation Sans">C7</text>
<text transform="translate(484.5 174.7) rotate(6.0)" font-size="10.3" text-anchor="middle" dominant-baseline="central" fill="#ffffff" stroke="#ffffff" stroke-width="0.25" font-family="Liberation Sans">R9</text>
<text transform="translate(485.5 165.0) rotate(5.9)" font-size="10.3" text-anchor="middle" dominant-baseline="central" fill="#ffffff" stroke="#ffffff" stroke-width="0.25" font-family="Liberation Sans">C5</text>
<text transform="translate(502.8 146.6) rotate(5.7)" font-size="10.1" text-anchor="middle" dominant-baseline="central" fill="#ffffff" stroke="#ffffff" stroke-width="0.25" font-family="Liberation Sans">C22</text>
<text transform="translate(533.0 157.4) rotate(5.8)" font-size="10.3" text-anchor="middle" dominant-baseline="central" fill="#ffffff" stroke="#ffffff" stroke-width="0.25" font-family="Liberation Sans">C8</text>
<text transform="translate(502.0 132.0) rotate(5.6)" font-size="10.0" text-anchor="middle" dominant-baseline="central" fill="#ffffff" stroke="#ffffff" stroke-width="0.25" font-family="Liberation Sans">C2</text>
<text transform="translate(576.0 140.0) rotate(5.6)" font-size="10.2" text-anchor="middle" dominant-baseline="central" fill="#ffffff" stroke="#ffffff" stroke-width="0.25" font-family="Liberation Sans">C14</text>
<text transform="translate(451.0 106.0) rotate(5.4)" font-size="9.7" text-anchor="middle" dominant-baseline="central" fill="#ffffff" stroke="#ffffff" stroke-width="0.25" font-family="Liberation Sans">C6</text>
<text transform="translate(462.5 113.0) rotate(5.4)" font-size="9.8" text-anchor="middle" dominant-baseline="central" fill="#ffffff" stroke="#ffffff" stroke-width="0.25" font-family="Liberation Sans">C98</text>
<text transform="translate(501.0 105.0) rotate(5.3)" font-size="9.8" text-anchor="middle" dominant-baseline="central" fill="#ffffff" stroke="#ffffff" stroke-width="0.25" font-family="Liberation Sans">R10</text>
<text transform="translate(468.0 75.0) rotate(5.1)" font-size="9.4" text-anchor="middle" dominant-baseline="central" fill="#ffffff" stroke="#ffffff" stroke-width="0.25" font-family="Liberation Sans">C23</text>
<text transform="translate(580.0 76.0) rotate(5.0)" font-size="9.7" text-anchor="middle" dominant-baseline="central" fill="#ffffff" stroke="#ffffff" stroke-width="0.25" font-family="Liberation Sans">C9</text>
<text transform="translate(271.0 197.3) rotate(6.4)" font-size="10.0" text-anchor="middle" dominant-baseline="central" fill="#ffffff" stroke="#ffffff" stroke-width="0.25" font-family="Liberation Sans">R14</text>
<text transform="translate(497.6 64.0) rotate(5.0)" font-size="5.5" text-anchor="middle" dominant-baseline="central" fill="#ffffff" stroke="#ffffff" stroke-width="0.12" font-family="Liberation Sans">U34</text>
<text transform="translate(220.4 213.5) rotate(6.6)" font-size="5.5" text-anchor="middle" dominant-baseline="central" fill="#ffffff" stroke="#ffffff" stroke-width="0.12" font-family="Liberation Sans">U7</text>
<text transform="translate(167.5 295.5) rotate(7.4)" font-size="8.0" text-anchor="middle" dominant-baseline="central" fill="#ffffff" stroke="#ffffff" stroke-width="0.25" font-family="Liberation Sans">P1</text>
<text transform="translate(306.8 50.0) rotate(-85.0)" font-size="7.0" text-anchor="middle" dominant-baseline="central" fill="#ffffff" stroke="#ffffff" stroke-width="0.12" font-family="Liberation Sans">X1</text>
<text transform="translate(338.4 52.6) rotate(-85.0)" font-size="7.0" text-anchor="middle" dominant-baseline="central" fill="#ffffff" stroke="#ffffff" stroke-width="0.12" font-family="Liberation Sans">X2</text>
<text transform="translate(366.7 51.8) rotate(-85.0)" font-size="6.0" text-anchor="middle" dominant-baseline="central" fill="#ffffff" stroke="#ffffff" stroke-width="0.12" font-family="Liberation Sans">U35</text>
<text transform="translate(270.4 105.0) rotate(-84.5)" font-size="6.0" text-anchor="middle" dominant-baseline="central" fill="#ffffff" stroke="#ffffff" stroke-width="0.12" font-family="Liberation Sans">U36</text>
<text transform="translate(319.0 114.9) rotate(-84.4)" font-size="6.0" text-anchor="middle" dominant-baseline="central" fill="#ffffff" stroke="#ffffff" stroke-width="0.12" font-family="Liberation Sans">U95</text>
<text transform="translate(257.0 130.0) rotate(-84.2)" font-size="6.0" text-anchor="middle" dominant-baseline="central" fill="#ffffff" stroke="#ffffff" stroke-width="0.12" font-family="Liberation Sans">U91</text>
<text transform="translate(305.0 136.0) rotate(-84.2)" font-size="6.0" text-anchor="middle" dominant-baseline="central" fill="#ffffff" stroke="#ffffff" stroke-width="0.12" font-family="Liberation Sans">U94</text>
<text transform="translate(246.0 154.0) rotate(-84.0)" font-size="6.0" text-anchor="middle" dominant-baseline="central" fill="#ffffff" stroke="#ffffff" stroke-width="0.12" font-family="Liberation Sans">U92</text>
<text transform="translate(293.0 171.5) rotate(-83.9)" font-size="6.0" text-anchor="middle" dominant-baseline="central" fill="#ffffff" stroke="#ffffff" stroke-width="0.12" font-family="Liberation Sans">U96</text>
<text transform="translate(230.0 181.0) rotate(-83.7)" font-size="6.0" text-anchor="middle" dominant-baseline="central" fill="#ffffff" stroke="#ffffff" stroke-width="0.12" font-family="Liberation Sans">U93</text>
<text transform="translate(284.0 193.0) rotate(-83.7)" font-size="6.0" text-anchor="middle" dominant-baseline="central" fill="#ffffff" stroke="#ffffff" stroke-width="0.12" font-family="Liberation Sans">U102</text>
<text transform="translate(607.0 71.5) rotate(-85.1)" font-size="6.0" text-anchor="middle" dominant-baseline="central" fill="#ffffff" stroke="#ffffff" stroke-width="0.12" font-family="Liberation Sans">U33</text>
<text transform="translate(549.6 128.0) rotate(-84.5)" font-size="6.0" text-anchor="middle" dominant-baseline="central" fill="#ffffff" stroke="#ffffff" stroke-width="0.12" font-family="Liberation Sans">U24</text>
<text transform="translate(609.0 134.4) rotate(-84.5)" font-size="6.0" text-anchor="middle" dominant-baseline="central" fill="#ffffff" stroke="#ffffff" stroke-width="0.12" font-family="Liberation Sans">U26</text>
<text transform="translate(621.5 136.0) rotate(-84.5)" font-size="6.0" text-anchor="middle" dominant-baseline="central" fill="#ffffff" stroke="#ffffff" stroke-width="0.12" font-family="Liberation Sans">R71</text>
<text transform="translate(636.0 137.0) rotate(-84.5)" font-size="6.0" text-anchor="middle" dominant-baseline="central" fill="#ffffff" stroke="#ffffff" stroke-width="0.12" font-family="Liberation Sans">R49</text>
<text transform="translate(600.0 164.0) rotate(-84.2)" font-size="6.0" text-anchor="middle" dominant-baseline="central" fill="#ffffff" stroke="#ffffff" stroke-width="0.12" font-family="Liberation Sans">U29</text>
<text transform="translate(533.0 189.8) rotate(-84.0)" font-size="6.0" text-anchor="middle" dominant-baseline="central" fill="#ffffff" stroke="#ffffff" stroke-width="0.12" font-family="Liberation Sans">U31</text>
<text transform="translate(595.6 190.9) rotate(-84.0)" font-size="6.0" text-anchor="middle" dominant-baseline="central" fill="#ffffff" stroke="#ffffff" stroke-width="0.12" font-family="Liberation Sans">U32</text>
<text transform="translate(542.0 160.0) rotate(-84.2)" font-size="6.0" text-anchor="middle" dominant-baseline="central" fill="#ffffff" stroke="#ffffff" stroke-width="0.12" font-family="Liberation Sans">U30</text>
<text transform="translate(149.0 270.0) rotate(-82.8)" font-size="7.5" text-anchor="middle" dominant-baseline="central" fill="#ffffff" stroke="#ffffff" stroke-width="0.25" font-family="Liberation Sans">P2</text>
<text transform="translate(369.0 296.3) rotate(7.2)" font-size="7.0" text-anchor="middle" dominant-baseline="central" fill="#ffffff" stroke="#ffffff" stroke-width="0.12" font-family="Liberation Sans">50</text>
<text transform="translate(360.0 317.7) rotate(7.4)" font-size="7.0" text-anchor="middle" dominant-baseline="central" fill="#ffffff" stroke="#ffffff" stroke-width="0.12" font-family="Liberation Sans">49</text>
<text transform="translate(376.4 319.0) rotate(-82.6)" font-size="7.5" text-anchor="middle" dominant-baseline="central" fill="#ffffff" stroke="#ffffff" stroke-width="0.25" font-family="Liberation Sans">U1</text>
<text transform="translate(179.0 281.0) rotate(7.2)" font-size="7.0" text-anchor="middle" dominant-baseline="central" fill="#ffffff" stroke="#ffffff" stroke-width="0.12" font-family="Liberation Sans">2</text>
<text transform="translate(633.4 306.0) rotate(7.0)" font-size="7.0" text-anchor="middle" dominant-baseline="central" fill="#ffffff" stroke="#ffffff" stroke-width="0.12" font-family="Liberation Sans">3</text>
<path d="M475.9 197.4L485.3 198.4" stroke="#c9824a" stroke-width="2"/>
<path d="M475.6 199.3L484.5 200.2M474.5 202.4L483.5 203.4M473.5 205.5L482.5 206.5M472.5 208.7L481.5 209.6M471.5 211.8L480.5 212.8" stroke="#ece8e4" stroke-width="1.6"/>
<path d="M523.1 203.8L532.5 204.8" stroke="#c9824a" stroke-width="2"/>
<path d="M522.8 205.7L531.7 206.7M521.9 208.8L530.9 209.8M521.0 212.0L530.0 213.0M520.1 215.2L529.1 216.2M519.2 218.4L528.2 219.4" stroke="#ece8e4" stroke-width="1.6"/>
<path d="M540.5 205.3L549.9 206.3" stroke="#c9824a" stroke-width="2"/>
<path d="M540.3 207.2L549.2 208.1M539.4 210.3L548.3 211.3M538.5 213.5L547.5 214.5M537.7 216.7L546.6 217.7M536.8 219.9L545.8 220.9" stroke="#ece8e4" stroke-width="1.6"/>
<path d="M585.3 208.2L594.6 209.2" stroke="#c9824a" stroke-width="2"/>
<path d="M585.0 210.1L593.9 211.1M584.3 213.3L593.2 214.3M583.5 216.5L592.5 217.5M582.8 219.7L591.7 220.7M582.0 223.0L591.0 224.0" stroke="#ece8e4" stroke-width="1.6"/>
<path d="M562.4 218.2L571.7 219.2" stroke="#c9824a" stroke-width="2"/>
<path d="M562.1 220.1L571.0 221.1M561.3 223.3L570.3 224.3M560.5 226.5L569.5 227.5M559.7 229.7L568.7 230.7M558.9 232.9L567.9 233.9" stroke="#ece8e4" stroke-width="1.6"/>
<polygon points="144.5,304.5 629.0,368.0 627.0,381.0 138.0,319.0" fill="#bd7838" opacity="0.8"/>
<polygon points="159.0,322.5 627.0,381.0 625.0,395.0 149.0,343.5" fill="#b47032" opacity="0.6"/>
<path d="M157 334 L624 394 M153 351 L623 405 M139 312 L627 379" stroke="#c88450" stroke-width="0.6" opacity="0.6"/>
<path d="M204 311 L205 335 M242 323 L254 365 M299 327 L306 373 M346 333 L352 379 M493 351 L493 375 M615 369 L615 395 M254 318 L257 333 M267 320 L269 338" stroke="#6a4020" stroke-width="0.8" opacity="0.8"/>
<rect x="178.0" y="325.6" width="8" height="10" fill="#2a2a2a"/>
<rect x="178.0" y="325.6" width="4.0" height="10" fill="#e8e8e8"/>
<rect x="194.5" y="327.5" width="5" height="9" fill="#2a2a2a"/>
<rect x="194.5" y="327.5" width="2.5" height="9" fill="#e8e8e8"/>
<rect x="369.0" y="351.0" width="5" height="8" fill="#2a2a2a"/>
<rect x="369.0" y="351.0" width="2.5" height="8" fill="#e8e8e8"/>
<rect x="265.5" y="334.5" width="3" height="7" fill="#2a2a2a"/>
<rect x="265.5" y="334.5" width="1.5" height="7" fill="#e8e8e8"/>
<rect x="262.5" y="367.7" width="8" height="3.5" fill="#e8ecf0"/>
<rect x="279.6" y="370.0" width="8" height="3.5" fill="#e8ecf0"/>
<polygon points="180.7,219.5 188.7,220.0 187.7,224.5 179.7,224.0" fill="#dde0ea"/>
<polygon points="185.7,219.8 188.7,220.0 187.7,224.5 184.7,224.3" fill="#c98a55"/>
<polygon points="159.0,265.0 167.0,265.5 166.0,270.0 158.0,269.5" fill="#dde0ea"/>
<polygon points="164.0,265.3 167.0,265.5 166.0,270.0 163.0,269.8" fill="#c98a55"/>
<polygon points="179.0,306.0 187.0,307.0 186.0,315.0 181.0,317.0" fill="#1d4a2a"/>
</svg>
<svg style="left:220px;top:445px" width="70" height="70">
<path d="M43.5 42 L42.3 25" stroke="#2f5fb8" stroke-width="2.6"/>
<path d="M38.5 26.5 q4 -8 3.8 -7.5 q0 0 4.2 7.2 z" fill="#5f8ee0"/>
<path d="M43.5 42 L21 38.5" stroke="#c85060" stroke-width="2.4"/>
<path d="M22 34.5 l-7 3.5 l6.5 4.5 z" fill="#e07a88"/>
<path d="M43.5 42 L37 58" stroke="#3c8a2c" stroke-width="2.6"/>
<path d="M32.5 56 l3.5 8.5 l5 -6.5 z" fill="#8cc858"/>
</svg>
<div class="t" style="left:62.80000000000001px;width:400px;text-align:center;top:452.8px;font-size:7px;line-height:9.1px;color:#8f9cc8;font-weight:normal;">Z</div>
<div class="t" style="left:28.80000000000001px;width:400px;text-align:center;top:477.4px;font-size:7px;line-height:9.1px;color:#d08898;font-weight:normal;">X</div>
<svg style="left:0;top:0" width="1024" height="556">
<g fill="none" stroke="#6a6a70" stroke-width="3.4" stroke-linecap="square" opacity="0.55"><g transform="translate(751.5,508)"><path d="M1.5 2.5H10 M2 3V10H11 M8 3V23.5l-2.2 -1.6 M8 11L1 21 M15 0.5L12 8 M14 5.5V24.5 M19.5 0.8L21 3.5 M14 5.5H25.5 M19.5 6V23 M14 11H24.5 M14 16.5H24.5 M14 23H26"/></g><g transform="translate(779,508)"><path d="M3 1V14 M3 1H23V14H3 M6 6.5H20 M13 2.5V7L7 12.5 M13 7L19.5 12.5 M4 17L2 22 M8 16.5Q8 24 13.5 23.5H19V21 M11.5 16L13.5 19 M20.5 16.5L23.5 21.5"/></g><g transform="translate(808,508)"><path d="M7 0.5L1.5 10 M5 6V25 M15 0.5L17 3 M9.5 5H25 M11.5 9.5H23.5 M11.5 13.5H23.5 M11.5 17.5V24.5 M11.5 17.5H23.5V24.5H11.5"/></g><g transform="translate(835,508)"><path d="M12.5 0.3L10.5 2.5 M5 3V15 M5 3H21V15H5 M5 7H21 M5 11H21 M4 18L2 23 M8 17.5Q8 25 13.5 24.5H19V22 M11.5 17L13.5 20 M20.5 17.5L23.5 22.5"/></g></g>
<g fill="none" stroke="#ffffff" stroke-width="2" stroke-linecap="square"><g transform="translate(751.5,508)"><path d="M1.5 2.5H10 M2 3V10H11 M8 3V23.5l-2.2 -1.6 M8 11L1 21 M15 0.5L12 8 M14 5.5V24.5 M19.5 0.8L21 3.5 M14 5.5H25.5 M19.5 6V23 M14 11H24.5 M14 16.5H24.5 M14 23H26"/></g><g transform="translate(779,508)"><path d="M3 1V14 M3 1H23V14H3 M6 6.5H20 M13 2.5V7L7 12.5 M13 7L19.5 12.5 M4 17L2 22 M8 16.5Q8 24 13.5 23.5H19V21 M11.5 16L13.5 19 M20.5 16.5L23.5 21.5"/></g><g transform="translate(808,508)"><path d="M7 0.5L1.5 10 M5 6V25 M15 0.5L17 3 M9.5 5H25 M11.5 9.5H23.5 M11.5 13.5H23.5 M11.5 17.5V24.5 M11.5 17.5H23.5V24.5H11.5"/></g><g transform="translate(835,508)"><path d="M12.5 0.3L10.5 2.5 M5 3V15 M5 3H21V15H5 M5 7H21 M5 11H21 M4 18L2 23 M8 17.5Q8 25 13.5 24.5H19V22 M11.5 17L13.5 20 M20.5 17.5L23.5 22.5"/></g></g>
<g transform="translate(694,507)">
<g fill="#ffffff" stroke="#808088" stroke-width="0.8">
<ellipse cx="4" cy="10" rx="3.2" ry="3.8"/><ellipse cx="9.5" cy="4" rx="3.2" ry="3.8"/><ellipse cx="16" cy="4" rx="3.2" ry="3.8"/><ellipse cx="21.5" cy="10" rx="3.2" ry="3.8"/>
<path d="M12.8 11 C8 11 4 18 4.5 22 C5 25.5 9 25.5 12.8 24.5 C16.5 25.5 20.5 25.5 21 22 C21.5 18 17.5 11 12.8 11z"/>
</g>
<text x="12.8" y="23.3" font-size="8.5" text-anchor="middle" fill="#9a9aa0" font-family="Liberation Sans">du</text>
</g>
</svg>
<div class="t" style="left:720px;top:499px;font-size:30px;line-height:40px;color:#fff;text-shadow:0 0 1px #555,0 0 1px #555">@</div>
<div class="t" style="left:858px;top:499px;font-size:29.4px;line-height:40px;color:#fff;letter-spacing:1.2px;text-shadow:0 0 1px #555,0 0 1px #555">YAENTEK</div></body></html>
